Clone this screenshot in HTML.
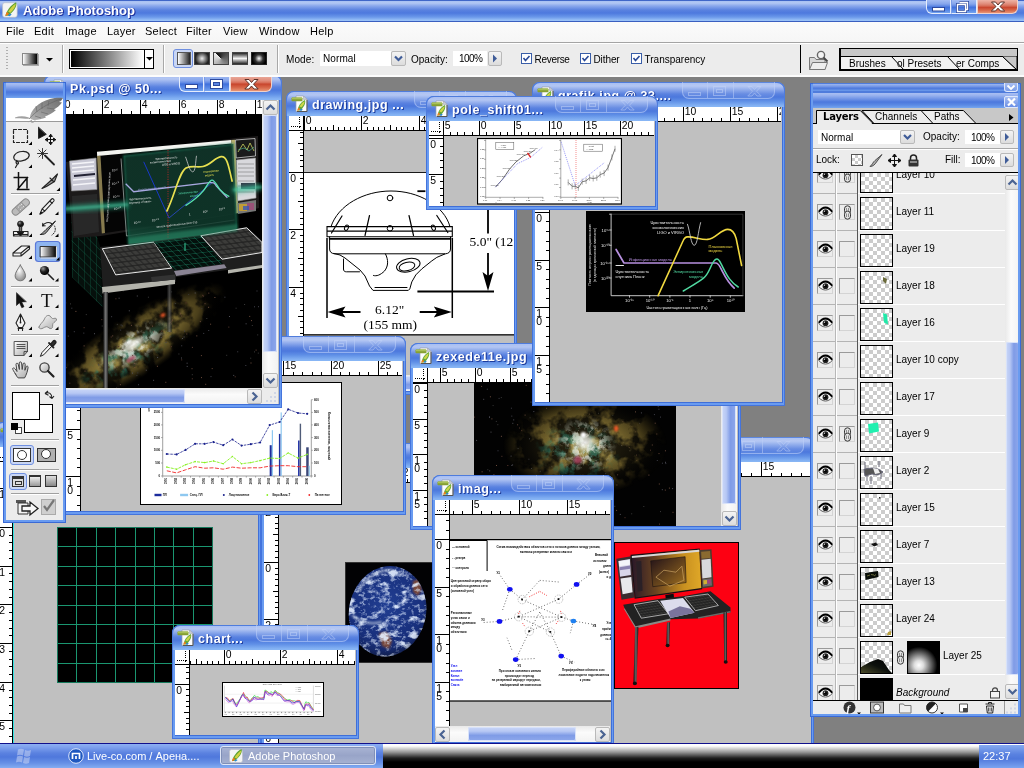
<!DOCTYPE html><html><head><meta charset="utf-8"><title>Adobe Photoshop</title><style>
html,body{margin:0;padding:0}
body{width:1024px;height:768px;overflow:hidden;background:#808080;position:relative;font-family:"Liberation Sans",sans-serif;font-size:11px;color:#000;line-height:1}
div,span,svg{position:absolute;box-sizing:border-box}
svg{overflow:hidden}
.t{white-space:nowrap}
.win{background:#699bf0;border-radius:8px 8px 0 0;box-shadow:inset 0 0 0 1px #4474dc}
.tb{left:0;right:0;top:0;height:25px;border-radius:8px 8px 0 0;border:1px solid #4f7cdc;border-bottom:0;
 background:linear-gradient(#a9bff2 0,#b3c6f3 3px,#86a4ea 7px,#5a82e0 11px,#4c78dd 14px,#5f8fe6 18px,#86b4f4 23px,#8ab8f5 25px)}
.ttl{color:#fff;font-family:"Liberation Sans",sans-serif;font-weight:bold;font-size:12.5px;text-shadow:1px 1px 0 #1c3c9c,1px 0 0 #3a5cc0;white-space:nowrap;letter-spacing:.55px}
.cv{background:#c0c0c0}
.sbv{background:linear-gradient(90deg,#e9e9e9,#fbfbfb 40%,#f2f2f2)}
.sbh{background:linear-gradient(#e9e9e9,#fbfbfb 40%,#f2f2f2)}
.thv{border-radius:2px;background:linear-gradient(90deg,#c9d6f7 0,#b7c8f4 30%,#7f9be6 60%,#8ea8ec 100%);box-shadow:inset 0 0 0 1px #d8e2fa}
.thh{border-radius:2px;background:linear-gradient(#c9d6f7 0,#b7c8f4 30%,#7f9be6 60%,#8ea8ec 100%);box-shadow:inset 0 0 0 1px #d8e2fa}
.sbb{background:linear-gradient(#f4f4f4,#dcdcdc);border:1px solid #b9b9b9;border-radius:2px}
</style></head><body><div style="left:0;top:0;width:1024px;height:768px;will-change:transform;overflow:hidden"><div class="win" style="left:-5px;top:422px;width:266px;height:340px;overflow:hidden"><div class="tb"></div><div style="left:163px;top:0px;width:93px;height:17px;border-radius:0 0 7px 7px;border:1px solid rgba(190,208,248,.55);border-top:0;background:rgba(200,215,250,.13);overflow:hidden"><div style="left:24px;top:0px;width:1px;height:17px;background:rgba(190,208,248,.5)"></div><div style="left:50px;top:0px;width:1px;height:17px;background:rgba(190,208,248,.5)"></div></div><svg style="left:163px;top:0px" width="93" height="17" opacity=".5"><rect x="6.500" y="10.500" width="12" height="3" fill="none" stroke="#c4d4f8" stroke-width="1"/><rect x="31.500" y="4.500" width="12" height="9" fill="none" stroke="#c4d4f8" stroke-width="1"/><rect x="34.500" y="7.500" width="6" height="3" fill="none" stroke="#c4d4f8" stroke-width="1"/><path d="M66 4.500h4l2.500 3 2.500-3h4l-4.500 4.700 4.700 4.800h-4.200l-2.500-3-2.500 3h-4.200l4.700-4.800z" fill="none" stroke="#c4d4f8" stroke-width="1" stroke-linejoin="round"/></svg><svg style="left:5px;top:4px" width="17" height="17" viewBox="0 0 17 17"><path d="M5 1h7.500l3.500 3.500V16.500H5z" fill="#fdfdfd" stroke="#9a9ea8" stroke-width=".7"/><path d="M12.500 1v3.500H16z" fill="#c8ccd6" stroke="#9a9ea8" stroke-width=".5"/><path d="M16 5v11.500H6" fill="none" stroke="#555" stroke-width="1"/><path d="M6.500 15.500c.5-4 3-8.500 7.500-10.500 1.200 3-1.500 8-5 10.500z" fill="#62a83a"/><path d="M8.500 11.500c1-2 3-4.200 5-5.200.3 2-1.500 4.500-3 6z" fill="#d0d648"/><path d="M6.200 16l1-3.500 2.300 1.700z" fill="#f07c1c"/><path d="M8.500 15.300l1.500-1.500 1.800.7-1.600 1.400z" fill="#2a86d0"/><rect x="0.500" y="2.500" width="11" height="3.800" rx=".8" fill="#86a032"/><rect x="0.800" y="2.600" width="10.400" height="1.600" rx=".6" fill="#a8c058"/></svg><span class="ttl" style="left:26px;top:8px;">grid.psd @ 5...</span><div style="left:3px;top:25px;width:261px;height:312px;background:#3f6fd8"></div><div style="left:3px;top:25px;width:260px;height:311px;overflow:hidden;background:#c0c0c0"><svg style="left:0px;top:0px" width="15" height="15" shape-rendering="crispEdges"><rect width="15" height="15" fill="#fff"/><rect x="14" width="1" height="15" fill="#000"/><rect y="14" width="15" height="1" fill="#000"/><path d="M1.5 10.5H9M10.5 1V9" stroke="#000" stroke-width="1" stroke-dasharray="1 1" fill="none"/><path d="M9.5 10.5h2M10.5 9.5v2" stroke="#000" stroke-width="1" fill="none"/></svg><svg style="left:15px;top:0px" width="244" height="15" shape-rendering="crispEdges"><rect width="244" height="15" fill="#fff"/><path d="M-7.5 11V14M0.5 11V14M7.5 0V14M15.5 11V14M23.5 11V14M31.5 11V14M38.5 11V14M46.5 0V14M54.5 11V14M61.5 11V14M69.5 11V14M77.5 11V14M85.5 0V14M92.5 11V14M100.5 11V14M108.5 11V14M116.5 11V14M123.5 0V14M131.5 11V14M139.5 11V14M147.5 11V14M154.5 11V14M162.5 0V14M170.5 11V14M178.5 11V14M185.5 11V14M193.5 11V14M201.5 0V14M209.5 11V14M216.5 11V14M224.5 11V14M232.5 11V14M240.5 0V14" stroke="#000" stroke-width="1" fill="none"/><rect x="0" y="14" width="244" height="1" fill="#000"/><g font-family="Liberation Sans,sans-serif" font-size="10.4" fill="#000" shape-rendering="auto"><text x="8.7" y="8.2">1</text><text x="47.7" y="8.2">0</text><text x="86.7" y="8.2">1</text><text x="124.7" y="8.2">2</text><text x="163.7" y="8.2">3</text><text x="202.7" y="8.2">4</text><text x="241.7" y="8.2">5</text></g></svg><svg style="left:0px;top:15px" width="15" height="296" shape-rendering="crispEdges"><rect width="15" height="296" fill="#fff"/><path d="M0 -11.5H14M11 -4.5H14M11 3.5H14M11 11.5H14M11 19.5H14M0 26.5H14M11 34.5H14M11 42.5H14M11 50.5H14M11 57.5H14M0 65.5H14M11 73.5H14M11 80.5H14M11 88.5H14M11 96.5H14M0 104.5H14M11 111.5H14M11 119.5H14M11 127.5H14M11 135.5H14M0 142.5H14M11 150.5H14M11 158.5H14M11 166.5H14M11 173.5H14M0 181.5H14M11 189.5H14M11 197.5H14M11 204.5H14M11 212.5H14M0 220.5H14M11 228.5H14M11 235.5H14M11 243.5H14M11 251.5H14M0 258.5H14M11 266.5H14M11 274.5H14M11 282.5H14M11 289.5H14" stroke="#000" stroke-width="1" fill="none"/><rect x="14" y="0" width="1" height="296" fill="#000"/><g font-family="Liberation Sans,sans-serif" font-size="10.4" fill="#000" shape-rendering="auto"><text x="1.2" y="-2.1999999999999993">2</text><text x="1.2" y="35.8">1</text><text x="1.2" y="74.8">0</text><text x="1.2" y="113.8">1</text><text x="1.2" y="151.8">2</text><text x="1.2" y="190.8">3</text><text x="1.2" y="229.8">4</text><text x="1.2" y="267.8">5</text></g></svg><div style="left:15px;top:15px;width:1px;height:311px;background:#30e4e4"></div><div style="left:59px;top:80px;width:156px;height:156px;"><svg style="left:0;top:0" width="156" height="156" viewBox="57 527 156 156" shape-rendering="crispEdges"><rect x="57" y="527" width="156" height="156" fill="#000"/><path d="M57.5 527V683M57 527.5H213M76.9 527V683M57 546.9H213M96.3 527V683M57 566.3H213M115.7 527V683M57 585.7H213M135.1 527V683M57 605.1H213M154.5 527V683M57 624.5H213M173.9 527V683M57 643.9H213M193.3 527V683M57 663.3H213M212.7 527V683M57 682.7H213" stroke="#1a9670" stroke-width="1" fill="none"/><rect x="57.500" y="527.500" width="155" height="155" fill="none" stroke="#167a5c"/></svg></div></div></div><div class="win" style="left:261px;top:443px;width:360px;height:320px;overflow:hidden"><div class="tb"></div><div style="left:257px;top:0px;width:93px;height:17px;border-radius:0 0 7px 7px;border:1px solid rgba(190,208,248,.55);border-top:0;background:rgba(200,215,250,.13);overflow:hidden"><div style="left:24px;top:0px;width:1px;height:17px;background:rgba(190,208,248,.5)"></div><div style="left:50px;top:0px;width:1px;height:17px;background:rgba(190,208,248,.5)"></div></div><svg style="left:257px;top:0px" width="93" height="17" opacity=".5"><rect x="6.500" y="10.500" width="12" height="3" fill="none" stroke="#c4d4f8" stroke-width="1"/><rect x="31.500" y="4.500" width="12" height="9" fill="none" stroke="#c4d4f8" stroke-width="1"/><rect x="34.500" y="7.500" width="6" height="3" fill="none" stroke="#c4d4f8" stroke-width="1"/><path d="M66 4.500h4l2.500 3 2.500-3h4l-4.500 4.700 4.700 4.800h-4.200l-2.500-3-2.500 3h-4.200l4.700-4.800z" fill="none" stroke="#c4d4f8" stroke-width="1" stroke-linejoin="round"/></svg><svg style="left:5px;top:4px" width="17" height="17" viewBox="0 0 17 17"><path d="M5 1h7.500l3.500 3.500V16.500H5z" fill="#fdfdfd" stroke="#9a9ea8" stroke-width=".7"/><path d="M12.500 1v3.500H16z" fill="#c8ccd6" stroke="#9a9ea8" stroke-width=".5"/><path d="M16 5v11.500H6" fill="none" stroke="#555" stroke-width="1"/><path d="M6.500 15.500c.5-4 3-8.500 7.500-10.500 1.200 3-1.500 8-5 10.500z" fill="#62a83a"/><path d="M8.500 11.500c1-2 3-4.200 5-5.200.3 2-1.500 4.500-3 6z" fill="#d0d648"/><path d="M6.200 16l1-3.500 2.300 1.700z" fill="#f07c1c"/><path d="M8.500 15.300l1.500-1.500 1.800.7-1.600 1.400z" fill="#2a86d0"/><rect x="0.500" y="2.500" width="11" height="3.800" rx=".8" fill="#86a032"/><rect x="0.800" y="2.600" width="10.400" height="1.600" rx=".6" fill="#a8c058"/></svg><span class="ttl" style="left:26px;top:8px;">earth.jpg @ 2...</span><div style="left:3px;top:25px;width:355px;height:292px;background:#3f6fd8"></div><div style="left:3px;top:25px;width:354px;height:291px;overflow:hidden;background:#c0c0c0"><svg style="left:0px;top:0px" width="15" height="15" shape-rendering="crispEdges"><rect width="15" height="15" fill="#fff"/><rect x="14" width="1" height="15" fill="#000"/><rect y="14" width="15" height="1" fill="#000"/><path d="M1.5 10.5H9M10.5 1V9" stroke="#000" stroke-width="1" stroke-dasharray="1 1" fill="none"/><path d="M9.5 10.5h2M10.5 9.5v2" stroke="#000" stroke-width="1" fill="none"/></svg><svg style="left:15px;top:0px" width="338" height="15" shape-rendering="crispEdges"><rect width="338" height="15" fill="#fff"/><path d="M-6.5 11V14M-1.5 11V14M4.5 11V14M10.5 0V14M15.5 11V14M21.5 11V14M26.5 11V14M32.5 11V14M38.5 9V14M43.5 11V14M49.5 11V14M55.5 11V14M60.5 11V14M66.5 0V14M72.5 11V14M77.5 11V14M83.5 11V14M89.5 11V14M94.5 9V14M100.5 11V14M106.5 11V14M111.5 11V14M117.5 11V14M122.5 0V14M128.5 11V14M134.5 11V14M139.5 11V14M145.5 11V14M151.5 9V14M156.5 11V14M162.5 11V14M168.5 11V14M173.5 11V14M179.5 0V14M185.5 11V14M190.5 11V14M196.5 11V14M202.5 11V14M207.5 9V14M213.5 11V14M219.5 11V14M224.5 11V14M230.5 11V14M236.5 0V14M241.5 11V14M247.5 11V14M252.5 11V14M258.5 11V14M264.5 9V14M269.5 11V14M275.5 11V14M281.5 11V14M286.5 11V14M292.5 0V14M298.5 11V14M303.5 11V14M309.5 11V14M315.5 11V14M320.5 9V14M326.5 11V14M332.5 11V14M337.5 11V14" stroke="#000" stroke-width="1" fill="none"/><rect x="0" y="14" width="338" height="1" fill="#000"/><g font-family="Liberation Sans,sans-serif" font-size="10.4" fill="#000" shape-rendering="auto"><text x="11.7" y="8.2">2</text><text x="67.7" y="8.2">0</text><text x="123.7" y="8.2">2</text><text x="180.7" y="8.2">4</text><text x="237.7" y="8.2">6</text><text x="293.7" y="8.2">8</text></g></svg><svg style="left:0px;top:15px" width="15" height="276" shape-rendering="crispEdges"><rect width="15" height="276" fill="#fff"/><path d="M11 -10.5H14M9 -4.5H14M11 0.5H14M11 6.5H14M11 11.5H14M11 17.5H14M0 23.5H14M11 28.5H14M11 34.5H14M11 40.5H14M11 45.5H14M9 51.5H14M11 57.5H14M11 62.5H14M11 68.5H14M11 74.5H14M0 79.5H14M11 85.5H14M11 91.5H14M11 96.5H14M11 102.5H14M9 108.5H14M11 113.5H14M11 119.5H14M11 124.5H14M11 130.5H14M0 136.5H14M11 141.5H14M11 147.5H14M11 153.5H14M11 158.5H14M9 164.5H14M11 170.5H14M11 175.5H14M11 181.5H14M11 187.5H14M0 192.5H14M11 198.5H14M11 204.5H14M11 209.5H14M11 215.5H14M9 221.5H14M11 226.5H14M11 232.5H14M11 237.5H14M11 243.5H14M0 249.5H14M11 254.5H14M11 260.5H14M11 266.5H14M11 271.5H14" stroke="#000" stroke-width="1" fill="none"/><rect x="14" y="0" width="1" height="276" fill="#000"/><g font-family="Liberation Sans,sans-serif" font-size="10.4" fill="#000" shape-rendering="auto"><text x="1.2" y="32.8">2</text><text x="1.2" y="88.8">0</text><text x="1.2" y="145.8">2</text><text x="1.2" y="201.8">4</text><text x="1.2" y="258.8">6</text></g></svg><div style="left:81px;top:94px;width:100px;height:101px;"><svg style="left:0;top:0" width="100" height="101" viewBox="344 561 100 101" ><defs><clipPath id="eac"><ellipse cx="386.600" cy="610.200" rx="38.500" ry="45.500" transform="rotate(12 386.600 610.200)"/></clipPath><radialGradient id="eag" cx=".42" cy=".42" r=".62"><stop offset="0" stop-color="#213e92"/><stop offset=".6" stop-color="#182f7c"/><stop offset=".88" stop-color="#14245a"/><stop offset="1" stop-color="#0a1026"/></radialGradient><radialGradient id="eas" cx=".36" cy=".45" r=".68"><stop offset=".62" stop-color="#000" stop-opacity="0"/><stop offset=".9" stop-color="#000" stop-opacity=".55"/><stop offset="1" stop-color="#000" stop-opacity=".85"/></radialGradient><filter id="eat" x="0" y="0" width="100%" height="100%" color-interpolation-filters="sRGB"><feTurbulence type="fractalNoise" baseFrequency=".09 .13" numOctaves="5" seed="4" result="n"/><feColorMatrix in="n" type="matrix" values="0 0 0 0 .9  0 0 0 0 .94  0 0 0 0 1  4.500 0 0 0 -2.350"/></filter><filter id="eat2" x="0" y="0" width="100%" height="100%" color-interpolation-filters="sRGB"><feTurbulence type="fractalNoise" baseFrequency=".2 .26" numOctaves="3" seed="9" result="n"/><feColorMatrix in="n" type="matrix" values="0 0 0 0 .85  0 0 0 0 .9  0 0 0 0 .98  0 5 0 0 -2.700"/></filter><filter id="eab"><feGaussianBlur stdDeviation="1.200"/></filter></defs><rect x="344.500" y="561.500" width="99" height="100" fill="#020204" stroke="#333" stroke-width="1"/><g clip-path="url(#eac)"><rect x="344" y="561" width="100" height="101" fill="url(#eag)"/><path d="M412 580l6-2 3 10-4 7-5-4zM378 632l8-1 5 9-3 8-7-3z" fill="#7a4a3a" filter="url(#eab)"/><rect x="344" y="561" width="100" height="101" filter="url(#eat)" opacity=".9"/><rect x="344" y="561" width="100" height="101" filter="url(#eat2)" opacity=".55"/><path d="M358 590c5-13 20-22 34-21M351 614c8 7 18 10 30 7" stroke="#e8f0f8" stroke-width="2.500" fill="none" filter="url(#eab)" opacity=".55"/><rect x="344" y="561" width="100" height="101" fill="url(#eas)"/></g></svg></div></div></div><div class="win" style="left:560px;top:437px;width:254px;height:330px;overflow:hidden"><div class="tb"></div><div style="left:151px;top:0px;width:93px;height:17px;border-radius:0 0 7px 7px;border:1px solid rgba(190,208,248,.55);border-top:0;background:rgba(200,215,250,.13);overflow:hidden"><div style="left:24px;top:0px;width:1px;height:17px;background:rgba(190,208,248,.5)"></div><div style="left:50px;top:0px;width:1px;height:17px;background:rgba(190,208,248,.5)"></div></div><svg style="left:151px;top:0px" width="93" height="17" opacity=".5"><rect x="6.500" y="10.500" width="12" height="3" fill="none" stroke="#c4d4f8" stroke-width="1"/><rect x="31.500" y="4.500" width="12" height="9" fill="none" stroke="#c4d4f8" stroke-width="1"/><rect x="34.500" y="7.500" width="6" height="3" fill="none" stroke="#c4d4f8" stroke-width="1"/><path d="M66 4.500h4l2.500 3 2.500-3h4l-4.500 4.700 4.700 4.800h-4.200l-2.500-3-2.500 3h-4.200l4.700-4.800z" fill="none" stroke="#c4d4f8" stroke-width="1" stroke-linejoin="round"/></svg><svg style="left:5px;top:4px" width="17" height="17" viewBox="0 0 17 17"><path d="M5 1h7.500l3.500 3.500V16.500H5z" fill="#fdfdfd" stroke="#9a9ea8" stroke-width=".7"/><path d="M12.500 1v3.500H16z" fill="#c8ccd6" stroke="#9a9ea8" stroke-width=".5"/><path d="M16 5v11.500H6" fill="none" stroke="#555" stroke-width="1"/><path d="M6.500 15.500c.5-4 3-8.500 7.500-10.500 1.200 3-1.500 8-5 10.500z" fill="#62a83a"/><path d="M8.500 11.500c1-2 3-4.200 5-5.200.3 2-1.500 4.500-3 6z" fill="#d0d648"/><path d="M6.200 16l1-3.500 2.300 1.700z" fill="#f07c1c"/><path d="M8.500 15.300l1.500-1.500 1.800.7-1.600 1.400z" fill="#2a86d0"/><rect x="0.500" y="2.500" width="11" height="3.800" rx=".8" fill="#86a032"/><rect x="0.800" y="2.600" width="10.400" height="1.600" rx=".6" fill="#a8c058"/></svg><span class="ttl" style="left:26px;top:8px;">pk3.jpg</span><div style="left:3px;top:25px;width:249px;height:302px;background:#3f6fd8"></div><div style="left:3px;top:25px;width:248px;height:301px;overflow:hidden;background:#c0c0c0"><svg style="left:0px;top:0px" width="15" height="15" shape-rendering="crispEdges"><rect width="15" height="15" fill="#fff"/><rect x="14" width="1" height="15" fill="#000"/><rect y="14" width="15" height="1" fill="#000"/><path d="M1.5 10.5H9M10.5 1V9" stroke="#000" stroke-width="1" stroke-dasharray="1 1" fill="none"/><path d="M9.5 10.5h2M10.5 9.5v2" stroke="#000" stroke-width="1" fill="none"/></svg><svg style="left:15px;top:0px" width="232" height="15" shape-rendering="crispEdges"><rect width="232" height="15" fill="#fff"/><path d="M-14.5 0V14M-4.5 11V14M5.5 11V14M15.5 11V14M25.5 11V14M35.5 0V14M45.5 11V14M55.5 11V14M64.5 11V14M74.5 11V14M84.5 0V14M94.5 11V14M104.5 11V14M114.5 11V14M124.5 11V14M134.5 0V14M144.5 11V14M154.5 11V14M163.5 11V14M173.5 11V14M183.5 0V14M193.5 11V14M203.5 11V14M213.5 11V14M223.5 11V14" stroke="#000" stroke-width="1" fill="none"/><rect x="0" y="14" width="232" height="1" fill="#000"/><g font-family="Liberation Sans,sans-serif" font-size="10.4" fill="#000" shape-rendering="auto"><text x="-13.3" y="8.2">5</text><text x="36.7" y="8.2">0</text><text x="85.7" y="8.2">5</text><text x="135.7" y="8.2">10</text><text x="184.7" y="8.2">15</text></g></svg><svg style="left:0px;top:15px" width="15" height="286" shape-rendering="crispEdges"><rect width="15" height="286" fill="#fff"/><path d="M11 -13.5H14M11 -3.5H14M11 6.5H14M0 16.5H14M11 25.5H14M11 35.5H14M11 45.5H14M11 55.5H14M0 65.5H14M11 75.5H14M11 85.5H14M11 95.5H14M11 105.5H14M0 114.5H14M11 124.5H14M11 134.5H14M11 144.5H14M11 154.5H14M0 164.5H14M11 174.5H14M11 184.5H14M11 194.5H14M11 204.5H14M0 214.5H14M11 223.5H14M11 233.5H14M11 243.5H14M11 253.5H14M0 263.5H14M11 273.5H14M11 283.5H14" stroke="#000" stroke-width="1" fill="none"/><rect x="14" y="0" width="1" height="286" fill="#000"/><g font-family="Liberation Sans,sans-serif" font-size="10.4" fill="#000" shape-rendering="auto"><text x="1.2" y="25.8">5</text><text x="1.2" y="74.8">0</text><text x="1.2" y="123.8">5</text><text x="1.2" y="173.8">1</text><text x="1.2" y="181.8">0</text><text x="1.2" y="223.8">1</text><text x="1.2" y="231.8">5</text><text x="1.2" y="272.8">2</text><text x="1.2" y="280.8">0</text></g></svg><div style="left:51px;top:80px;width:125px;height:147px;"><svg style="left:0;top:0" width="125" height="147" viewBox="614 541.5 125 147" ><defs><linearGradient id="rdm" x1="0" y1="0" x2="1" y2="0"><stop offset="0" stop-color="#2a1828"/><stop offset=".35" stop-color="#6a4420"/><stop offset=".75" stop-color="#c89020"/><stop offset="1" stop-color="#e0a828"/></linearGradient><linearGradient id="rdi" x1="0" y1="0" x2="1" y2="1"><stop offset="0" stop-color="#201018"/><stop offset="1" stop-color="#a07020"/></linearGradient><linearGradient id="rdl" x1="0" x2="1"><stop offset="0" stop-color="#111"/><stop offset=".5" stop-color="#666"/><stop offset="1" stop-color="#111"/></linearGradient><pattern id="rdk" width="3" height="2.600" patternUnits="userSpaceOnUse" patternTransform="rotate(-9) skewX(35)"><rect width="3" height="2.600" fill="#1c1c1c"/><rect x=".4" y=".4" width="2.200" height="1.800" fill="#3a3a38"/></pattern></defs><rect x="614.500" y="542" width="124" height="146" fill="#fd0012" stroke="#000" stroke-width="1"/><polygon points="616.3,558.3 631.3,555.8 634.7,597.1 621.5,599.2" fill="#3a2c30"/><polygon points="699.7,549.6 711.5,548.8 713.6,586.2 701.8,588.1" fill="#4a3c30"/><polygon points="618.4,560.4 629.9,558.5 630.9,574.6 620.1,576.2" fill="#d8d4e8"/><polygon points="620.5,577.9 631.3,576.5 632.6,591.7 622.6,593.8" fill="#e8e8ec"/><polygon points="618.8,560.8 629.7,559.2 629.9,564.2 619.2,565.8" fill="#f4f4fa"/><polygon points="619.5,566.7 630.1,565.0 630.3,568.3 619.7,569.8" fill="#8a80b0"/><polygon points="701.1,551.2 710.1,550.4 710.5,557.5 701.5,558.3" fill="#8a6a30"/><polygon points="701.5,559.2 710.7,558.3 711.5,576.7 702.4,577.9" fill="#d8d8dc"/><polygon points="702.6,578.8 711.5,577.7 712.0,585.0 703.0,586.2" fill="#6a6a6a"/><polygon points="703.4,579.8 707.0,579.4 707.2,583.3 703.6,584.0" fill="#d0b030"/><polygon points="707.2,579.4 710.5,579.0 710.7,582.9 707.4,583.3" fill="#a04080"/><polygon points="630.5,554.2 699.7,547.9 702.2,588.8 634.7,598.3" fill="#181014"/><polygon points="631.8,555.4 699.2,549.2 701.3,587.5 635.5,596.9" fill="url(#rdm)"/><polygon points="631.8,555.4 699.2,549.2 699.4,551.2 631.9,557.5" fill="#d8d8d8"/><polygon points="650.7,560.4 685.1,556.2 686.1,582.1 652.8,586.2" fill="url(#rdi)" stroke="#1a1010" stroke-width=".6"/><polygon points="636.1,561.0 641.3,560.4 642.6,590.2 637.6,591.2" fill="#2a2026"/><path d="M655.9 576.7l8-7 12 2 6-6 2 14-14 6z" fill="none" stroke="#c8a060" stroke-width=".7"/><polygon points="665.3,594.4 673.6,593.3 674.2,598.8 665.9,599.6" fill="#0c0c0c"/><polygon points="623.2,604.2 659.0,598.5 683.0,595.8 710.5,590.8 730.5,606.9 730.5,611.7 698.0,617.9 671.5,618.8 635.5,627.1 624.7,608.3" fill="#222"/><polygon points="624.7,607.9 635.5,625.8 670.5,617.9 670.5,620.0 635.5,627.9 623.8,608.3" fill="#8a8a86"/><polygon points="698.0,616.7 730.5,610.4 730.5,612.1 698.0,618.3" fill="#6a6a68"/><polygon points="634.0,604.2 658.0,600.2 668.4,613.3 641.3,617.7" fill="url(#rdk)" stroke="#ddd" stroke-width=".7"/><polygon points="684.7,596.7 708.0,593.5 718.4,605.0 695.5,610.2" fill="url(#rdk)" stroke="#ddd" stroke-width=".7"/><polygon points="660.1,600.2 683.0,597.5 694.5,612.3 670.5,617.5" fill="#dcdcec"/><polygon points="668.4,611.0 679.9,605.8 690.3,608.3 694.5,612.3 670.5,617.5" fill="#7a749c"/><polygon points="635.1,626.7 638.4,626.2 636.5,684.0 633.4,684.0" fill="url(#rdl)"/><polygon points="667.0,622.1 670.1,621.7 669.2,645.4 666.3,645.4" fill="url(#rdl)"/><polygon points="723.6,611.7 727.0,611.2 727.0,662.1 724.2,662.1" fill="url(#rdl)"/><ellipse cx="634.9" cy="682.9" rx="2" ry="1.800" fill="#111"/><ellipse cx="667.6" cy="645.0" rx="2" ry="1.800" fill="#111"/><ellipse cx="725.7" cy="661.5" rx="2" ry="1.800" fill="#111"/></svg></div></div></div><div class="win" style="left:286px;top:91px;width:231px;height:304px;overflow:hidden"><div class="tb"></div><div style="left:128px;top:0px;width:93px;height:17px;border-radius:0 0 7px 7px;border:1px solid rgba(190,208,248,.55);border-top:0;background:rgba(200,215,250,.13);overflow:hidden"><div style="left:24px;top:0px;width:1px;height:17px;background:rgba(190,208,248,.5)"></div><div style="left:50px;top:0px;width:1px;height:17px;background:rgba(190,208,248,.5)"></div></div><svg style="left:128px;top:0px" width="93" height="17" opacity=".5"><rect x="6.500" y="10.500" width="12" height="3" fill="none" stroke="#c4d4f8" stroke-width="1"/><rect x="31.500" y="4.500" width="12" height="9" fill="none" stroke="#c4d4f8" stroke-width="1"/><rect x="34.500" y="7.500" width="6" height="3" fill="none" stroke="#c4d4f8" stroke-width="1"/><path d="M66 4.500h4l2.500 3 2.500-3h4l-4.500 4.700 4.700 4.800h-4.200l-2.500-3-2.500 3h-4.200l4.700-4.800z" fill="none" stroke="#c4d4f8" stroke-width="1" stroke-linejoin="round"/></svg><svg style="left:5px;top:4px" width="17" height="17" viewBox="0 0 17 17"><path d="M5 1h7.500l3.500 3.500V16.500H5z" fill="#fdfdfd" stroke="#9a9ea8" stroke-width=".7"/><path d="M12.500 1v3.500H16z" fill="#c8ccd6" stroke="#9a9ea8" stroke-width=".5"/><path d="M16 5v11.500H6" fill="none" stroke="#555" stroke-width="1"/><path d="M6.500 15.500c.5-4 3-8.500 7.500-10.500 1.200 3-1.500 8-5 10.500z" fill="#62a83a"/><path d="M8.500 11.500c1-2 3-4.200 5-5.200.3 2-1.500 4.500-3 6z" fill="#d0d648"/><path d="M6.200 16l1-3.500 2.300 1.700z" fill="#f07c1c"/><path d="M8.500 15.300l1.500-1.500 1.800.7-1.600 1.400z" fill="#2a86d0"/><rect x="0.500" y="2.500" width="11" height="3.800" rx=".8" fill="#86a032"/><rect x="0.800" y="2.600" width="10.400" height="1.600" rx=".6" fill="#a8c058"/></svg><span class="ttl" style="left:26px;top:8px;">drawing.jpg ...</span><div style="left:3px;top:25px;width:226px;height:276px;background:#3f6fd8"></div><div style="left:3px;top:25px;width:225px;height:275px;overflow:hidden;background:#c0c0c0"><svg style="left:0px;top:0px" width="15" height="15" shape-rendering="crispEdges"><rect width="15" height="15" fill="#fff"/><rect x="14" width="1" height="15" fill="#000"/><rect y="14" width="15" height="1" fill="#000"/><path d="M1.5 10.5H9M10.5 1V9" stroke="#000" stroke-width="1" stroke-dasharray="1 1" fill="none"/><path d="M9.5 10.5h2M10.5 9.5v2" stroke="#000" stroke-width="1" fill="none"/></svg><svg style="left:15px;top:0px" width="209" height="15" shape-rendering="crispEdges"><rect width="209" height="15" fill="#fff"/><path d="M-5.5 11V14M0.5 0V14M6.5 11V14M11.5 11V14M17.5 11V14M23.5 11V14M29.5 9V14M34.5 11V14M40.5 11V14M46.5 11V14M52.5 11V14M57.5 0V14M63.5 11V14M69.5 11V14M74.5 11V14M80.5 11V14M86.5 9V14M92.5 11V14M97.5 11V14M103.5 11V14M109.5 11V14M115.5 0V14M120.5 11V14M126.5 11V14M132.5 11V14M138.5 11V14M143.5 9V14M149.5 11V14M155.5 11V14M160.5 11V14M166.5 11V14M172.5 0V14M178.5 11V14M183.5 11V14M189.5 11V14M195.5 11V14M201.5 9V14M206.5 11V14" stroke="#000" stroke-width="1" fill="none"/><rect x="0" y="14" width="209" height="1" fill="#000"/><g font-family="Liberation Sans,sans-serif" font-size="10.4" fill="#000" shape-rendering="auto"><text x="1.7" y="8.2">0</text><text x="58.7" y="8.2">2</text><text x="116.7" y="8.2">4</text><text x="173.7" y="8.2">6</text></g></svg><svg style="left:0px;top:15px" width="15" height="260" shape-rendering="crispEdges"><rect width="15" height="260" fill="#fff"/><path d="M11 -10.5H14M11 -4.5H14M11 1.5H14M11 6.5H14M9 12.5H14M11 18.5H14M11 24.5H14M11 29.5H14M11 35.5H14M0 41.5H14M11 47.5H14M11 52.5H14M11 58.5H14M11 64.5H14M9 70.5H14M11 75.5H14M11 81.5H14M11 87.5H14M11 93.5H14M0 98.5H14M11 104.5H14M11 110.5H14M11 116.5H14M11 121.5H14M9 127.5H14M11 133.5H14M11 139.5H14M11 144.5H14M11 150.5H14M0 156.5H14M11 162.5H14M11 167.5H14M11 173.5H14M11 179.5H14M9 185.5H14M11 190.5H14M11 196.5H14M11 202.5H14M11 208.5H14M0 213.5H14M11 219.5H14M11 225.5H14M11 231.5H14M11 236.5H14M9 242.5H14M11 248.5H14M11 254.5H14M11 259.5H14" stroke="#000" stroke-width="1" fill="none"/><rect x="14" y="0" width="1" height="260" fill="#000"/><g font-family="Liberation Sans,sans-serif" font-size="10.4" fill="#000" shape-rendering="auto"><text x="1.2" y="50.8">0</text><text x="1.2" y="107.8">2</text><text x="1.2" y="165.8">4</text><text x="1.2" y="222.8">6</text></g></svg><div style="left:15px;top:56px;width:230px;height:164px;"><svg style="left:0;top:0" width="230" height="164" viewBox="304 172 230 164" ><rect x="304" y="172" width="230" height="164" fill="#fff"/><rect x="304" y="171.500" width="230" height="1.400" fill="#000"/><rect x="304" y="334.200" width="230" height="1.400" fill="#000"/><g fill="none" stroke="#000" stroke-width="1" stroke-linecap="round"><path d="M331 226.600C338 205 364 191 391 191c27 0 53 14 59 35.600"/><path d="M327 226.600H452.300V236.800H327zM327 231.100H452.300" stroke-width="1.100"/><path d="M329.600 238.800H450.500" stroke-width="1.800"/><path d="M329.600 237v12c0 3 2 4.500 5 4.800H445.500c3-.3 5-1.800 5-4.800v-12"/><path d="M334 253.500l6 1.500 5 3 15 12 5 6 4.500 10 3.500 4.400H408.300l1.500-1.500 2-7 4-7 6-6 10-8 5-3.500 8-3.400"/><path d="M375 287.500H407"/><path d="M343.500 259v10c0 2 1 2.800 3 2.800h13"/><path d="M385.500 254c3 6 3 12-1 17-4 4-8 5.500-11 4.500"/><ellipse cx="408.300" cy="265.300" rx="12" ry="6.500" transform="rotate(-14 408.300 265.300)"/><ellipse cx="407" cy="266.500" rx="8" ry="4.200" transform="rotate(-14 407 266.500)"/><path d="M342 216l-10.500 17M369.500 215.500l-4.500 20M409 215.500l4.500 20M436.800 215.500l11 17" stroke-width="1.200"/><circle cx="390" cy="198" r="2.800"/><circle cx="390" cy="228.300" r="2.800"/><ellipse cx="346.500" cy="227.700" rx="1.800" ry="2.800" transform="rotate(25 346.500 227.700)"/><ellipse cx="433.400" cy="227.700" rx="1.800" ry="2.800" transform="rotate(-25 433.400 227.700)"/><path d="M327 238v80M452.300 238v80" stroke-width="1.500" stroke-linecap="butt"/><path d="M417.400 291.500H494" stroke-width="2" stroke-linecap="butt"/><path d="M417.400 191.200h8" stroke-width="1.800" stroke-linecap="butt"/><path d="M336 312h24.500M419.700 312h24" stroke-width="1.800" stroke-linecap="butt"/><path d="M488 210v23.500M488 253v30" stroke-width="1.800" stroke-linecap="butt"/></g><path d="M327.500 312l18-5.500-3.500 5.500 3.500 5.500zM451.800 312l-18-5.500 3.500 5.500-3.500 5.500zM488 291l-5.500-19 5.500 4 5.500-4z" fill="#000"/><g font-family="Liberation Serif,serif" font-size="13.500" fill="#000"><text x="375" y="314">6.12"</text><text x="363.500" y="328.500">(155 mm)</text><text x="469.500" y="246">5.0" (127 mm)</text></g></svg></div><div class="sbh" style="left:0px;top:259px;width:224px;height:16px;"></div><div class="sbb" style="left:0px;top:259.5px;width:15px;height:15px"><svg style="left:-1px;top:-1px" width="15" height="15"><path d="M9.500 3.500L5.500 7.500l4 4" stroke="#4a6392" stroke-width="2.200" fill="none"/></svg></div><div class="sbb" style="left:209px;top:259.5px;width:15px;height:15px"><svg style="left:-1px;top:-1px" width="15" height="15"><path d="M5.500 3.500L9.500 7.500l-4 4" stroke="#4a6392" stroke-width="2.200" fill="none"/></svg></div><div class="thh" style="left:40px;top:260px;width:168px;height:14px;"></div></div></div><div class="win" style="left:63px;top:336px;width:343px;height:179px;overflow:hidden"><div class="tb"></div><div style="left:240px;top:0px;width:93px;height:17px;border-radius:0 0 7px 7px;border:1px solid rgba(190,208,248,.55);border-top:0;background:rgba(200,215,250,.13);overflow:hidden"><div style="left:24px;top:0px;width:1px;height:17px;background:rgba(190,208,248,.5)"></div><div style="left:50px;top:0px;width:1px;height:17px;background:rgba(190,208,248,.5)"></div></div><svg style="left:240px;top:0px" width="93" height="17" opacity=".5"><rect x="6.500" y="10.500" width="12" height="3" fill="none" stroke="#c4d4f8" stroke-width="1"/><rect x="31.500" y="4.500" width="12" height="9" fill="none" stroke="#c4d4f8" stroke-width="1"/><rect x="34.500" y="7.500" width="6" height="3" fill="none" stroke="#c4d4f8" stroke-width="1"/><path d="M66 4.500h4l2.500 3 2.500-3h4l-4.500 4.700 4.700 4.800h-4.200l-2.500-3-2.500 3h-4.200l4.700-4.800z" fill="none" stroke="#c4d4f8" stroke-width="1" stroke-linejoin="round"/></svg><svg style="left:5px;top:4px" width="17" height="17" viewBox="0 0 17 17"><path d="M5 1h7.500l3.500 3.500V16.500H5z" fill="#fdfdfd" stroke="#9a9ea8" stroke-width=".7"/><path d="M12.500 1v3.500H16z" fill="#c8ccd6" stroke="#9a9ea8" stroke-width=".5"/><path d="M16 5v11.500H6" fill="none" stroke="#555" stroke-width="1"/><path d="M6.500 15.500c.5-4 3-8.500 7.500-10.500 1.200 3-1.500 8-5 10.500z" fill="#62a83a"/><path d="M8.500 11.500c1-2 3-4.200 5-5.200.3 2-1.500 4.500-3 6z" fill="#d0d648"/><path d="M6.200 16l1-3.500 2.300 1.700z" fill="#f07c1c"/><path d="M8.500 15.300l1.500-1.500 1.800.7-1.600 1.400z" fill="#2a86d0"/><rect x="0.500" y="2.500" width="11" height="3.800" rx=".8" fill="#86a032"/><rect x="0.800" y="2.600" width="10.400" height="1.600" rx=".6" fill="#a8c058"/></svg><span class="ttl" style="left:26px;top:8px;">stat.gif @ 1...</span><div style="left:3px;top:25px;width:338px;height:151px;background:#3f6fd8"></div><div style="left:3px;top:25px;width:337px;height:150px;overflow:hidden;background:#c0c0c0"><svg style="left:0px;top:0px" width="15" height="15" shape-rendering="crispEdges"><rect width="15" height="15" fill="#fff"/><rect x="14" width="1" height="15" fill="#000"/><rect y="14" width="15" height="1" fill="#000"/><path d="M1.5 10.5H9M10.5 1V9" stroke="#000" stroke-width="1" stroke-dasharray="1 1" fill="none"/><path d="M9.5 10.5h2M10.5 9.5v2" stroke="#000" stroke-width="1" fill="none"/></svg><svg style="left:15px;top:0px" width="321" height="15" shape-rendering="crispEdges"><rect width="321" height="15" fill="#fff"/><path d="M-14.5 11V14M-5.5 11V14M4.5 11V14M13.5 0V14M23.5 11V14M32.5 11V14M42.5 11V14M51.5 11V14M60.5 0V14M70.5 11V14M79.5 11V14M89.5 11V14M98.5 11V14M108.5 0V14M117.5 11V14M127.5 11V14M136.5 11V14M146.5 11V14M155.5 0V14M164.5 11V14M174.5 11V14M183.5 11V14M193.5 11V14M202.5 0V14M212.5 11V14M221.5 11V14M231.5 11V14M240.5 11V14M250.5 0V14M259.5 11V14M268.5 11V14M278.5 11V14M287.5 11V14M297.5 0V14M306.5 11V14M316.5 11V14" stroke="#000" stroke-width="1" fill="none"/><rect x="0" y="14" width="321" height="1" fill="#000"/><g font-family="Liberation Sans,sans-serif" font-size="10.4" fill="#000" shape-rendering="auto"><text x="14.7" y="8.2">5</text><text x="61.7" y="8.2">0</text><text x="109.7" y="8.2">5</text><text x="156.7" y="8.2">10</text><text x="203.7" y="8.2">15</text><text x="251.7" y="8.2">20</text><text x="298.7" y="8.2">25</text></g></svg><svg style="left:0px;top:15px" width="15" height="135" shape-rendering="crispEdges"><rect width="15" height="135" fill="#fff"/><path d="M11 -12.5H14M11 -2.5H14M0 6.5H14M11 15.5H14M11 25.5H14M11 34.5H14M11 44.5H14M0 53.5H14M11 63.5H14M11 72.5H14M11 82.5H14M11 91.5H14M0 100.5H14M11 110.5H14M11 119.5H14M11 129.5H14" stroke="#000" stroke-width="1" fill="none"/><rect x="14" y="0" width="1" height="135" fill="#000"/><g font-family="Liberation Sans,sans-serif" font-size="10.4" fill="#000" shape-rendering="auto"><text x="1.2" y="15.8">0</text><text x="1.2" y="62.8">5</text><text x="1.2" y="109.8">1</text><text x="1.2" y="117.8">0</text></g></svg><div style="left:74px;top:21px;width:202px;height:123px;"><svg style="left:0;top:0" width="202" height="123" viewBox="140 381.5 202 123" ><rect x="140.500" y="382" width="201" height="122" fill="#fff" stroke="#000" stroke-width="1"/><g fill="none"><path d="M162.7 399.2V475.5H311.3V399.2" stroke="#777" stroke-width=".7"/><path d="M161.0 475.5h1.600M311.3 475.5h1.600M161.0 462.5h1.600M311.3 462.5h1.600M161.0 449.8h1.600M311.3 449.8h1.600M161.0 437.1h1.600M311.3 437.1h1.600M161.0 424.4h1.600M311.3 424.4h1.600M161.0 411.9h1.600M311.3 411.9h1.600M161.0 399.2h1.600M311.3 399.2h1.600M162.7 475.5v1.600M172.0 475.5v1.600M181.2 475.5v1.600M190.5 475.5v1.600M199.8 475.5v1.600M209.1 475.5v1.600M218.4 475.5v1.600M227.7 475.5v1.600M237.0 475.5v1.600M246.3 475.5v1.600M255.6 475.5v1.600M264.9 475.5v1.600M274.1 475.5v1.600M283.4 475.5v1.600M292.7 475.5v1.600M302.0 475.5v1.600M311.3 475.5v1.600" stroke="#777" stroke-width=".6"/><rect x="269.7" y="444.7" width="2.1" height="30.8" fill="#1c2c9c"/><rect x="271.8" y="429.7" width="1.2" height="45.7" fill="#8ec8f0"/><rect x="278.9" y="433.4" width="1.6" height="42.0" fill="#1c2c9c"/><rect x="280.6" y="411.9" width="1.2" height="63.6" fill="#8ec8f0"/><rect x="298.0" y="440.0" width="1.6" height="35.5" fill="#2838a8"/><rect x="299.7" y="423.2" width="1.4" height="52.3" fill="#505c78"/><rect x="306.2" y="446.8" width="2.5" height="28.7" fill="#3c4878"/><rect x="308.7" y="465.2" width="1.2" height="10.3" fill="#9cd0f0"/><path d="M166.8 453.5 L176.6 453.9 L185.6 449.4 L195.1 443.3 L204.7 443.3 L213.5 441.6 L223.2 444.7 L232.4 439.0 L241.6 445.1 L250.8 443.7 L260.1 442.0 L269.7 424.6 L279.6 421.5 L288.2 408.8 L298.0 412.5 L307.2 413.3" stroke="#18208c" stroke-width=".8" stroke-dasharray="2.500 1"/><path d="M166.8 466.6 L176.6 468.7 L185.6 464.2 L195.1 461.1 L204.7 462.1 L213.5 460.5 L223.2 463.2 L232.4 456.0 L241.6 463.2 L250.8 462.1 L260.1 460.1 L269.7 457.6 L279.6 458.0 L288.2 452.5 L298.0 457.6 L307.2 453.9" stroke="#88f020" stroke-width=".9" stroke-dasharray="3 1"/><path d="M166.8 470.3 L176.6 472.4 L185.6 469.3 L195.1 466.2 L204.7 467.7 L213.5 467.3 L223.2 468.7 L232.4 466.6 L241.6 467.7 L250.8 467.3 L260.1 467.3 L269.7 465.6 L279.6 465.2 L288.2 465.2 L298.0 466.2 L307.2 466.2" stroke="#f02828" stroke-width=".9" stroke-dasharray="4 1.500"/><circle cx="166.8" cy="453.5" r="1.100" fill="#18208c"/><circle cx="176.6" cy="453.9" r="1.100" fill="#18208c"/><circle cx="185.6" cy="449.4" r="1.100" fill="#18208c"/><circle cx="195.1" cy="443.3" r="1.100" fill="#18208c"/><circle cx="204.7" cy="443.3" r="1.100" fill="#18208c"/><circle cx="213.5" cy="441.6" r="1.100" fill="#18208c"/><circle cx="223.2" cy="444.7" r="1.100" fill="#18208c"/><circle cx="232.4" cy="439.0" r="1.100" fill="#18208c"/><circle cx="241.6" cy="445.1" r="1.100" fill="#18208c"/><circle cx="250.8" cy="443.7" r="1.100" fill="#18208c"/><circle cx="260.1" cy="442.0" r="1.100" fill="#18208c"/><circle cx="269.7" cy="424.6" r="1.100" fill="#18208c"/><circle cx="279.6" cy="421.5" r="1.100" fill="#18208c"/><circle cx="288.2" cy="408.8" r="1.100" fill="#18208c"/><circle cx="298.0" cy="412.5" r="1.100" fill="#18208c"/><circle cx="307.2" cy="413.3" r="1.100" fill="#18208c"/><circle cx="166.8" cy="466.6" r=".8" fill="#88f020"/><circle cx="176.6" cy="468.7" r=".8" fill="#88f020"/><circle cx="185.6" cy="464.2" r=".8" fill="#88f020"/><circle cx="195.1" cy="461.1" r=".8" fill="#88f020"/><circle cx="204.7" cy="462.1" r=".8" fill="#88f020"/><circle cx="213.5" cy="460.5" r=".8" fill="#88f020"/><circle cx="223.2" cy="463.2" r=".8" fill="#88f020"/><circle cx="232.4" cy="456.0" r=".8" fill="#88f020"/><circle cx="241.6" cy="463.2" r=".8" fill="#88f020"/><circle cx="250.8" cy="462.1" r=".8" fill="#88f020"/><circle cx="260.1" cy="460.1" r=".8" fill="#88f020"/><circle cx="269.7" cy="457.6" r=".8" fill="#88f020"/><circle cx="279.6" cy="458.0" r=".8" fill="#88f020"/><circle cx="288.2" cy="452.5" r=".8" fill="#88f020"/><circle cx="298.0" cy="457.6" r=".8" fill="#88f020"/><circle cx="307.2" cy="453.9" r=".8" fill="#88f020"/></g><g font-family="Liberation Sans,sans-serif" font-size="2.900" font-weight="bold" fill="#111"><text x="160.2" y="476.5" text-anchor="end">0</text><text x="160.2" y="463.5" text-anchor="end">500</text><text x="160.2" y="450.8" text-anchor="end">1000</text><text x="160.2" y="438.1" text-anchor="end">1500</text><text x="160.2" y="425.4" text-anchor="end">2000</text><text x="160.2" y="412.9" text-anchor="end">2500</text><text x="160.2" y="400.2" text-anchor="end">3000</text><text x="314.0" y="476.5">0</text><text x="314.0" y="463.5">100</text><text x="314.0" y="450.8">200</text><text x="314.0" y="438.1">300</text><text x="314.0" y="425.4">400</text><text x="314.0" y="412.9">500</text><text x="314.0" y="400.2">600</text><text transform="translate(167.4 477.3) rotate(-90)" text-anchor="end">1991</text><text transform="translate(176.7 477.3) rotate(-90)" text-anchor="end">1992</text><text transform="translate(186.1 477.3) rotate(-90)" text-anchor="end">1993</text><text transform="translate(195.4 477.3) rotate(-90)" text-anchor="end">1994</text><text transform="translate(204.8 477.3) rotate(-90)" text-anchor="end">1995</text><text transform="translate(214.1 477.3) rotate(-90)" text-anchor="end">1996</text><text transform="translate(223.5 477.3) rotate(-90)" text-anchor="end">1997</text><text transform="translate(232.8 477.3) rotate(-90)" text-anchor="end">1998</text><text transform="translate(242.2 477.3) rotate(-90)" text-anchor="end">1999</text><text transform="translate(251.5 477.3) rotate(-90)" text-anchor="end">2000</text><text transform="translate(260.9 477.3) rotate(-90)" text-anchor="end">2001</text><text transform="translate(270.2 477.3) rotate(-90)" text-anchor="end">2002</text><text transform="translate(279.6 477.3) rotate(-90)" text-anchor="end">2003</text><text transform="translate(289.0 477.3) rotate(-90)" text-anchor="end">2004</text><text transform="translate(298.3 477.3) rotate(-90)" text-anchor="end">2005</text><text transform="translate(307.7 477.3) rotate(-90)" text-anchor="end">2006</text><text transform="translate(327.8 435.5) rotate(90)" text-anchor="middle" font-size="3">Количество патентов, лицензий</text><text transform="translate(149.9 410.9) rotate(-90)" font-size="3">млн.</text><rect x="154.5" y="493.3" width="7" height="2.400" fill="#1c2c9c"/><text x="162.7" y="495.8">ПЛ</text><rect x="180.1" y="493.3" width="8" height="2.400" fill="#8ec8f0"/><text x="189.7" y="495.8">Спец. ПЛ</text><circle cx="223.8" cy="494.5" r="1" fill="#18208c"/><text x="228.7" y="495.8">Лицензионное</text><circle cx="267.3" cy="494.5" r=".9" fill="#88f020"/><text x="272.4" y="495.8">Евро/Азия-Т</text><circle cx="309.3" cy="494.5" r=".9" fill="#f02828"/><text x="314.8" y="495.8">Патентное</text></g></svg></div></div></div><div class="win" style="left:410px;top:343px;width:331px;height:187px;overflow:hidden"><div class="tb"></div><div style="left:228px;top:0px;width:93px;height:17px;border-radius:0 0 7px 7px;border:1px solid rgba(190,208,248,.55);border-top:0;background:rgba(200,215,250,.13);overflow:hidden"><div style="left:24px;top:0px;width:1px;height:17px;background:rgba(190,208,248,.5)"></div><div style="left:50px;top:0px;width:1px;height:17px;background:rgba(190,208,248,.5)"></div></div><svg style="left:228px;top:0px" width="93" height="17" opacity=".5"><rect x="6.500" y="10.500" width="12" height="3" fill="none" stroke="#c4d4f8" stroke-width="1"/><rect x="31.500" y="4.500" width="12" height="9" fill="none" stroke="#c4d4f8" stroke-width="1"/><rect x="34.500" y="7.500" width="6" height="3" fill="none" stroke="#c4d4f8" stroke-width="1"/><path d="M66 4.500h4l2.500 3 2.500-3h4l-4.500 4.700 4.700 4.800h-4.200l-2.500-3-2.500 3h-4.200l4.700-4.800z" fill="none" stroke="#c4d4f8" stroke-width="1" stroke-linejoin="round"/></svg><svg style="left:5px;top:4px" width="17" height="17" viewBox="0 0 17 17"><path d="M5 1h7.500l3.500 3.500V16.500H5z" fill="#fdfdfd" stroke="#9a9ea8" stroke-width=".7"/><path d="M12.500 1v3.500H16z" fill="#c8ccd6" stroke="#9a9ea8" stroke-width=".5"/><path d="M16 5v11.500H6" fill="none" stroke="#555" stroke-width="1"/><path d="M6.500 15.500c.5-4 3-8.500 7.500-10.500 1.200 3-1.500 8-5 10.500z" fill="#62a83a"/><path d="M8.500 11.500c1-2 3-4.200 5-5.200.3 2-1.500 4.500-3 6z" fill="#d0d648"/><path d="M6.200 16l1-3.500 2.300 1.700z" fill="#f07c1c"/><path d="M8.500 15.300l1.500-1.500 1.800.7-1.600 1.400z" fill="#2a86d0"/><rect x="0.500" y="2.500" width="11" height="3.800" rx=".8" fill="#86a032"/><rect x="0.800" y="2.600" width="10.400" height="1.600" rx=".6" fill="#a8c058"/></svg><span class="ttl" style="left:26px;top:8px;">zexede11e.jpg ...</span><div style="left:3px;top:25px;width:326px;height:159px;background:#3f6fd8"></div><div style="left:3px;top:25px;width:325px;height:158px;overflow:hidden;background:#c0c0c0"><svg style="left:0px;top:0px" width="15" height="15" shape-rendering="crispEdges"><rect width="15" height="15" fill="#fff"/><rect x="14" width="1" height="15" fill="#000"/><rect y="14" width="15" height="1" fill="#000"/><path d="M1.5 10.5H9M10.5 1V9" stroke="#000" stroke-width="1" stroke-dasharray="1 1" fill="none"/><path d="M9.5 10.5h2M10.5 9.5v2" stroke="#000" stroke-width="1" fill="none"/></svg><svg style="left:15px;top:0px" width="309" height="15" shape-rendering="crispEdges"><rect width="309" height="15" fill="#fff"/><path d="M-8.5 11V14M-1.5 11V14M5.5 11V14M12.5 0V14M19.5 11V14M26.5 11V14M33.5 11V14M40.5 11V14M47.5 0V14M54.5 11V14M61.5 11V14M68.5 11V14M75.5 11V14M82.5 0V14M89.5 11V14M96.5 11V14M103.5 11V14M110.5 11V14M117.5 0V14M124.5 11V14M131.5 11V14M138.5 11V14M145.5 11V14M152.5 0V14M159.5 11V14M166.5 11V14M173.5 11V14M180.5 11V14M187.5 0V14M194.5 11V14M201.5 11V14M208.5 11V14M215.5 11V14M222.5 0V14M229.5 11V14M236.5 11V14M243.5 11V14M250.5 11V14M257.5 0V14M264.5 11V14M271.5 11V14M278.5 11V14M285.5 11V14M292.5 0V14M299.5 11V14M306.5 11V14" stroke="#000" stroke-width="1" fill="none"/><rect x="0" y="14" width="309" height="1" fill="#000"/><g font-family="Liberation Sans,sans-serif" font-size="10.4" fill="#000" shape-rendering="auto"><text x="13.7" y="8.2">5</text><text x="48.7" y="8.2">0</text><text x="83.7" y="8.2">5</text><text x="118.7" y="8.2">10</text><text x="153.7" y="8.2">15</text><text x="188.7" y="8.2">20</text><text x="223.7" y="8.2">25</text><text x="258.7" y="8.2">30</text><text x="293.7" y="8.2">35</text></g></svg><svg style="left:0px;top:15px" width="15" height="143" shape-rendering="crispEdges"><rect width="15" height="143" fill="#fff"/><path d="M11 -13.5H14M11 -6.5H14M0 0.5H14M11 7.5H14M11 14.5H14M11 22.5H14M11 29.5H14M0 36.5H14M11 43.5H14M11 50.5H14M11 57.5H14M11 64.5H14M0 71.5H14M11 79.5H14M11 86.5H14M11 93.5H14M11 100.5H14M0 107.5H14M11 114.5H14M11 121.5H14M11 128.5H14M11 135.5H14M0 143.5H14" stroke="#000" stroke-width="1" fill="none"/><rect x="14" y="0" width="1" height="143" fill="#000"/><g font-family="Liberation Sans,sans-serif" font-size="10.4" fill="#000" shape-rendering="auto"><text x="1.2" y="9.8">0</text><text x="1.2" y="45.8">5</text><text x="1.2" y="80.8">1</text><text x="1.2" y="88.8">0</text><text x="1.2" y="116.8">1</text><text x="1.2" y="124.8">5</text><text x="1.2" y="152.8">2</text><text x="1.2" y="160.8">0</text></g></svg><div style="left:61px;top:15px;width:202px;height:160px;"><svg style="left:0;top:0" width="202" height="160" viewBox="474 383 202 160" ><defs><filter id="nbb1" x="-20%" y="-20%" width="140%" height="140%"><feGaussianBlur stdDeviation="6"/></filter><filter id="nbb2" x="-20%" y="-20%" width="140%" height="140%"><feGaussianBlur stdDeviation="2.500"/></filter><filter id="nbb3" x="-30%" y="-30%" width="160%" height="160%"><feGaussianBlur stdDeviation="1"/></filter><filter id="nbt" x="0" y="0" width="100%" height="100%" color-interpolation-filters="sRGB"><feTurbulence type="fractalNoise" baseFrequency="0.05" numOctaves="4" seed="7" result="n"/><feColorMatrix in="n" type="matrix" values="0 0 0 0 0  0 0 0 0 0  0 0 0 0 0  5 0 0 0 -2.2" result="m"/><feComposite in="SourceGraphic" in2="m" operator="in"/></filter><filter id="nbt2" x="0" y="0" width="100%" height="100%" color-interpolation-filters="sRGB"><feTurbulence type="fractalNoise" baseFrequency="0.09" numOctaves="4" seed="3" result="n"/><feColorMatrix in="n" type="matrix" values="0 0 0 0 0  0 0 0 0 0  0 0 0 0 0  0 5 0 0 -2.35" result="m"/><feComposite in="SourceGraphic" in2="m" operator="in"/></filter><filter id="nbt3" x="0" y="0" width="100%" height="100%" color-interpolation-filters="sRGB"><feTurbulence type="fractalNoise" baseFrequency="0.11699999999999999" numOctaves="4" seed="21" result="n"/><feColorMatrix in="n" type="matrix" values="0 0 0 0 0  0 0 0 0 0  0 0 0 0 0  0 0 6 0 -2.9" result="m"/><feComposite in="SourceGraphic" in2="m" operator="in"/></filter><radialGradient id="nbg1"><stop offset="0" stop-color="#b0a468"/><stop offset=".35" stop-color="#8a7838"/><stop offset=".7" stop-color="#5a4c20" stop-opacity=".8"/><stop offset="1" stop-color="#3a3010" stop-opacity="0"/></radialGradient><radialGradient id="nbg0"><stop offset="0" stop-color="#4a4020" stop-opacity=".7"/><stop offset=".6" stop-color="#2a2410" stop-opacity=".4"/><stop offset="1" stop-color="#000" stop-opacity="0"/></radialGradient><radialGradient id="nbg2"><stop offset="0" stop-color="#58a890"/><stop offset=".6" stop-color="#2c7a66" stop-opacity=".8"/><stop offset="1" stop-color="#1a5a4a" stop-opacity="0"/></radialGradient><radialGradient id="nbg3"><stop offset="0" stop-color="#fff"/><stop offset=".5" stop-color="#e8ece0" stop-opacity=".8"/><stop offset="1" stop-color="#c0c8b0" stop-opacity="0"/></radialGradient></defs><rect x="474" y="383" width="202" height="160" fill="#020202"/><rect x="565.4" y="472.6" width="1" height="1" fill="#3a3a3a"/><rect x="565.3" y="519.8" width="1" height="1" fill="#40404a"/><rect x="511.3" y="464.9" width="1" height="1" fill="#505058"/><rect x="598.0" y="412.8" width="1" height="1" fill="#3a3a3a"/><rect x="535.3" y="397.5" width="1" height="1" fill="#505058"/><rect x="602.2" y="478.3" width="1" height="1" fill="#3a3a3a"/><rect x="668.9" y="487.6" width="1" height="1" fill="#705040"/><rect x="605.3" y="482.7" width="1" height="1" fill="#705040"/><rect x="486.8" y="388.7" width="1" height="1" fill="#40404a"/><rect x="595.1" y="507.5" width="1" height="1" fill="#6a4a3a"/><rect x="563.0" y="517.8" width="1" height="1" fill="#705040"/><rect x="521.2" y="430.1" width="1" height="1" fill="#5a3a30"/><rect x="607.8" y="456.2" width="1" height="1" fill="#6a4a3a"/><rect x="556.2" y="471.2" width="1" height="1" fill="#5a3a30"/><rect x="617.0" y="433.4" width="1" height="1" fill="#40404a"/><rect x="577.6" y="387.8" width="1" height="1" fill="#705040"/><rect x="628.8" y="447.1" width="1" height="1" fill="#6a4a3a"/><rect x="552.1" y="536.3" width="1" height="1" fill="#505058"/><rect x="474.1" y="416.6" width="1" height="1" fill="#5a3a30"/><rect x="568.9" y="539.9" width="1" height="1" fill="#3a3a3a"/><rect x="558.8" y="473.6" width="1" height="1" fill="#40404a"/><rect x="631.3" y="426.2" width="1" height="1" fill="#5a3a30"/><rect x="536.9" y="385.4" width="1" height="1" fill="#3a3a3a"/><rect x="627.1" y="401.9" width="1" height="1" fill="#40404a"/><rect x="616.8" y="384.8" width="1" height="1" fill="#3a3a3a"/><rect x="635.0" y="411.4" width="1" height="1" fill="#705040"/><rect x="512.1" y="464.4" width="1" height="1" fill="#505058"/><rect x="629.4" y="450.1" width="1" height="1" fill="#3a3a3a"/><rect x="497.5" y="450.3" width="1" height="1" fill="#40404a"/><rect x="474.1" y="521.3" width="1" height="1" fill="#705040"/><rect x="535.4" y="524.6" width="1" height="1" fill="#40404a"/><rect x="511.8" y="542.3" width="1" height="1" fill="#705040"/><rect x="603.7" y="399.1" width="1" height="1" fill="#40404a"/><rect x="517.1" y="424.3" width="1" height="1" fill="#705040"/><rect x="540.4" y="430.4" width="1" height="1" fill="#5a3a30"/><rect x="489.0" y="416.4" width="1" height="1" fill="#505058"/><rect x="523.1" y="479.2" width="1" height="1" fill="#6a4a3a"/><rect x="599.7" y="403.4" width="1" height="1" fill="#705040"/><rect x="571.7" y="474.9" width="1" height="1" fill="#3a3a3a"/><rect x="510.9" y="407.7" width="1" height="1" fill="#40404a"/><rect x="639.2" y="422.9" width="1" height="1" fill="#40404a"/><rect x="506.0" y="483.6" width="1" height="1" fill="#705040"/><rect x="513.7" y="535.0" width="1" height="1" fill="#3a3a3a"/><rect x="595.9" y="450.4" width="1" height="1" fill="#5a3a30"/><rect x="496.0" y="465.0" width="1" height="1" fill="#6a4a3a"/><rect x="522.2" y="495.7" width="1" height="1" fill="#6a4a3a"/><rect x="559.0" y="527.8" width="1" height="1" fill="#3a3a3a"/><rect x="533.3" y="411.1" width="1" height="1" fill="#505058"/><rect x="671.4" y="403.2" width="1" height="1" fill="#3a3a3a"/><rect x="587.0" y="519.4" width="1" height="1" fill="#705040"/><rect x="489.0" y="417.0" width="1" height="1" fill="#40404a"/><rect x="625.3" y="394.1" width="1" height="1" fill="#3a3a3a"/><rect x="564.0" y="392.7" width="1" height="1" fill="#40404a"/><rect x="531.0" y="468.0" width="1" height="1" fill="#40404a"/><rect x="492.6" y="405.1" width="1" height="1" fill="#3a3a3a"/><rect x="672.1" y="488.1" width="1" height="1" fill="#505058"/><rect x="579.4" y="534.5" width="1" height="1" fill="#705040"/><rect x="481.1" y="385.9" width="1" height="1" fill="#6a4a3a"/><rect x="615.6" y="537.0" width="1" height="1" fill="#5a3a30"/><rect x="594.9" y="395.0" width="1" height="1" fill="#5a3a30"/><rect x="621.6" y="434.0" width="1" height="1" fill="#5a3a30"/><rect x="489.2" y="470.4" width="1" height="1" fill="#505058"/><rect x="483.0" y="532.8" width="1" height="1" fill="#505058"/><rect x="616.1" y="509.9" width="1" height="1" fill="#6a4a3a"/><rect x="545.1" y="492.6" width="1" height="1" fill="#5a3a30"/><rect x="650.0" y="449.7" width="1" height="1" fill="#5a3a30"/><rect x="648.4" y="474.6" width="1" height="1" fill="#705040"/><rect x="607.8" y="443.7" width="1" height="1" fill="#5a3a30"/><rect x="597.0" y="395.8" width="1" height="1" fill="#505058"/><rect x="497.3" y="424.2" width="1" height="1" fill="#3a3a3a"/><rect x="621.1" y="445.1" width="1" height="1" fill="#505058"/><rect x="614.2" y="456.2" width="1" height="1" fill="#3a3a3a"/><rect x="643.4" y="396.4" width="1" height="1" fill="#705040"/><rect x="480.0" y="479.2" width="1" height="1" fill="#3a3a3a"/><rect x="478.5" y="536.2" width="1" height="1" fill="#5a3a30"/><rect x="574.4" y="481.3" width="1" height="1" fill="#3a3a3a"/><rect x="525.7" y="384.8" width="1" height="1" fill="#6a4a3a"/><rect x="502.9" y="480.9" width="1" height="1" fill="#705040"/><rect x="508.3" y="527.9" width="1" height="1" fill="#505058"/><rect x="661.9" y="462.7" width="1" height="1" fill="#40404a"/><rect x="540.0" y="489.5" width="1" height="1" fill="#40404a"/><rect x="602.1" y="511.6" width="1" height="1" fill="#40404a"/><rect x="651.8" y="444.5" width="1" height="1" fill="#705040"/><rect x="660.0" y="416.6" width="1" height="1" fill="#40404a"/><rect x="574.3" y="516.9" width="1" height="1" fill="#5a3a30"/><rect x="617.7" y="535.0" width="1" height="1" fill="#6a4a3a"/><rect x="640.0" y="401.1" width="1" height="1" fill="#3a3a3a"/><rect x="529.6" y="417.3" width="1" height="1" fill="#3a3a3a"/><rect x="551.3" y="466.2" width="1" height="1" fill="#505058"/><rect x="537.7" y="517.3" width="1" height="1" fill="#705040"/><rect x="565.4" y="394.9" width="1" height="1" fill="#5a3a30"/><rect x="530.2" y="480.2" width="1" height="1" fill="#505058"/><rect x="617.1" y="474.3" width="1" height="1" fill="#6a4a3a"/><rect x="605.2" y="473.2" width="1" height="1" fill="#505058"/><rect x="501.4" y="455.8" width="1" height="1" fill="#5a3a30"/><rect x="629.4" y="425.6" width="1" height="1" fill="#40404a"/><rect x="635.0" y="540.4" width="1" height="1" fill="#5a3a30"/><rect x="564.2" y="483.8" width="1" height="1" fill="#505058"/><rect x="603.3" y="442.0" width="1" height="1" fill="#5a3a30"/><rect x="612.3" y="414.9" width="1" height="1" fill="#3a3a3a"/><rect x="525.7" y="497.3" width="1" height="1" fill="#3a3a3a"/><rect x="582.0" y="388.8" width="1" height="1" fill="#40404a"/><rect x="529.0" y="438.3" width="1" height="1" fill="#505058"/><rect x="665.3" y="463.1" width="1" height="1" fill="#40404a"/><rect x="553.5" y="509.7" width="1" height="1" fill="#40404a"/><rect x="491.6" y="532.2" width="1" height="1" fill="#505058"/><rect x="552.4" y="455.1" width="1" height="1" fill="#40404a"/><rect x="600.4" y="528.6" width="1" height="1" fill="#3a3a3a"/><rect x="585.1" y="487.4" width="1" height="1" fill="#705040"/><rect x="634.9" y="534.1" width="1" height="1" fill="#3a3a3a"/><rect x="539.9" y="540.2" width="1" height="1" fill="#5a3a30"/><rect x="619.8" y="513.9" width="1" height="1" fill="#505058"/><rect x="660.7" y="402.8" width="1" height="1" fill="#40404a"/><rect x="655.8" y="539.9" width="1" height="1" fill="#6a4a3a"/><rect x="582.5" y="509.5" width="1" height="1" fill="#6a4a3a"/><rect x="526.9" y="497.9" width="1" height="1" fill="#5a3a30"/><rect x="544.4" y="396.2" width="1" height="1" fill="#3a3a3a"/><rect x="543.1" y="450.4" width="1" height="1" fill="#6a4a3a"/><rect x="572.5" y="387.5" width="1" height="1" fill="#5a3a30"/><rect x="560.6" y="388.6" width="1" height="1" fill="#705040"/><rect x="541.7" y="509.1" width="1" height="1" fill="#40404a"/><rect x="569.1" y="543.0" width="1" height="1" fill="#505058"/><rect x="578.7" y="491.5" width="1" height="1" fill="#3a3a3a"/><rect x="665.0" y="461.8" width="1" height="1" fill="#505058"/><rect x="491.4" y="418.4" width="1" height="1" fill="#705040"/><rect x="586.9" y="516.0" width="1" height="1" fill="#705040"/><rect x="603.1" y="466.6" width="1" height="1" fill="#705040"/><rect x="525.8" y="490.4" width="1" height="1" fill="#705040"/><rect x="516.1" y="519.1" width="1" height="1" fill="#705040"/><rect x="579.9" y="474.7" width="1" height="1" fill="#40404a"/><rect x="557.0" y="401.3" width="1" height="1" fill="#5a3a30"/><rect x="596.3" y="387.4" width="1" height="1" fill="#5a3a30"/><rect x="578.2" y="447.1" width="1" height="1" fill="#705040"/><rect x="498.6" y="397.9" width="1" height="1" fill="#40404a"/><rect x="487.3" y="469.2" width="1" height="1" fill="#3a3a3a"/><rect x="660.0" y="511.1" width="1" height="1" fill="#3a3a3a"/><rect x="528.4" y="458.7" width="1" height="1" fill="#40404a"/><rect x="542.6" y="527.1" width="1" height="1" fill="#3a3a3a"/><rect x="580.0" y="400.4" width="1" height="1" fill="#3a3a3a"/><rect x="598.8" y="531.0" width="1" height="1" fill="#40404a"/><rect x="615.8" y="539.4" width="1" height="1" fill="#5a3a30"/><rect x="513.2" y="419.4" width="1" height="1" fill="#505058"/><rect x="531.4" y="498.8" width="1" height="1" fill="#40404a"/><rect x="599.2" y="399.8" width="1" height="1" fill="#505058"/><rect x="591.6" y="519.3" width="1" height="1" fill="#705040"/><rect x="524.6" y="414.6" width="1" height="1" fill="#705040"/><rect x="651.5" y="386.7" width="1" height="1" fill="#505058"/><rect x="557.5" y="467.7" width="1" height="1" fill="#40404a"/><rect x="582.7" y="521.2" width="1" height="1" fill="#705040"/><rect x="603.0" y="467.7" width="1" height="1" fill="#705040"/><rect x="597.6" y="520.1" width="1" height="1" fill="#40404a"/><rect x="658.8" y="483.5" width="1" height="1" fill="#6a4a3a"/><rect x="656.3" y="433.5" width="1" height="1" fill="#6a4a3a"/><rect x="653.9" y="414.1" width="1" height="1" fill="#40404a"/><rect x="653.3" y="404.4" width="1" height="1" fill="#40404a"/><rect x="500.8" y="397.1" width="1" height="1" fill="#3a3a3a"/><rect x="493.6" y="516.1" width="1" height="1" fill="#3a3a3a"/><rect x="583.7" y="495.8" width="1" height="1" fill="#40404a"/><rect x="555.4" y="492.6" width="1" height="1" fill="#5a3a30"/><rect x="493.4" y="474.2" width="1" height="1" fill="#6a4a3a"/><rect x="658.1" y="537.9" width="1" height="1" fill="#5a3a30"/><rect x="616.4" y="484.5" width="1" height="1" fill="#6a4a3a"/><rect x="575.6" y="492.7" width="1" height="1" fill="#40404a"/><rect x="636.2" y="460.1" width="1" height="1" fill="#5a3a30"/><rect x="481.6" y="471.3" width="1" height="1" fill="#705040"/><rect x="656.8" y="460.0" width="1" height="1" fill="#40404a"/><rect x="511.3" y="415.6" width="1" height="1" fill="#40404a"/><rect x="674.0" y="531.3" width="1" height="1" fill="#5a3a30"/><rect x="591.1" y="404.5" width="1" height="1" fill="#505058"/><rect x="567.3" y="505.4" width="1" height="1" fill="#6a4a3a"/><rect x="553.0" y="451.2" width="1" height="1" fill="#6a4a3a"/><rect x="560.9" y="479.1" width="1" height="1" fill="#5a3a30"/><rect x="602.1" y="389.5" width="1" height="1" fill="#40404a"/><rect x="510.6" y="455.6" width="1" height="1" fill="#505058"/><rect x="548.8" y="530.5" width="1" height="1" fill="#705040"/><rect x="507.3" y="465.0" width="1" height="1" fill="#5a3a30"/><rect x="539.4" y="396.6" width="1" height="1" fill="#505058"/><rect x="650.9" y="528.4" width="1" height="1" fill="#3a3a3a"/><rect x="589.1" y="413.6" width="1" height="1" fill="#705040"/><rect x="672.5" y="511.8" width="1" height="1" fill="#6a4a3a"/><rect x="530.5" y="401.6" width="1" height="1" fill="#505058"/><rect x="631.2" y="513.3" width="1" height="1" fill="#3a3a3a"/><rect x="500.9" y="435.8" width="1" height="1" fill="#705040"/><rect x="614.3" y="505.8" width="1" height="1" fill="#40404a"/><rect x="556.0" y="498.6" width="1" height="1" fill="#5a3a30"/><rect x="635.1" y="431.3" width="1" height="1" fill="#5a3a30"/><rect x="476.1" y="439.9" width="1" height="1" fill="#505058"/><rect x="656.3" y="390.9" width="1" height="1" fill="#6a4a3a"/><rect x="664.8" y="489.6" width="1" height="1" fill="#6a4a3a"/><rect x="517.6" y="448.0" width="1" height="1" fill="#40404a"/><rect x="581.7" y="445.3" width="1" height="1" fill="#3a3a3a"/><rect x="603.7" y="495.2" width="1" height="1" fill="#3a3a3a"/><rect x="672.0" y="386.7" width="1" height="1" fill="#705040"/><rect x="495.8" y="420.9" width="1" height="1" fill="#3a3a3a"/><rect x="555.1" y="391.1" width="1" height="1" fill="#40404a"/><rect x="604.9" y="384.7" width="1" height="1" fill="#6a4a3a"/><rect x="524.7" y="527.9" width="1" height="1" fill="#705040"/><rect x="583.2" y="449.5" width="1" height="1" fill="#705040"/><rect x="588.7" y="542.2" width="1" height="1" fill="#505058"/><rect x="563.8" y="486.1" width="1" height="1" fill="#705040"/><rect x="594.7" y="504.5" width="1" height="1" fill="#5a3a30"/><rect x="552.1" y="533.2" width="1" height="1" fill="#3a3a3a"/><rect x="569.3" y="410.1" width="1" height="1" fill="#3a3a3a"/><rect x="583.5" y="478.4" width="1" height="1" fill="#3a3a3a"/><rect x="664.9" y="450.3" width="1" height="1" fill="#705040"/><rect x="554.5" y="433.0" width="1" height="1" fill="#705040"/><rect x="531.7" y="487.8" width="1" height="1" fill="#705040"/><rect x="661.8" y="489.2" width="1" height="1" fill="#505058"/><rect x="533.8" y="385.2" width="1" height="1" fill="#40404a"/><rect x="592.3" y="484.3" width="1" height="1" fill="#3a3a3a"/><rect x="626.4" y="445.4" width="1" height="1" fill="#6a4a3a"/><rect x="625.2" y="391.0" width="1" height="1" fill="#505058"/><rect x="664.8" y="394.8" width="1" height="1" fill="#40404a"/><rect x="560.8" y="459.4" width="1" height="1" fill="#40404a"/><rect x="483.2" y="398.8" width="1" height="1" fill="#505058"/><rect x="657.7" y="406.1" width="1" height="1" fill="#40404a"/><rect x="595.9" y="401.4" width="1" height="1" fill="#705040"/><rect x="558.3" y="401.9" width="1" height="1" fill="#5a3a30"/><rect x="546.1" y="407.8" width="1" height="1" fill="#6a4a3a"/><rect x="563.5" y="489.9" width="1" height="1" fill="#3a3a3a"/><rect x="595.4" y="485.3" width="1" height="1" fill="#505058"/><rect x="558.7" y="507.5" width="1" height="1" fill="#705040"/><rect x="638.7" y="404.9" width="1" height="1" fill="#6a4a3a"/><rect x="622.3" y="421.1" width="1" height="1" fill="#5a3a30"/><rect x="575.6" y="432.4" width="1" height="1" fill="#705040"/><rect x="600.2" y="440.5" width="1" height="1" fill="#6a4a3a"/><rect x="597.2" y="499.0" width="1" height="1" fill="#505058"/><rect x="593.5" y="484.3" width="1" height="1" fill="#40404a"/><rect x="512.3" y="422.8" width="1" height="1" fill="#505058"/><rect x="659.0" y="523.6" width="1" height="1" fill="#5a3a30"/><rect x="600.9" y="384.5" width="1" height="1" fill="#6a4a3a"/><rect x="559.9" y="482.7" width="1" height="1" fill="#5a3a30"/><rect x="519.0" y="427.5" width="1" height="1" fill="#5a3a30"/><rect x="658.4" y="408.7" width="1" height="1" fill="#40404a"/><rect x="601.5" y="442.7" width="1" height="1" fill="#3a3a3a"/><rect x="545.5" y="437.1" width="1" height="1" fill="#3a3a3a"/><rect x="624.5" y="517.2" width="1" height="1" fill="#5a3a30"/><rect x="636.1" y="454.6" width="1" height="1" fill="#705040"/><rect x="643.3" y="506.0" width="1" height="1" fill="#3a3a3a"/><rect x="559.7" y="424.3" width="1" height="1" fill="#40404a"/><rect x="548.5" y="487.6" width="1" height="1" fill="#705040"/><rect x="539.7" y="470.8" width="1" height="1" fill="#505058"/><rect x="640.9" y="412.4" width="1" height="1" fill="#505058"/><rect x="548.6" y="398.5" width="1" height="1" fill="#6a4a3a"/><rect x="489.9" y="396.3" width="1" height="1" fill="#705040"/><rect x="588.7" y="513.4" width="1" height="1" fill="#3a3a3a"/><rect x="534.4" y="507.1" width="1" height="1" fill="#5a3a30"/><rect x="536.6" y="528.7" width="1" height="1" fill="#705040"/><rect x="490.5" y="431.6" width="1" height="1" fill="#505058"/><rect x="628.4" y="435.5" width="1" height="1" fill="#40404a"/><rect x="518.2" y="488.2" width="1" height="1" fill="#6a4a3a"/><rect x="548.0" y="401.8" width="1" height="1" fill="#505058"/><rect x="563.1" y="478.2" width="1" height="1" fill="#505058"/><rect x="658.5" y="453.1" width="1" height="1" fill="#6a4a3a"/><rect x="566.6" y="418.4" width="1" height="1" fill="#505058"/><rect x="654.7" y="422.7" width="1" height="1" fill="#6a4a3a"/><rect x="641.4" y="386.9" width="1" height="1" fill="#505058"/><rect x="553.9" y="445.0" width="1" height="1" fill="#40404a"/><rect x="623.2" y="441.9" width="1" height="1" fill="#3a3a3a"/><rect x="583.2" y="516.8" width="1" height="1" fill="#705040"/><g transform="rotate(0 585 445)"><ellipse cx="585" cy="445" rx="82" ry="50" fill="url(#nbg0)"/><g filter="url(#nbt)"><ellipse cx="585" cy="445" rx="82" ry="50" fill="url(#nbg1)"/></g><g filter="url(#nbt2)" opacity=".7"><ellipse cx="576.8" cy="452.5" rx="45.1" ry="31.0" fill="url(#nbg2)"/></g><g filter="url(#nbt3)" opacity=".8"><ellipse cx="585" cy="445" rx="32.800000000000004" ry="30.0" fill="url(#nbg3)"/></g><ellipse cx="585" cy="442.5" rx="13.120000000000001" ry="10.0" fill="url(#nbg3)" opacity=".9"/><ellipse cx="583.36" cy="435.0" rx="2.87" ry="3.0" fill="#fff" filter="url(#nbb3)"/><ellipse cx="577.62" cy="460.0" rx="4.1000000000000005" ry="3.75" fill="#b84868" filter="url(#nbb3)" opacity=".8"/><ellipse cx="616.16" cy="428.5" rx="2.0500000000000003" ry="3.0" fill="#f05828" filter="url(#nbb3)"/></g></svg></div><div class="sbv" style="left:308px;top:0px;width:16px;height:158px;"></div><div class="sbb" style="left:308.5px;top:0px;width:15px;height:15px"><svg style="left:-1px;top:-1px" width="15" height="15"><path d="M3.500 9.500L7.500 5.500l4 4" stroke="#4a6392" stroke-width="2.200" fill="none"/></svg></div><div class="sbb" style="left:308.5px;top:143px;width:15px;height:15px"><svg style="left:-1px;top:-1px" width="15" height="15"><path d="M3.500 5.500L7.500 9.500l4-4" stroke="#4a6392" stroke-width="2.200" fill="none"/></svg></div><div class="thv" style="left:309px;top:30px;width:14px;height:106px;"></div></div></div><div class="win" style="left:532px;top:82px;width:253px;height:324px;overflow:hidden"><div class="tb"></div><div style="left:150px;top:0px;width:93px;height:17px;border-radius:0 0 7px 7px;border:1px solid rgba(190,208,248,.55);border-top:0;background:rgba(200,215,250,.13);overflow:hidden"><div style="left:24px;top:0px;width:1px;height:17px;background:rgba(190,208,248,.5)"></div><div style="left:50px;top:0px;width:1px;height:17px;background:rgba(190,208,248,.5)"></div></div><svg style="left:150px;top:0px" width="93" height="17" opacity=".5"><rect x="6.500" y="10.500" width="12" height="3" fill="none" stroke="#c4d4f8" stroke-width="1"/><rect x="31.500" y="4.500" width="12" height="9" fill="none" stroke="#c4d4f8" stroke-width="1"/><rect x="34.500" y="7.500" width="6" height="3" fill="none" stroke="#c4d4f8" stroke-width="1"/><path d="M66 4.500h4l2.500 3 2.500-3h4l-4.500 4.700 4.700 4.800h-4.200l-2.500-3-2.500 3h-4.200l4.700-4.800z" fill="none" stroke="#c4d4f8" stroke-width="1" stroke-linejoin="round"/></svg><svg style="left:5px;top:4px" width="17" height="17" viewBox="0 0 17 17"><path d="M5 1h7.500l3.500 3.500V16.500H5z" fill="#fdfdfd" stroke="#9a9ea8" stroke-width=".7"/><path d="M12.500 1v3.500H16z" fill="#c8ccd6" stroke="#9a9ea8" stroke-width=".5"/><path d="M16 5v11.500H6" fill="none" stroke="#555" stroke-width="1"/><path d="M6.500 15.500c.5-4 3-8.500 7.500-10.500 1.200 3-1.500 8-5 10.500z" fill="#62a83a"/><path d="M8.500 11.500c1-2 3-4.200 5-5.200.3 2-1.500 4.500-3 6z" fill="#d0d648"/><path d="M6.200 16l1-3.500 2.300 1.700z" fill="#f07c1c"/><path d="M8.500 15.300l1.500-1.500 1.800.7-1.600 1.400z" fill="#2a86d0"/><rect x="0.500" y="2.500" width="11" height="3.800" rx=".8" fill="#86a032"/><rect x="0.800" y="2.600" width="10.400" height="1.600" rx=".6" fill="#a8c058"/></svg><span class="ttl" style="left:26px;top:8px;">grafik.jpg @ 33....</span><div style="left:3px;top:25px;width:248px;height:296px;background:#3f6fd8"></div><div style="left:3px;top:25px;width:247px;height:295px;overflow:hidden;background:#c0c0c0"><svg style="left:0px;top:0px" width="15" height="15" shape-rendering="crispEdges"><rect width="15" height="15" fill="#fff"/><rect x="14" width="1" height="15" fill="#000"/><rect y="14" width="15" height="1" fill="#000"/><path d="M1.5 10.5H9M10.5 1V9" stroke="#000" stroke-width="1" stroke-dasharray="1 1" fill="none"/><path d="M9.5 10.5h2M10.5 9.5v2" stroke="#000" stroke-width="1" fill="none"/></svg><svg style="left:15px;top:0px" width="231" height="15" shape-rendering="crispEdges"><rect width="231" height="15" fill="#fff"/><path d="M-16.5 11V14M-7.5 0V14M2.5 11V14M11.5 11V14M21.5 11V14M30.5 11V14M39.5 0V14M49.5 11V14M58.5 11V14M68.5 11V14M77.5 11V14M86.5 0V14M96.5 11V14M105.5 11V14M114.5 11V14M124.5 11V14M133.5 0V14M143.5 11V14M152.5 11V14M161.5 11V14M171.5 11V14M180.5 0V14M189.5 11V14M199.5 11V14M208.5 11V14M218.5 11V14M227.5 0V14" stroke="#000" stroke-width="1" fill="none"/><rect x="0" y="14" width="231" height="1" fill="#000"/><g font-family="Liberation Sans,sans-serif" font-size="10.4" fill="#000" shape-rendering="auto"><text x="-6.3" y="8.2">5</text><text x="40.7" y="8.2">0</text><text x="87.7" y="8.2">5</text><text x="134.7" y="8.2">10</text><text x="181.7" y="8.2">15</text><text x="228.7" y="8.2">20</text></g></svg><svg style="left:0px;top:15px" width="15" height="280" shape-rendering="crispEdges"><rect width="15" height="280" fill="#fff"/><path d="M11 -14.5H14M0 -5.5H14M11 4.5H14M11 14.5H14M11 23.5H14M11 33.5H14M0 42.5H14M11 52.5H14M11 61.5H14M11 71.5H14M11 80.5H14M0 90.5H14M11 99.5H14M11 109.5H14M11 119.5H14M11 128.5H14M0 138.5H14M11 147.5H14M11 157.5H14M11 166.5H14M11 176.5H14M0 185.5H14M11 195.5H14M11 204.5H14M11 214.5H14M11 224.5H14M0 233.5H14M11 243.5H14M11 252.5H14M11 262.5H14M11 271.5H14" stroke="#000" stroke-width="1" fill="none"/><rect x="14" y="0" width="1" height="280" fill="#000"/><g font-family="Liberation Sans,sans-serif" font-size="10.4" fill="#000" shape-rendering="auto"><text x="1.2" y="3.8000000000000007">1</text><text x="1.2" y="11.8">0</text><text x="1.2" y="51.8">5</text><text x="1.2" y="99.8">0</text><text x="1.2" y="147.8">5</text><text x="1.2" y="194.8">1</text><text x="1.2" y="202.8">0</text><text x="1.2" y="242.8">1</text><text x="1.2" y="250.8">5</text></g></svg><div style="left:51px;top:104px;width:159px;height:101px;"><svg style="left:0;top:0" width="159" height="101" viewBox="586 211 159 101" ><rect x="586" y="211" width="159" height="101" fill="#000"/><g fill="none" stroke-linecap="round" stroke-linejoin="round"><path d="M611.100 214.200V295.700H742.900" stroke="#ddd" stroke-width=".9"/><path d="M611.100 214.200H742.900V295.700" stroke="#555" stroke-width=".6"/><path d="M609.500 214.2h1.600M609.500 230h1.600M609.500 245.3h1.600M609.500 263h1.600M609.500 278h1.600M629.5 295.700v1.600M649.7 295.700v1.600M669.9 295.700v1.600M690.0 295.700v1.600M710.2 295.700v1.600M730.3 295.700v1.600" stroke="#ddd" stroke-width=".8"/><path d="M616.100 249.500L624 263H716.100c3 .3 4.500 5 6.700 9.200 3 6 6.500 11.500 11.400 16" stroke="#b890e0" stroke-width="1.700"/><path d="M658.100 295.700L683 241c1-2.500 2.500-4 4.500-4.100 7-.3 13 3 20.200 2.500 8-.6 13-10 20.100-10 5 0 7 4 8.400 9.200l5.400 26.900" stroke="#f0d840" stroke-width="1.600"/><path d="M683.300 291c7-4.500 14-8 20.200-12.900 5-4 6-9.500 9.200-15.100 1.500-2.600 2.800-3.900 4.200-3.900 1.500 0 2.800 2 4.200 4.700 2.800 5.500 5 10.500 8.400 15.100 2.500 3.400 5.500 6 8.700 8.100" stroke="#50d8a0" stroke-width="1.500"/><path d="M687.500 224.300c2.500 7 3.500 21 6.700 21s4-14 6.400-22.700" stroke="#ddd" stroke-width=".8"/><path d="M616 265.500h7.500" stroke="#fff" stroke-width=".9"/></g><g font-family="Liberation Sans,sans-serif" font-size="4" fill="#f0f0f0"><text x="684" y="224.300" text-anchor="end">Чувствительность</text><text x="684" y="229" text-anchor="end">космологических</text><text x="684" y="233.500" text-anchor="end">LIGO и VIRGO</text><text x="615.500" y="273">Чувствительность</text><text x="615.500" y="277.800">спутника Планк</text><text x="708.500" y="247.500" fill="#f0d840">Планковская</text><text x="708.500" y="252" fill="#f0d840">модель</text><text x="628.700" y="261" fill="#b890e0">Инфляционная модель</text><text x="673.200" y="272.500" fill="#50d8a0">Экпиротическая</text><text x="689" y="277.500" fill="#50d8a0">модель</text><text x="609" y="231.5" text-anchor="end" font-size="4.200">10⁻⁵</text><text x="609" y="246.8" text-anchor="end" font-size="4.200">10⁻¹⁰</text><text x="609" y="264.5" text-anchor="end" font-size="4.200">10⁻¹⁵</text><text x="609" y="279.5" text-anchor="end" font-size="4.200">10⁻²⁰</text><text x="629.5" y="302.300" text-anchor="middle" font-size="4.200">10⁻¹⁵</text><text x="649.7" y="302.300" text-anchor="middle" font-size="4.200">10⁻¹⁰</text><text x="669.9" y="302.300" text-anchor="middle" font-size="4.200">10⁻⁵</text><text x="690.0" y="302.300" text-anchor="middle" font-size="4.200">1</text><text x="710.2" y="302.300" text-anchor="middle" font-size="4.200">10⁵</text><text x="730.3" y="302.300" text-anchor="middle" font-size="4.200">10¹⁰</text><text x="677" y="309" text-anchor="middle" font-size="3.800">Частота гравитационных волн (Гц)</text><text transform="translate(591 255) rotate(-90)" text-anchor="middle" font-size="3.200">Плотность энергии гравитационных волн</text><text transform="translate(595.500 255) rotate(-90)" text-anchor="middle" font-size="3.200">(в единицах критической плотности)</text></g></svg></div></div></div><div class="win" style="left:426px;top:96px;width:232px;height:114px;overflow:hidden"><div class="tb"></div><div style="left:129px;top:0px;width:93px;height:17px;border-radius:0 0 7px 7px;border:1px solid rgba(190,208,248,.55);border-top:0;background:rgba(200,215,250,.13);overflow:hidden"><div style="left:24px;top:0px;width:1px;height:17px;background:rgba(190,208,248,.5)"></div><div style="left:50px;top:0px;width:1px;height:17px;background:rgba(190,208,248,.5)"></div></div><svg style="left:129px;top:0px" width="93" height="17" opacity=".5"><rect x="6.500" y="10.500" width="12" height="3" fill="none" stroke="#c4d4f8" stroke-width="1"/><rect x="31.500" y="4.500" width="12" height="9" fill="none" stroke="#c4d4f8" stroke-width="1"/><rect x="34.500" y="7.500" width="6" height="3" fill="none" stroke="#c4d4f8" stroke-width="1"/><path d="M66 4.500h4l2.500 3 2.500-3h4l-4.500 4.700 4.700 4.800h-4.200l-2.500-3-2.500 3h-4.200l4.700-4.800z" fill="none" stroke="#c4d4f8" stroke-width="1" stroke-linejoin="round"/></svg><svg style="left:5px;top:4px" width="17" height="17" viewBox="0 0 17 17"><path d="M5 1h7.500l3.500 3.500V16.500H5z" fill="#fdfdfd" stroke="#9a9ea8" stroke-width=".7"/><path d="M12.500 1v3.500H16z" fill="#c8ccd6" stroke="#9a9ea8" stroke-width=".5"/><path d="M16 5v11.500H6" fill="none" stroke="#555" stroke-width="1"/><path d="M6.500 15.500c.5-4 3-8.500 7.500-10.500 1.200 3-1.500 8-5 10.500z" fill="#62a83a"/><path d="M8.500 11.500c1-2 3-4.200 5-5.200.3 2-1.500 4.500-3 6z" fill="#d0d648"/><path d="M6.200 16l1-3.500 2.300 1.700z" fill="#f07c1c"/><path d="M8.500 15.300l1.500-1.500 1.800.7-1.600 1.400z" fill="#2a86d0"/><rect x="0.500" y="2.500" width="11" height="3.800" rx=".8" fill="#86a032"/><rect x="0.800" y="2.600" width="10.400" height="1.600" rx=".6" fill="#a8c058"/></svg><span class="ttl" style="left:26px;top:8px;">pole_shift01...</span><div style="left:3px;top:25px;width:227px;height:86px;background:#3f6fd8"></div><div style="left:3px;top:25px;width:226px;height:85px;overflow:hidden;background:#c0c0c0"><svg style="left:0px;top:0px" width="15" height="15" shape-rendering="crispEdges"><rect width="15" height="15" fill="#fff"/><rect x="14" width="1" height="15" fill="#000"/><rect y="14" width="15" height="1" fill="#000"/><path d="M1.5 10.5H9M10.5 1V9" stroke="#000" stroke-width="1" stroke-dasharray="1 1" fill="none"/><path d="M9.5 10.5h2M10.5 9.5v2" stroke="#000" stroke-width="1" fill="none"/></svg><svg style="left:15px;top:0px" width="210" height="15" shape-rendering="crispEdges"><rect width="210" height="15" fill="#fff"/><path d="M-7.5 11V14M-0.5 0V14M6.5 11V14M13.5 11V14M20.5 11V14M28.5 11V14M35.5 0V14M42.5 11V14M49.5 11V14M56.5 11V14M63.5 11V14M70.5 0V14M77.5 11V14M84.5 11V14M91.5 11V14M98.5 11V14M105.5 0V14M112.5 11V14M119.5 11V14M126.5 11V14M133.5 11V14M140.5 0V14M148.5 11V14M155.5 11V14M162.5 11V14M169.5 11V14M176.5 0V14M183.5 11V14M190.5 11V14M197.5 11V14M204.5 11V14" stroke="#000" stroke-width="1" fill="none"/><rect x="0" y="14" width="210" height="1" fill="#000"/><g font-family="Liberation Sans,sans-serif" font-size="10.4" fill="#000" shape-rendering="auto"><text x="0.7" y="8.2">5</text><text x="36.7" y="8.2">0</text><text x="71.7" y="8.2">5</text><text x="106.7" y="8.2">10</text><text x="141.7" y="8.2">15</text><text x="177.7" y="8.2">20</text></g></svg><svg style="left:0px;top:15px" width="15" height="70" shape-rendering="crispEdges"><rect width="15" height="70" fill="#fff"/><path d="M11 -11.5H14M11 -4.5H14M0 2.5H14M11 10.5H14M11 17.5H14M11 24.5H14M11 31.5H14M0 38.5H14M11 45.5H14M11 52.5H14M11 59.5H14M11 66.5H14" stroke="#000" stroke-width="1" fill="none"/><rect x="14" y="0" width="1" height="70" fill="#000"/><g font-family="Liberation Sans,sans-serif" font-size="10.4" fill="#000" shape-rendering="auto"><text x="1.2" y="11.8">0</text><text x="1.2" y="47.8">5</text></g></svg><div style="left:48px;top:17px;width:145px;height:67px;"><svg style="left:0;top:0" width="145" height="67" viewBox="476.5 138 145 67" ><rect x="477" y="138.500" width="144" height="65.5" fill="#fff" stroke="#000" stroke-width="1.200"/><g fill="none" stroke-width=".7"><path d="M485.200 139.500V197.300H542.700M560.300 139.500V197.300H617.700" stroke="#888"/><path d="M483.700 140.5h1.500M558.800 140.5h1.500M483.700 149.9h1.500M558.800 149.9h1.500M483.700 159.3h1.500M558.800 159.3h1.500M483.700 168.7h1.500M558.800 168.7h1.500M483.700 178.1h1.500M558.800 178.1h1.500M483.700 187.5h1.500M558.800 187.5h1.500M483.700 196.9h1.500M558.800 196.9h1.500M485.2 197.300v1.500M560.3 197.300v1.500M499.5 197.300v1.500M574.6 197.300v1.500M513.8 197.300v1.500M588.9 197.300v1.500M528.1 197.300v1.500M603.2 197.300v1.500M542.4 197.300v1.500M617.5 197.300v1.500" stroke="#777"/><path d="M495 187.100L502 179.300 509 169.200 515.300 162.100 523.100 155.900 530.200 152.800 534.800 149.600" stroke="#444" stroke-width=".8"/><path d="M495 187.100L516.900 163.700 530.200 157.400 541.900 147.300" stroke="#6a6af0" stroke-dasharray="1 1"/><path d="M527 152.800L530.200 157.400" stroke="#e02020" stroke-width="1.400"/><path d="M560.600 141.800L574.700 185.600 603.600 162.900" stroke="#6a6af0" stroke-dasharray="1 1"/><path d="M575.500 140V197.300" stroke="#f06060" stroke-dasharray="1 1"/><path d="M567.7 182.4 L571.6 186.3 L574.7 186.3 L577.8 187.9 L581.7 181.7 L585.6 180.9 L589.1 177.8 L592.7 178.5 L596.3 177.8 L599.7 174.6 L603.6 173.1 L607.5 167.6 L611.4 157.4 L614.5 148.8" stroke="#555" stroke-width=".8"/><path d="M567.7 179.4v6M571.6 183.3v6M574.7 183.3v6M577.8 184.9v6M581.7 178.7v6M585.6 177.9v6M589.1 174.8v6M592.7 175.5v6M596.3 174.8v6M599.7 171.6v6M603.6 170.1v6M607.5 164.6v6M611.4 154.4v6M614.5 145.8v6" stroke="#777" stroke-width=".6"/><rect x="495.300" y="142.600" width="18" height="6.700" stroke="#555" stroke-width=".5"/><rect x="583.300" y="144.200" width="18.700" height="7" stroke="#555" stroke-width=".5"/></g><g font-family="Liberation Sans,sans-serif" font-size="2.200" fill="#333"><text x="490" y="185.5">1997.15</text><text x="496" y="177.3">1997.56</text><text x="502" y="169">1998.00</text><text x="509" y="160.5">1998.52</text><text x="516" y="155">1999.08</text><text x="523" y="152">1999.50</text><text x="529" y="148.5">1999.95</text><text x="482.5" y="201.300">0.10</text><text x="496.8" y="201.300">0.14</text><text x="511.1" y="201.300">0.18</text><text x="525.4" y="201.300">0.22</text><text x="539.7" y="201.300">0.26</text><text x="557.5" y="201.300">1996</text><text x="571.8" y="201.300">1998</text><text x="586.1" y="201.300">2000</text><text x="600.4" y="201.300">2002</text><text x="614.7" y="201.300">2004</text><text x="479.500" y="150.0">0.35</text><text x="479.500" y="159.4">0.31</text><text x="479.500" y="168.8">0.27</text><text x="479.500" y="178.2">0.23</text><text x="479.500" y="187.6">0.19</text><text x="479.500" y="197.0">0.15</text><text x="553" y="151.0">-0.04</text><text x="553" y="162.4">-0.05</text><text x="553" y="173.8">-0.06</text><text x="553" y="185.2">-0.07</text><text x="553" y="196.6">-0.08</text><text x="497.500" y="145.500">- - x (as)</text><text x="497.500" y="148.300">— y (as)</text><text x="585.500" y="147.200">- - dX/dt</text><text x="585.500" y="150.200">— LOD</text><text x="587" y="203">year</text><text x="495" y="203">x</text></g></svg></div></div></div><div class="win" style="left:432px;top:475px;width:182px;height:271px;overflow:hidden"><div class="tb"></div><div style="left:79px;top:0px;width:93px;height:17px;border-radius:0 0 7px 7px;border:1px solid rgba(190,208,248,.55);border-top:0;background:rgba(200,215,250,.13);overflow:hidden"><div style="left:24px;top:0px;width:1px;height:17px;background:rgba(190,208,248,.5)"></div><div style="left:50px;top:0px;width:1px;height:17px;background:rgba(190,208,248,.5)"></div></div><svg style="left:79px;top:0px" width="93" height="17" opacity=".5"><rect x="6.500" y="10.500" width="12" height="3" fill="none" stroke="#c4d4f8" stroke-width="1"/><rect x="31.500" y="4.500" width="12" height="9" fill="none" stroke="#c4d4f8" stroke-width="1"/><rect x="34.500" y="7.500" width="6" height="3" fill="none" stroke="#c4d4f8" stroke-width="1"/><path d="M66 4.500h4l2.500 3 2.500-3h4l-4.500 4.700 4.700 4.800h-4.200l-2.500-3-2.500 3h-4.200l4.700-4.800z" fill="none" stroke="#c4d4f8" stroke-width="1" stroke-linejoin="round"/></svg><svg style="left:5px;top:4px" width="17" height="17" viewBox="0 0 17 17"><path d="M5 1h7.500l3.500 3.500V16.500H5z" fill="#fdfdfd" stroke="#9a9ea8" stroke-width=".7"/><path d="M12.500 1v3.500H16z" fill="#c8ccd6" stroke="#9a9ea8" stroke-width=".5"/><path d="M16 5v11.500H6" fill="none" stroke="#555" stroke-width="1"/><path d="M6.500 15.500c.5-4 3-8.500 7.500-10.500 1.200 3-1.500 8-5 10.500z" fill="#62a83a"/><path d="M8.500 11.500c1-2 3-4.200 5-5.200.3 2-1.500 4.500-3 6z" fill="#d0d648"/><path d="M6.200 16l1-3.500 2.300 1.700z" fill="#f07c1c"/><path d="M8.500 15.300l1.500-1.500 1.800.7-1.600 1.400z" fill="#2a86d0"/><rect x="0.500" y="2.500" width="11" height="3.800" rx=".8" fill="#86a032"/><rect x="0.800" y="2.600" width="10.400" height="1.600" rx=".6" fill="#a8c058"/></svg><span class="ttl" style="left:26px;top:8px;">imag...</span><div style="left:3px;top:25px;width:177px;height:243px;background:#3f6fd8"></div><div style="left:3px;top:25px;width:176px;height:242px;overflow:hidden;background:#c0c0c0"><svg style="left:0px;top:0px" width="15" height="15" shape-rendering="crispEdges"><rect width="15" height="15" fill="#fff"/><rect x="14" width="1" height="15" fill="#000"/><rect y="14" width="15" height="1" fill="#000"/><path d="M1.5 10.5H9M10.5 1V9" stroke="#000" stroke-width="1" stroke-dasharray="1 1" fill="none"/><path d="M9.5 10.5h2M10.5 9.5v2" stroke="#000" stroke-width="1" fill="none"/></svg><svg style="left:15px;top:0px" width="160" height="15" shape-rendering="crispEdges"><rect width="160" height="15" fill="#fff"/><path d="M-15.5 11V14M-6.5 11V14M3.5 11V14M12.5 11V14M22.5 0V14M31.5 11V14M41.5 11V14M50.5 11V14M60.5 11V14M69.5 0V14M79.5 11V14M88.5 11V14M98.5 11V14M107.5 11V14M117.5 0V14M126.5 11V14M136.5 11V14M145.5 11V14M155.5 11V14" stroke="#000" stroke-width="1" fill="none"/><rect x="0" y="14" width="160" height="1" fill="#000"/><g font-family="Liberation Sans,sans-serif" font-size="10.4" fill="#000" shape-rendering="auto"><text x="23.7" y="8.2">5</text><text x="70.7" y="8.2">10</text><text x="118.7" y="8.2">15</text></g></svg><svg style="left:0px;top:15px" width="15" height="227" shape-rendering="crispEdges"><rect width="15" height="227" fill="#fff"/><path d="M11 -13.5H14M11 -3.5H14M11 5.5H14M11 15.5H14M0 24.5H14M11 34.5H14M11 43.5H14M11 53.5H14M11 62.5H14M0 72.5H14M11 81.5H14M11 91.5H14M11 100.5H14M11 110.5H14M0 119.5H14M11 129.5H14M11 138.5H14M11 148.5H14M11 157.5H14M0 167.5H14M11 176.5H14M11 186.5H14M11 195.5H14M11 205.5H14M0 214.5H14M11 224.5H14" stroke="#000" stroke-width="1" fill="none"/><rect x="14" y="0" width="1" height="227" fill="#000"/><g font-family="Liberation Sans,sans-serif" font-size="10.4" fill="#000" shape-rendering="auto"><text x="1.2" y="33.8">0</text><text x="1.2" y="81.8">5</text><text x="1.2" y="128.8">1</text><text x="1.2" y="136.8">0</text><text x="1.2" y="176.8">1</text><text x="1.2" y="184.8">5</text><text x="1.2" y="223.8">2</text><text x="1.2" y="231.8">0</text></g></svg><div style="left:15px;top:39px;width:170px;height:163px;"><svg style="left:0;top:0" width="170" height="163" viewBox="450 539 170 163" ><rect x="450" y="539" width="170" height="163" fill="#fff"/><rect x="450" y="539" width="170" height="1.200" fill="#000"/><rect x="450" y="700.400" width="170" height="1.300" fill="#000"/><path d="M450 540.500H487.1V571.0" fill="none" stroke="#000" stroke-width="1"/><g fill="none" stroke="#222" stroke-width=".8" stroke-dasharray=".8 2.200"><path d="M498.8 573.4L509.8 589.3M509.8 589.3L522.2 599.6M576.6 584.4L558.6 599.2M576.6 584.4L591.4 573.4M499.5 621.4L518.7 616.7M499.5 621.4L482.4 622.6M573.4 621.0L561.6 617.2M573.4 621.0L596.1 624.9M515.7 659.6L529.3 631.3M515.7 659.6L535.1 658.5M561.2 656.1L550.4 632.0M561.2 656.1L575.0 662.4M522.2 599.6L561.6 617.2M558.6 599.2L518.7 616.7M518.7 616.7L550.4 632.0M561.6 617.2L529.3 631.3M522.2 599.6L539.8 580.4M539.8 580.4L558.6 582.0M509.8 589.3L502.3 610.9M529.3 631.3L539.8 612.0M550.4 632.0L539.8 612.0M518.7 616.7L561.6 617.2M573.4 621.0L570.3 633.1M511.7 649.5L507.0 637.8"/></g><g fill="none" stroke="#f02020" stroke-width=".9" stroke-dasharray="1 1.500"><path d="M529.3 596.8L539.8 591.4M539.8 591.4L546.9 595.6M519.9 610.9L518.3 614.4M524.6 626.1L522.2 622.6M556.2 623.8L558.6 620.2M560.5 610.9L561.4 613.9"/></g><circle cx="522.2" cy="599.6" r="4.200" fill="none" stroke="#aaa" stroke-width=".7" stroke-dasharray="1.500 1"/><rect x="521.2" y="598.6" width="1.800" height="1.800" fill="#111"/><circle cx="558.6" cy="599.2" r="4.200" fill="none" stroke="#aaa" stroke-width=".7" stroke-dasharray="1.500 1"/><rect x="557.6" y="598.2" width="1.800" height="1.800" fill="#111"/><circle cx="518.7" cy="616.7" r="4.200" fill="none" stroke="#aaa" stroke-width=".7" stroke-dasharray="1.500 1"/><rect x="517.7" y="615.7" width="1.800" height="1.800" fill="#111"/><circle cx="561.6" cy="617.2" r="4.200" fill="none" stroke="#aaa" stroke-width=".7" stroke-dasharray="1.500 1"/><rect x="560.6" y="616.2" width="1.800" height="1.800" fill="#111"/><circle cx="529.3" cy="631.3" r="4.200" fill="none" stroke="#aaa" stroke-width=".7" stroke-dasharray="1.500 1"/><rect x="528.3" y="630.3" width="1.800" height="1.800" fill="#111"/><circle cx="550.4" cy="632.0" r="4.200" fill="none" stroke="#aaa" stroke-width=".7" stroke-dasharray="1.500 1"/><rect x="549.4" y="631.0" width="1.800" height="1.800" fill="#111"/><ellipse cx="509.8" cy="589.3" rx="2.800" ry="2.300" fill="#1010f0"/><ellipse cx="576.6" cy="584.4" rx="2.800" ry="2.300" fill="#1010f0"/><ellipse cx="499.5" cy="621.4" rx="2.800" ry="2.300" fill="#1010f0"/><ellipse cx="573.4" cy="621.0" rx="2.800" ry="2.300" fill="#2080f0"/><ellipse cx="515.7" cy="659.6" rx="2.800" ry="2.300" fill="#1010f0"/><ellipse cx="561.2" cy="656.1" rx="2.800" ry="2.300" fill="#1010f0"/><g font-family="Liberation Sans,sans-serif" font-size="2.900" font-weight="bold" fill="#000"><text x="496.5" y="548.0" >Схема взаимодействия объектов сети и потоков данных между узлами,</text><text x="519.9" y="553.0" >включая резервные каналы связи и</text><text x="451.9" y="548.0" >— основной</text><text x="451.9" y="558.6" >- - резерв</text><text x="451.9" y="568.9" >··· контроль</text><text x="450.8" y="582.0" >Центральный сервер сбора</text><text x="450.8" y="587.4" >и обработки данных сети</text><text x="450.8" y="592.4" >(основной узел)</text><text x="450.8" y="614.4" >Региональные</text><text x="450.8" y="619.1" >узлы связи и</text><text x="450.8" y="623.8" >обмена данными</text><text x="450.8" y="628.0" >между</text><text x="450.8" y="633.1" >объектами</text><text x="450.8" y="666.9" fill="#1010f0">Узел</text><text x="450.8" y="671.8" fill="#1010f0">активен</text><text x="450.8" y="676.5" fill="#1010f0">Канал</text><text x="450.8" y="681.4" fill="#1010f0">включён</text><text x="450.8" y="686.1" fill="#1010f0">Связь</text><text x="498.8" y="672.1" >При отказе основного канала</text><text x="504.7" y="677.0" >происходит переход</text><text x="491.8" y="681.4" >на резервный маршрут передачи,</text><text x="500.0" y="686.1" >выбираемый автоматически</text><text x="562.1" y="671.1" >Периферийные объекты и их</text><text x="558.6" y="676.3" >локальные подсети подключаются</text><text x="579.7" y="680.5" >к узлам</text><text x="594.9" y="556.3" >Внешний</text><text x="593.3" y="561.6" >источник</text><text x="603.1" y="567.0" >данных</text><text x="598.9" y="573.1" >(шлюз)</text><text x="606.6" y="577.8" >и др.</text><text x="606.6" y="624.2" >Узел</text><text x="601.9" y="630.3" >приёма</text><text x="600.3" y="636.0" >данных</text><text x="605.5" y="640.2" >№ 4</text><text x="496.5" y="574.1" >У1</text><text x="587.9" y="574.5" >У2</text><text x="481.2" y="621.0" >У3</text><text x="592.6" y="626.6" >У4</text><text x="517.6" y="667.1" >У5</text><text x="569.1" y="664.1" >У6</text></g></svg></div><div class="sbh" style="left:0px;top:226px;width:175px;height:16px;"></div><div class="sbb" style="left:0px;top:226.5px;width:15px;height:15px"><svg style="left:-1px;top:-1px" width="15" height="15"><path d="M9.500 3.500L5.500 7.500l4 4" stroke="#4a6392" stroke-width="2.200" fill="none"/></svg></div><div class="sbb" style="left:160px;top:226.5px;width:15px;height:15px"><svg style="left:-1px;top:-1px" width="15" height="15"><path d="M5.500 3.500L9.500 7.500l-4 4" stroke="#4a6392" stroke-width="2.200" fill="none"/></svg></div><div class="thh" style="left:33px;top:227px;width:108px;height:14px;"></div></div></div><div class="win" style="left:172px;top:625px;width:187px;height:114px;overflow:hidden"><div class="tb"></div><div style="left:84px;top:0px;width:93px;height:17px;border-radius:0 0 7px 7px;border:1px solid rgba(190,208,248,.55);border-top:0;background:rgba(200,215,250,.13);overflow:hidden"><div style="left:24px;top:0px;width:1px;height:17px;background:rgba(190,208,248,.5)"></div><div style="left:50px;top:0px;width:1px;height:17px;background:rgba(190,208,248,.5)"></div></div><svg style="left:84px;top:0px" width="93" height="17" opacity=".5"><rect x="6.500" y="10.500" width="12" height="3" fill="none" stroke="#c4d4f8" stroke-width="1"/><rect x="31.500" y="4.500" width="12" height="9" fill="none" stroke="#c4d4f8" stroke-width="1"/><rect x="34.500" y="7.500" width="6" height="3" fill="none" stroke="#c4d4f8" stroke-width="1"/><path d="M66 4.500h4l2.500 3 2.500-3h4l-4.500 4.700 4.700 4.800h-4.200l-2.500-3-2.500 3h-4.200l4.700-4.800z" fill="none" stroke="#c4d4f8" stroke-width="1" stroke-linejoin="round"/></svg><svg style="left:5px;top:4px" width="17" height="17" viewBox="0 0 17 17"><path d="M5 1h7.500l3.500 3.500V16.500H5z" fill="#fdfdfd" stroke="#9a9ea8" stroke-width=".7"/><path d="M12.500 1v3.500H16z" fill="#c8ccd6" stroke="#9a9ea8" stroke-width=".5"/><path d="M16 5v11.500H6" fill="none" stroke="#555" stroke-width="1"/><path d="M6.500 15.500c.5-4 3-8.500 7.500-10.500 1.200 3-1.500 8-5 10.500z" fill="#62a83a"/><path d="M8.500 11.500c1-2 3-4.200 5-5.200.3 2-1.500 4.500-3 6z" fill="#d0d648"/><path d="M6.200 16l1-3.500 2.300 1.700z" fill="#f07c1c"/><path d="M8.500 15.300l1.500-1.500 1.800.7-1.600 1.400z" fill="#2a86d0"/><rect x="0.500" y="2.500" width="11" height="3.800" rx=".8" fill="#86a032"/><rect x="0.800" y="2.600" width="10.400" height="1.600" rx=".6" fill="#a8c058"/></svg><span class="ttl" style="left:26px;top:8px;">chart...</span><div style="left:3px;top:25px;width:182px;height:86px;background:#3f6fd8"></div><div style="left:3px;top:25px;width:181px;height:85px;overflow:hidden;background:#c0c0c0"><svg style="left:0px;top:0px" width="15" height="15" shape-rendering="crispEdges"><rect width="15" height="15" fill="#fff"/><rect x="14" width="1" height="15" fill="#000"/><rect y="14" width="15" height="1" fill="#000"/><path d="M1.5 10.5H9M10.5 1V9" stroke="#000" stroke-width="1" stroke-dasharray="1 1" fill="none"/><path d="M9.5 10.5h2M10.5 9.5v2" stroke="#000" stroke-width="1" fill="none"/></svg><svg style="left:15px;top:0px" width="165" height="15" shape-rendering="crispEdges"><rect width="165" height="15" fill="#fff"/><path d="M-5.5 11V14M0.5 11V14M6.5 9V14M11.5 11V14M17.5 11V14M22.5 11V14M28.5 11V14M34.5 0V14M39.5 11V14M45.5 11V14M51.5 11V14M56.5 11V14M62.5 9V14M68.5 11V14M73.5 11V14M79.5 11V14M85.5 11V14M90.5 0V14M96.5 11V14M102.5 11V14M107.5 11V14M113.5 11V14M119.5 9V14M124.5 11V14M130.5 11V14M136.5 11V14M141.5 11V14M147.5 0V14M153.5 11V14M158.5 11V14M164.5 11V14" stroke="#000" stroke-width="1" fill="none"/><rect x="0" y="14" width="165" height="1" fill="#000"/><g font-family="Liberation Sans,sans-serif" font-size="10.4" fill="#000" shape-rendering="auto"><text x="35.7" y="8.2">0</text><text x="91.7" y="8.2">2</text><text x="148.7" y="8.2">4</text></g></svg><svg style="left:0px;top:15px" width="15" height="70" shape-rendering="crispEdges"><rect width="15" height="70" fill="#fff"/><path d="M9 -9.5H14M11 -3.5H14M11 2.5H14M11 7.5H14M11 13.5H14M0 19.5H14M11 24.5H14M11 30.5H14M11 36.5H14M11 41.5H14M9 47.5H14M11 53.5H14M11 58.5H14M11 64.5H14M11 70.5H14" stroke="#000" stroke-width="1" fill="none"/><rect x="14" y="0" width="1" height="70" fill="#000"/><g font-family="Liberation Sans,sans-serif" font-size="10.4" fill="#000" shape-rendering="auto"><text x="1.2" y="28.8">0</text></g></svg><div style="left:47px;top:32px;width:102px;height:35px;"><svg style="left:0;top:0" width="102" height="35" viewBox="222 682 102 35" ><rect x="222.500" y="682.500" width="101" height="34" fill="#fff" stroke="#000" stroke-width="1"/><g fill="none" stroke-width=".7" stroke-linejoin="round"><path d="M224.4 685.6V711.9H313.4V685.6" stroke="#bbb" stroke-width=".5"/><path d="M224.4 694.3H313.4M224.4 703.1H313.4" stroke="#ddd" stroke-width=".4"/><path d="M225.3 696.9 L227.2 699.0 L229.1 700.5 L230.9 700.0 L232.8 698.8 L234.7 703.2 L236.6 703.3 L238.4 701.2 L240.3 698.5 L241.8 695.1 L243.1 693.6 L245.0 695.2 L246.9 697.5 L248.4 698.9 L249.7 700.7 L251.9 698.7 L254.4 695.4 L256.3 696.9 L258.1 696.7 L260.9 699.2 L263.8 698.1 L264.9 690.2 L265.6 690.3 L267.5 691.5 L269.4 693.3 L270.9 691.5 L272.2 692.7 L273.7 692.7 L275.0 690.2 L277.3 692.4 L279.7 693.7 L282.1 696.9 L284.4 698.0 L287.2 700.1 L290.0 699.5 L291.9 701.3 L293.8 700.7 L296.6 701.5 L299.4 700.6 L301.8 705.7 L304.1 708.9 L305.0 703.7 L305.9 701.7 L307.4 702.8 L308.8 702.4 L311.0 706.0 L313.4 709.5" stroke="#30e040"/><path d="M225.7 697.5 L227.6 698.1 L229.5 700.9 L231.3 699.4 L233.2 698.6 L235.1 703.6 L237.0 705.0 L238.8 701.6 L240.7 698.2 L242.2 695.9 L243.5 692.4 L245.4 697.8 L247.3 697.2 L248.8 700.7 L250.1 702.0 L252.3 698.1 L254.8 697.8 L256.7 698.0 L258.5 698.1 L261.3 697.9 L264.2 697.3 L265.3 691.0 L266.0 691.4 L267.9 692.3 L269.8 694.3 L271.3 693.9 L272.6 695.5 L274.1 692.3 L275.4 691.2 L277.7 693.8 L280.1 694.0 L282.5 695.9 L284.8 699.7 L287.6 700.4 L290.4 700.9 L292.3 700.6 L294.2 703.0 L297.0 700.4 L299.8 700.5 L302.2 705.6 L304.5 709.7 L305.4 704.5 L306.3 703.7 L307.8 704.4 L309.2 703.5 L311.4 707.2 L313.8 709.9" stroke="#f03060"/><path d="M225.3 697.2 L227.2 699.2 L229.1 701.7 L230.9 701.6 L232.8 699.1 L234.7 702.7 L236.6 706.9 L238.4 702.9 L240.3 698.8 L241.8 695.7 L243.1 694.4 L245.0 698.3 L246.9 699.0 L248.4 700.8 L249.7 701.1 L251.9 700.9 L254.4 696.9 L256.3 699.0 L258.1 699.4 L260.9 699.0 L263.8 699.6 L264.9 693.5 L265.6 691.5 L267.5 694.4 L269.4 693.7 L270.9 693.7 L272.2 694.5 L273.7 694.2 L275.0 691.9 L277.3 694.5 L279.7 695.3 L282.1 698.3 L284.4 701.0 L287.2 700.5 L290.0 700.9 L291.9 702.9 L293.8 702.8 L296.6 701.6 L299.4 701.5 L301.8 705.4 L304.1 709.3 L305.0 706.7 L305.9 704.6 L307.4 705.3 L308.8 704.7 L311.0 708.1 L313.4 710.5" stroke="#3038e0"/><path d="M225.0 698.1 L226.9 701.1 L228.8 702.6 L230.6 700.7 L232.5 700.9 L234.4 704.8 L236.3 706.7 L238.1 703.7 L240.0 700.1 L241.5 696.4 L242.8 695.1 L244.7 697.6 L246.6 699.5 L248.1 702.0 L249.4 703.0 L251.6 700.0 L254.1 699.4 L256.0 699.9 L257.8 699.4 L260.6 699.2 L263.5 699.7 L264.6 692.4 L265.3 692.1 L267.2 694.2 L269.1 695.8 L270.6 694.6 L271.9 696.5 L273.4 693.6 L274.7 693.1 L277.0 695.6 L279.4 695.4 L281.8 697.7 L284.1 701.2 L286.9 701.9 L289.7 701.8 L291.6 704.0 L293.5 704.3 L296.3 702.6 L299.1 702.2 L301.5 705.9 L303.8 710.8 L304.7 707.1 L305.6 704.0 L307.1 706.0 L308.5 705.7 L310.7 709.4 L313.1 711.2" stroke="#c040d0" stroke-width=".5"/><path d="M225.3 711.9v1.200M229.1 711.9v1.200M232.8 711.9v1.200M236.6 711.9v1.200M240.3 711.9v1.200M244.1 711.9v1.200M247.8 711.9v1.200M251.6 711.9v1.200M255.3 711.9v1.200M259.1 711.9v1.200M262.8 711.9v1.200M266.6 711.9v1.200M270.3 711.9v1.200M274.1 711.9v1.200M277.8 711.9v1.200M281.6 711.9v1.200M285.3 711.9v1.200M289.1 711.9v1.200M292.8 711.9v1.200M296.6 711.9v1.200M300.3 711.9v1.200M304.1 711.9v1.200M307.8 711.9v1.200M311.6 711.9v1.200" stroke="#444" stroke-width=".6"/></g><g font-family="Liberation Sans,sans-serif" font-size="1.900" fill="#555"><text x="272.2" y="685.4" text-anchor="middle">EUR / USD 2004-2006</text><text x="314.8" y="687.1">1.3600</text><text x="314.8" y="695.4">1.3000</text><text x="314.8" y="703.6">1.2400</text><text x="314.8" y="711.9">1.1800</text><text x="295.3" y="688.3">— max</text><text x="295.3" y="690.3">— avg</text><text x="295.3" y="692.4">— min</text><text x="224.6" y="714.9">01</text><text x="232.1" y="714.9">02</text><text x="239.6" y="714.9">03</text><text x="247.1" y="714.9">04</text><text x="254.6" y="714.9">05</text><text x="262.1" y="714.9">06</text><text x="269.6" y="714.9">07</text><text x="277.1" y="714.9">08</text><text x="284.6" y="714.9">09</text><text x="292.1" y="714.9">10</text><text x="299.6" y="714.9">11</text><text x="307.1" y="714.9">12</text></g></svg></div></div></div><div class="win" style="left:44px;top:75px;width:238px;height:333px;overflow:hidden"><div class="tb"></div><div style="left:135px;top:0px;width:25px;height:17px;border-radius:0 0 0 6px;border:1px solid #e4ecfc;border-top:0;background:linear-gradient(#a4bcf2 0,#86a6ec 35%,#5c86e3 50%,#3f70dc 56%,#5a8ae6 80%,#74a4f0 100%)"></div><div style="left:160px;top:0px;width:26px;height:17px;border:1px solid #e4ecfc;border-top:0;border-left-color:#7a9ce8;background:linear-gradient(#a4bcf2 0,#86a6ec 35%,#5c86e3 50%,#3f70dc 56%,#5a8ae6 80%,#74a4f0 100%)"></div><div style="left:186px;top:0px;width:42px;height:17px;border-radius:0 0 6px 0;border:1px solid #f0d0c8;border-top:0;background:linear-gradient(#eeb4a6 0,#e08c7a 35%,#d66a54 50%,#c8442c 56%,#d86a4c 80%,#e89474 100%)"></div><svg style="left:135px;top:0px" width="93" height="17"><rect x="6.500" y="9.500" width="12" height="4" fill="#fff" stroke="#2c4aa0" stroke-width="1"/><rect x="31.500" y="4.500" width="12" height="9" fill="#fff" stroke="#2c4aa0" stroke-width="1"/><rect x="34.500" y="7.500" width="6" height="3" fill="#5a84e0" stroke="#2c4aa0" stroke-width="1"/><path d="M66 4.500h4l2.500 3 2.500-3h4l-4.500 4.700 4.700 4.800h-4.200l-2.500-3-2.500 3h-4.200l4.700-4.800z" fill="#fff" stroke="#5a3028" stroke-width="1" stroke-linejoin="round"/></svg><svg style="left:5px;top:4px" width="17" height="17" viewBox="0 0 17 17"><path d="M5 1h7.500l3.500 3.500V16.500H5z" fill="#fdfdfd" stroke="#9a9ea8" stroke-width=".7"/><path d="M12.500 1v3.500H16z" fill="#c8ccd6" stroke="#9a9ea8" stroke-width=".5"/><path d="M16 5v11.500H6" fill="none" stroke="#555" stroke-width="1"/><path d="M6.500 15.500c.5-4 3-8.500 7.500-10.500 1.200 3-1.500 8-5 10.500z" fill="#62a83a"/><path d="M8.500 11.500c1-2 3-4.200 5-5.200.3 2-1.500 4.500-3 6z" fill="#d0d648"/><path d="M6.200 16l1-3.500 2.300 1.700z" fill="#f07c1c"/><path d="M8.500 15.300l1.500-1.500 1.800.7-1.600 1.400z" fill="#2a86d0"/><rect x="0.500" y="2.500" width="11" height="3.800" rx=".8" fill="#86a032"/><rect x="0.800" y="2.600" width="10.400" height="1.600" rx=".6" fill="#a8c058"/></svg><span class="ttl" style="left:26px;top:8px;">Pk.psd @ 50...</span><div style="left:3px;top:25px;width:233px;height:305px;background:#3f6fd8"></div><div style="left:3px;top:25px;width:232px;height:304px;overflow:hidden;background:#c0c0c0"><svg style="left:0px;top:0px" width="15" height="15" shape-rendering="crispEdges"><rect width="15" height="15" fill="#fff"/><rect x="14" width="1" height="15" fill="#000"/><rect y="14" width="15" height="1" fill="#000"/><path d="M1.5 10.5H9M10.5 1V9" stroke="#000" stroke-width="1" stroke-dasharray="1 1" fill="none"/><path d="M9.5 10.5h2M10.5 9.5v2" stroke="#000" stroke-width="1" fill="none"/></svg><svg style="left:15px;top:0px" width="200" height="15" shape-rendering="crispEdges"><rect width="200" height="15" fill="#fff"/><path d="M-17.5 9V14M-7.5 11V14M1.5 0V14M11.5 11V14M21.5 9V14M30.5 11V14M40.5 0V14M49.5 11V14M59.5 9V14M69.5 11V14M78.5 0V14M88.5 11V14M97.5 9V14M107.5 11V14M117.5 0V14M126.5 11V14M136.5 9V14M145.5 11V14M155.5 0V14M165.5 11V14M174.5 9V14M184.5 11V14M193.5 0V14" stroke="#000" stroke-width="1" fill="none"/><rect x="0" y="14" width="200" height="1" fill="#000"/><g font-family="Liberation Sans,sans-serif" font-size="10.4" fill="#000" shape-rendering="auto"><text x="2.7" y="8.2">0</text><text x="41.7" y="8.2">2</text><text x="79.7" y="8.2">4</text><text x="118.7" y="8.2">6</text><text x="156.7" y="8.2">8</text><text x="194.7" y="8.2">10</text></g></svg><svg style="left:0px;top:15px" width="15" height="273" shape-rendering="crispEdges"><rect width="15" height="273" fill="#fff"/><path d="M11 -18.5H14M9 -8.5H14M11 0.5H14M0 10.5H14M11 20.5H14M9 29.5H14M11 39.5H14M0 48.5H14M11 58.5H14M9 68.5H14M11 77.5H14M0 87.5H14M11 96.5H14M9 106.5H14M11 116.5H14M0 125.5H14M11 135.5H14M9 144.5H14M11 154.5H14M0 164.5H14M11 173.5H14M9 183.5H14M11 192.5H14M0 202.5H14M11 212.5H14M9 221.5H14M11 231.5H14M0 240.5H14M11 250.5H14M9 260.5H14M11 269.5H14" stroke="#000" stroke-width="1" fill="none"/><rect x="14" y="0" width="1" height="273" fill="#000"/><g font-family="Liberation Sans,sans-serif" font-size="10.4" fill="#000" shape-rendering="auto"><text x="1.2" y="19.8">0</text><text x="1.2" y="57.8">2</text><text x="1.2" y="96.8">4</text><text x="1.2" y="134.8">6</text><text x="1.2" y="173.8">8</text><text x="1.2" y="211.8">1</text><text x="1.2" y="219.8">0</text><text x="1.2" y="249.8">1</text><text x="1.2" y="257.8">2</text></g></svg><div style="left:15px;top:15px;width:200px;height:273px;overflow:hidden"><svg style="left:0;top:0" width="200" height="273" viewBox="62 115 200 273" ><defs><filter id="pkb1" x="-20%" y="-20%" width="140%" height="140%"><feGaussianBlur stdDeviation="6"/></filter><filter id="pkb2" x="-20%" y="-20%" width="140%" height="140%"><feGaussianBlur stdDeviation="2.500"/></filter><filter id="pkb3" x="-30%" y="-30%" width="160%" height="160%"><feGaussianBlur stdDeviation="1"/></filter><filter id="pkt" x="0" y="0" width="100%" height="100%" color-interpolation-filters="sRGB"><feTurbulence type="fractalNoise" baseFrequency="0.06" numOctaves="4" seed="7" result="n"/><feColorMatrix in="n" type="matrix" values="0 0 0 0 0  0 0 0 0 0  0 0 0 0 0  5 0 0 0 -2.2" result="m"/><feComposite in="SourceGraphic" in2="m" operator="in"/></filter><filter id="pkt2" x="0" y="0" width="100%" height="100%" color-interpolation-filters="sRGB"><feTurbulence type="fractalNoise" baseFrequency="0.1" numOctaves="4" seed="3" result="n"/><feColorMatrix in="n" type="matrix" values="0 0 0 0 0  0 0 0 0 0  0 0 0 0 0  0 5 0 0 -2.35" result="m"/><feComposite in="SourceGraphic" in2="m" operator="in"/></filter><filter id="pkt3" x="0" y="0" width="100%" height="100%" color-interpolation-filters="sRGB"><feTurbulence type="fractalNoise" baseFrequency="0.13" numOctaves="4" seed="21" result="n"/><feColorMatrix in="n" type="matrix" values="0 0 0 0 0  0 0 0 0 0  0 0 0 0 0  0 0 6 0 -2.9" result="m"/><feComposite in="SourceGraphic" in2="m" operator="in"/></filter><radialGradient id="pkg1"><stop offset="0" stop-color="#b0a468"/><stop offset=".35" stop-color="#8a7838"/><stop offset=".7" stop-color="#5a4c20" stop-opacity=".8"/><stop offset="1" stop-color="#3a3010" stop-opacity="0"/></radialGradient><radialGradient id="pkg0"><stop offset="0" stop-color="#4a4020" stop-opacity=".7"/><stop offset=".6" stop-color="#2a2410" stop-opacity=".4"/><stop offset="1" stop-color="#000" stop-opacity="0"/></radialGradient><radialGradient id="pkg2"><stop offset="0" stop-color="#58a890"/><stop offset=".6" stop-color="#2c7a66" stop-opacity=".8"/><stop offset="1" stop-color="#1a5a4a" stop-opacity="0"/></radialGradient><radialGradient id="pkg3"><stop offset="0" stop-color="#fff"/><stop offset=".5" stop-color="#e8ece0" stop-opacity=".8"/><stop offset="1" stop-color="#c0c8b0" stop-opacity="0"/></radialGradient><linearGradient id="pkleg" x1="0" x2="1"><stop offset="0" stop-color="#222"/><stop offset=".5" stop-color="#777"/><stop offset="1" stop-color="#222"/></linearGradient><linearGradient id="pkholo" x1="0" y1="0" x2="0" y2="1"><stop offset="0" stop-color="#12382c"/><stop offset=".8" stop-color="#0f3a2c"/><stop offset="1" stop-color="#1f6a50"/></linearGradient><pattern id="pkkeys" width="6" height="5" patternUnits="userSpaceOnUse" patternTransform="rotate(-7) skewX(38)"><rect width="6" height="5" fill="#222"/><rect x=".6" y=".6" width="4.800" height="3.800" fill="#3c3c3a"/></pattern><pattern id="pkgrid" width="6.500" height="5" patternUnits="userSpaceOnUse" patternTransform="rotate(-7) skewX(38)"><rect width="6.500" height="5" fill="#04100c"/><path d="M0 0H6.500M0 0V5" stroke="#1c8a68" stroke-width=".7"/></pattern><pattern id="pkgrid2" width="6" height="9" patternUnits="userSpaceOnUse" patternTransform="skewY(44)"><path d="M0 0H6M0 0V9" stroke="#167a5a" stroke-width=".6" fill="none"/></pattern></defs><rect x="62" y="114" width="200" height="275" fill="#000"/><g transform="rotate(-33 134 346)"><ellipse cx="134" cy="346" rx="108" ry="31" fill="url(#pkg0)"/><g filter="url(#pkt)"><ellipse cx="134" cy="346" rx="108" ry="31" fill="url(#pkg1)"/></g><g filter="url(#pkt2)" opacity=".7"><ellipse cx="123.2" cy="350.65" rx="59.400000000000006" ry="19.22" fill="url(#pkg2)"/></g><g filter="url(#pkt3)" opacity=".8"><ellipse cx="134" cy="346" rx="43.2" ry="18.599999999999998" fill="url(#pkg3)"/></g><ellipse cx="134" cy="344.45" rx="17.28" ry="6.2" fill="url(#pkg3)" opacity=".9"/><ellipse cx="131.84" cy="339.8" rx="3.7800000000000002" ry="1.8599999999999999" fill="#fff" filter="url(#pkb3)"/><ellipse cx="124.28" cy="355.3" rx="5.4" ry="2.3249999999999997" fill="#b84868" filter="url(#pkb3)" opacity=".8"/><ellipse cx="175.04" cy="335.77" rx="2.7" ry="1.8599999999999999" fill="#f05828" filter="url(#pkb3)"/></g><rect x="186.6" y="362.7" width="1" height="1" fill="#505058"/><rect x="250.5" y="362.5" width="1" height="1" fill="#705040"/><rect x="67.8" y="335.6" width="1" height="1" fill="#40404a"/><rect x="191.8" y="378.3" width="1" height="1" fill="#5a3a30"/><rect x="136.4" y="375.1" width="1" height="1" fill="#3a3a3a"/><rect x="170.8" y="346.2" width="1" height="1" fill="#5a3a30"/><rect x="208.2" y="330.0" width="1" height="1" fill="#40404a"/><rect x="245.3" y="365.0" width="1" height="1" fill="#40404a"/><rect x="214.4" y="297.0" width="1" height="1" fill="#705040"/><rect x="185.5" y="302.4" width="1" height="1" fill="#5a3a30"/><rect x="256.5" y="290.5" width="1" height="1" fill="#40404a"/><rect x="254.0" y="306.3" width="1" height="1" fill="#40404a"/><rect x="119.9" y="384.2" width="1" height="1" fill="#705040"/><rect x="237.2" y="351.3" width="1" height="1" fill="#40404a"/><rect x="250.2" y="357.7" width="1" height="1" fill="#3a3a3a"/><rect x="121.8" y="325.4" width="1" height="1" fill="#40404a"/><rect x="249.2" y="315.9" width="1" height="1" fill="#6a4a3a"/><rect x="122.3" y="349.1" width="1" height="1" fill="#5a3a30"/><rect x="181.2" y="359.4" width="1" height="1" fill="#5a3a30"/><rect x="124.0" y="370.2" width="1" height="1" fill="#3a3a3a"/><rect x="201.3" y="308.1" width="1" height="1" fill="#3a3a3a"/><rect x="202.9" y="295.6" width="1" height="1" fill="#5a3a30"/><rect x="251.8" y="325.0" width="1" height="1" fill="#3a3a3a"/><rect x="65.6" y="367.2" width="1" height="1" fill="#6a4a3a"/><rect x="137.3" y="372.4" width="1" height="1" fill="#3a3a3a"/><rect x="71.3" y="307.7" width="1" height="1" fill="#40404a"/><rect x="85.8" y="314.1" width="1" height="1" fill="#3a3a3a"/><rect x="130.9" y="324.8" width="1" height="1" fill="#705040"/><rect x="112.2" y="335.4" width="1" height="1" fill="#705040"/><rect x="211.7" y="368.1" width="1" height="1" fill="#6a4a3a"/><rect x="69.3" y="382.7" width="1" height="1" fill="#5a3a30"/><rect x="103.7" y="340.3" width="1" height="1" fill="#6a4a3a"/><rect x="245.6" y="323.3" width="1" height="1" fill="#505058"/><rect x="171.0" y="320.6" width="1" height="1" fill="#6a4a3a"/><rect x="123.2" y="368.3" width="1" height="1" fill="#505058"/><rect x="91.8" y="357.5" width="1" height="1" fill="#3a3a3a"/><rect x="94.3" y="294.8" width="1" height="1" fill="#705040"/><rect x="168.7" y="329.8" width="1" height="1" fill="#40404a"/><rect x="210.1" y="323.7" width="1" height="1" fill="#6a4a3a"/><rect x="153.1" y="331.3" width="1" height="1" fill="#5a3a30"/><rect x="257.8" y="352.6" width="1" height="1" fill="#3a3a3a"/><rect x="128.8" y="310.3" width="1" height="1" fill="#505058"/><rect x="174.8" y="303.0" width="1" height="1" fill="#3a3a3a"/><rect x="83.3" y="332.6" width="1" height="1" fill="#40404a"/><rect x="73.8" y="331.2" width="1" height="1" fill="#40404a"/><rect x="152.6" y="387.9" width="1" height="1" fill="#40404a"/><rect x="257.2" y="334.4" width="1" height="1" fill="#3a3a3a"/><rect x="199.8" y="321.1" width="1" height="1" fill="#6a4a3a"/><rect x="120.2" y="329.6" width="1" height="1" fill="#40404a"/><rect x="84.5" y="370.6" width="1" height="1" fill="#705040"/><rect x="254.0" y="351.4" width="1" height="1" fill="#3a3a3a"/><rect x="235.6" y="307.7" width="1" height="1" fill="#3a3a3a"/><rect x="116.5" y="366.6" width="1" height="1" fill="#705040"/><rect x="134.3" y="367.0" width="1" height="1" fill="#6a4a3a"/><rect x="200.9" y="355.1" width="1" height="1" fill="#6a4a3a"/><rect x="134.7" y="359.0" width="1" height="1" fill="#6a4a3a"/><rect x="229.0" y="316.0" width="1" height="1" fill="#505058"/><rect x="205.2" y="383.8" width="1" height="1" fill="#6a4a3a"/><rect x="191.9" y="346.9" width="1" height="1" fill="#5a3a30"/><rect x="156.9" y="365.8" width="1" height="1" fill="#6a4a3a"/><rect x="196.3" y="335.4" width="1" height="1" fill="#705040"/><rect x="191.5" y="368.2" width="1" height="1" fill="#6a4a3a"/><rect x="116.8" y="323.9" width="1" height="1" fill="#3a3a3a"/><rect x="132.0" y="372.6" width="1" height="1" fill="#505058"/><rect x="152.0" y="325.7" width="1" height="1" fill="#6a4a3a"/><rect x="165.6" y="341.9" width="1" height="1" fill="#40404a"/><rect x="101.7" y="325.5" width="1" height="1" fill="#3a3a3a"/><rect x="118.6" y="297.7" width="1" height="1" fill="#505058"/><rect x="208.1" y="306.8" width="1" height="1" fill="#705040"/><rect x="165.3" y="381.8" width="1" height="1" fill="#6a4a3a"/><rect x="186.7" y="365.9" width="1" height="1" fill="#505058"/><rect x="116.1" y="387.6" width="1" height="1" fill="#40404a"/><rect x="94.0" y="333.2" width="1" height="1" fill="#505058"/><rect x="98.1" y="364.4" width="1" height="1" fill="#40404a"/><rect x="188.2" y="294.1" width="1" height="1" fill="#3a3a3a"/><rect x="258.0" y="306.2" width="1" height="1" fill="#40404a"/><rect x="84.2" y="384.9" width="1" height="1" fill="#3a3a3a"/><rect x="100.7" y="293.5" width="1" height="1" fill="#3a3a3a"/><rect x="132.2" y="354.9" width="1" height="1" fill="#5a3a30"/><rect x="180.0" y="313.3" width="1" height="1" fill="#6a4a3a"/><rect x="62.1" y="329.7" width="1" height="1" fill="#6a4a3a"/><rect x="233.2" y="374.9" width="1" height="1" fill="#505058"/><rect x="228.3" y="326.6" width="1" height="1" fill="#5a3a30"/><rect x="172.0" y="319.5" width="1" height="1" fill="#6a4a3a"/><rect x="171.0" y="323.3" width="1" height="1" fill="#705040"/><rect x="120.6" y="324.5" width="1" height="1" fill="#40404a"/><rect x="145.8" y="369.7" width="1" height="1" fill="#505058"/><rect x="169.7" y="335.8" width="1" height="1" fill="#40404a"/><rect x="181.2" y="345.3" width="1" height="1" fill="#40404a"/><rect x="255.6" y="349.6" width="1" height="1" fill="#6a4a3a"/><rect x="226.2" y="354.8" width="1" height="1" fill="#3a3a3a"/><rect x="83.6" y="345.4" width="1" height="1" fill="#705040"/><rect x="169.9" y="321.9" width="1" height="1" fill="#705040"/><rect x="137.2" y="332.3" width="1" height="1" fill="#40404a"/><rect x="160.7" y="337.0" width="1" height="1" fill="#505058"/><rect x="138.0" y="384.2" width="1" height="1" fill="#40404a"/><rect x="181.2" y="315.5" width="1" height="1" fill="#6a4a3a"/><rect x="161.3" y="330.7" width="1" height="1" fill="#6a4a3a"/><rect x="251.0" y="320.1" width="1" height="1" fill="#6a4a3a"/><rect x="90.7" y="292.3" width="1" height="1" fill="#505058"/><rect x="186.3" y="333.5" width="1" height="1" fill="#6a4a3a"/><rect x="70.0" y="303.4" width="1" height="1" fill="#3a3a3a"/><rect x="64.6" y="342.2" width="1" height="1" fill="#6a4a3a"/><rect x="110.7" y="336.5" width="1" height="1" fill="#5a3a30"/><rect x="111.1" y="316.2" width="1" height="1" fill="#40404a"/><rect x="206.3" y="318.0" width="1" height="1" fill="#3a3a3a"/><rect x="183.6" y="336.5" width="1" height="1" fill="#505058"/><rect x="234.7" y="376.3" width="1" height="1" fill="#5a3a30"/><rect x="65.2" y="302.4" width="1" height="1" fill="#6a4a3a"/><rect x="168.7" y="322.9" width="1" height="1" fill="#6a4a3a"/><rect x="208.3" y="292.6" width="1" height="1" fill="#6a4a3a"/><rect x="134.2" y="363.0" width="1" height="1" fill="#705040"/><rect x="88.5" y="290.3" width="1" height="1" fill="#705040"/><rect x="153.1" y="379.8" width="1" height="1" fill="#505058"/><rect x="171.1" y="291.4" width="1" height="1" fill="#3a3a3a"/><rect x="181.0" y="357.5" width="1" height="1" fill="#505058"/><rect x="191.8" y="374.2" width="1" height="1" fill="#3a3a3a"/><rect x="157.1" y="356.9" width="1" height="1" fill="#505058"/><rect x="101.3" y="319.1" width="1" height="1" fill="#5a3a30"/><rect x="122.7" y="290.3" width="1" height="1" fill="#3a3a3a"/><rect x="178.4" y="353.5" width="1" height="1" fill="#3a3a3a"/><rect x="244.1" y="304.0" width="1" height="1" fill="#3a3a3a"/><rect x="201.0" y="377.1" width="1" height="1" fill="#6a4a3a"/><rect x="169.6" y="331.7" width="1" height="1" fill="#705040"/><rect x="224.4" y="296.7" width="1" height="1" fill="#40404a"/><rect x="115.4" y="298.3" width="1" height="1" fill="#5a3a30"/><rect x="194.7" y="292.5" width="1" height="1" fill="#505058"/><rect x="147.9" y="296.7" width="1" height="1" fill="#3a3a3a"/><rect x="202.2" y="294.8" width="1" height="1" fill="#5a3a30"/><rect x="105.8" y="353.3" width="1" height="1" fill="#5a3a30"/><rect x="204.5" y="303.2" width="1" height="1" fill="#6a4a3a"/><rect x="203.2" y="332.9" width="1" height="1" fill="#40404a"/><rect x="184.1" y="330.6" width="1" height="1" fill="#40404a"/><rect x="75.4" y="310.9" width="1" height="1" fill="#705040"/><rect x="83.6" y="327.2" width="1" height="1" fill="#5a3a30"/><rect x="118.0" y="346.0" width="1" height="1" fill="#5a3a30"/><rect x="210.5" y="376.1" width="1" height="1" fill="#40404a"/><rect x="64.0" y="299.0" width="1" height="1" fill="#505058"/><rect x="182.0" y="338.0" width="1" height="1" fill="#505058"/><rect x="136.8" y="295.5" width="1" height="1" fill="#505058"/><path d="M70.500 158L101 249l1.300 58L72 277z" fill="#06100c"/><path d="M70.500 158L101 249l1.300 58L72 277z" fill="url(#pkgrid2)" opacity=".9"/><path d="M66 162l30-4 140-20 22-2 1 72-24 6-134 22-28 2z" fill="#1c1a1a"/><polygon points="96.9,151.8 231.3,139.9 235.3,213.6 101.8,233.5" fill="#050505"/><polygon points="96.9,151.8 231.3,139.9 231.5,143.5 97.2,156.0" fill="#f4f4f0"/><polygon points="231.3,140.0 235.0,139.7 238.5,213.0 235.3,213.6" fill="#b8b070"/><polygon points="97.0,156.0 100.5,155.7 105.0,233.0 101.8,233.5" fill="#a89860" opacity=".8"/><polygon points="235.5,140.0 255.0,138.5 255.5,156.0 236.2,158.0" fill="#1a1a1a" stroke="#ccc" stroke-width=".8"/><path d="M238 152l5-8 4 6 3-7 4 8" stroke="#c8d060" stroke-width=".8" fill="none"/><path d="M238 150l6-2 5 3 5-4" stroke="#50c0a0" stroke-width=".6" fill="none"/><polygon points="236.5,160.0 255.5,158.0 256.0,198.0 237.5,201.0" fill="#d8d8dc" stroke="#999" stroke-width=".6"/><path d="M238 164h16M238 168h16M238 172h16M238 176h16M238 181h16M238 186h16M238 192h16" stroke="#888" stroke-width="1.200" opacity=".7"/><rect x="241" y="183" width="14" height="6" fill="#334"/><polygon points="237.5,203.0 256.0,200.0 256.0,211.0 238.0,214.0" fill="#777"/><rect x="239" y="204" width="8" height="7" fill="#c8a030" opacity=".9"/><rect x="247" y="203" width="7" height="7" fill="#a04878" opacity=".8"/><rect x="243" y="206" width="6" height="4" fill="#3858b8" opacity=".8"/><polygon points="69.5,161.0 96.0,158.0 97.0,189.5 71.5,191.0" fill="#c8c8d4" stroke="#888" stroke-width=".6"/><path d="M72 164l22-2M72 168l22-2M72 172l22-2M73 180l22-2M73 185l22-2" stroke="#f4f4f8" stroke-width="1.600"/><path d="M74 176l21-2" stroke="#223" stroke-width="1.800"/><polygon points="72.0,196.0 97.0,194.0 99.0,232.0 74.0,236.0" fill="#2a2a2a" opacity=".9"/><path d="M121 158.500l5.500 77.500 108-16" stroke="#bbb" stroke-width=".7" fill="none"/><polygon points="123.7,155.8 233.3,143.9 237.3,231.5 128.7,245.5" fill="url(#pkholo)" opacity=".86"/><polygon points="123.7,155.8 233.3,143.9 237.3,231.5 128.7,245.5" fill="none" stroke="#1f7a5c" stroke-width="1.500" opacity=".7" filter="url(#pkb3)"/><path d="M64 209l64-4.500M233 190l29-3" stroke="#2fae88" stroke-width="5" filter="url(#pkb2)" opacity=".9"/><path d="M64 209l64-4.500M233 190l29-3" stroke="#5fe0b8" stroke-width="1.200" filter="url(#pkb3)" opacity=".8"/><path d="M143.700 161.800L169 218" stroke="#1838c8" stroke-width="1" fill="none"/><path d="M169 218L213.400 181.700" stroke="#2848c0" stroke-width=".9" fill="none"/><path d="M168 150V238" stroke="#c02828" stroke-width=".8" stroke-dasharray="1.200 1.200" fill="none"/><path d="M125.700 183.700l8 8 75.700-9c4-.5 5 0 7 3.500l11 11.500" stroke="#a8a8e0" stroke-width="1.300" fill="none"/><path d="M166.600 211.600C175 195 179 172 186 168c5-2.500 11-.5 17-1.500 7-1 12-9 18-9.800 7-1 8 13 11.300 25" stroke="#e8e050" stroke-width="1.700" fill="none"/><path d="M185.500 205.600c8-5 13-9 18-15 4-5 6-10.500 8.500-10.500 3 0 5 6 8 9.500 3 3.500 6 5.500 9.300 7.100" stroke="#58e0b0" stroke-width="1.400" fill="none"/><path d="M185.500 156.800c2 5 4 14.500 7 15s3-10 4-16" stroke="#c8c8c8" stroke-width=".8" fill="none"/><g font-family="Liberation Sans,sans-serif" fill="#eee"><text x="155" y="160" font-size="2.700" transform="rotate(-5 155 160)">Чувствительность</text><text x="150" y="163.500" font-size="2.700" transform="rotate(-5 150 163.500)">космологических</text><text x="162" y="165.800" font-size="2.700" transform="rotate(-5 162 165.800)">LIGO и VIRGO</text><text x="129" y="200.500" font-size="2.700" transform="rotate(-5 129 200.500)">Чувствительность</text><text x="129" y="204" font-size="2.700" transform="rotate(-5 129 204)">спутника «Планк»</text><text x="203" y="173" font-size="2.700" fill="#e8e050" transform="rotate(-6 203 173)">Планковская</text><text x="205" y="176.500" font-size="2.700" fill="#e8e050" transform="rotate(-6 205 176.500)">модель</text><text x="178" y="194.500" font-size="2.700" fill="#58e0b0" transform="rotate(-6 178 194.500)">Экпиротическая</text><text x="190" y="197" font-size="2.700" fill="#58e0b0" transform="rotate(-6 190 197)">модель</text><text x="138" y="190.800" font-size="2.700" fill="#a8a8e0" transform="rotate(-6 138 190.800)">Инфляционная модель</text><text x="112" y="171.500" font-size="3.200" transform="rotate(-6 112 171.500)">10⁻⁵</text><text x="112" y="185" font-size="3.200" transform="rotate(-6 112 185)">10⁻¹⁰</text><text x="113" y="198" font-size="3.200" transform="rotate(-6 113 198)">10⁻¹⁵</text><text x="114" y="210" font-size="3.200" transform="rotate(-6 114 210)">10⁻²⁰</text><text x="134" y="224" font-size="3.200" transform="rotate(-7 134 224)">10⁻¹⁵</text><text x="152" y="221.500" font-size="3.200" transform="rotate(-7 152 221.500)">10⁻¹⁰</text><text x="189" y="215.500" font-size="3.200" transform="rotate(-7 189 215.500)">1</text><text x="203" y="213" font-size="3.200" transform="rotate(-7 203 213)">10⁵</text><text x="219" y="210.500" font-size="3.200" transform="rotate(-7 219 210.500)">10¹⁰</text><text x="156" y="228" font-size="2.600" transform="rotate(-7 156 228)">Частота гравитационных волн (Гц)</text><text x="108" y="222" font-size="2.600" transform="rotate(-87 108 222)">Плотность энергии гравитационных волн</text></g><polygon points="100.0,247.0 154.0,241.0 201.0,235.0 247.0,227.0 262.0,241.0 262.0,266.0 226.5,270.0 176.0,277.0 176.0,282.0 103.0,292.0" fill="#1e1e1e"/><polygon points="102.3,248.7 153.8,242.0 171.7,268.1 115.7,274.9" fill="url(#pkkeys)" stroke="#e8e8e8" stroke-width="1"/><polygon points="153.8,242.0 200.8,235.7 223.2,263.7 174.0,270.4" fill="url(#pkgrid)"/><polygon points="200.8,235.7 246.7,227.8 262.0,242.4 262.0,252.5 222.1,259.2" fill="url(#pkkeys)" stroke="#e8e8e8" stroke-width="1"/><polygon points="174.0,271.0 224.3,264.3 226.6,268.1 176.2,276.0" fill="#8a8494"/><polygon points="102.0,287.0 175.0,279.5 175.0,284.0 102.5,293.5" fill="#b4b4ac"/><polygon points="228.0,270.0 262.0,265.0 262.0,268.0 228.0,273.5" fill="#b4b4ac"/><polygon points="151.0,277.0 175.0,274.5 175.0,279.5 152.0,282.0" fill="#333"/><polygon points="128.7,238.0 237.0,224.0 237.3,231.5 128.7,245.5" fill="#2a8a68" opacity=".55" filter="url(#pkb3)"/><path d="M185 243v8" stroke="#2a9a74" stroke-width="1.600" opacity=".9"/><rect x="103.400" y="292" width="4.600" height="96" fill="url(#pkleg)"/><rect x="167.200" y="285" width="4.500" height="47" fill="url(#pkleg)" opacity=".55"/></svg></div><div class="sbv" style="left:215px;top:0px;width:16px;height:288px;"></div><div class="sbb" style="left:215.5px;top:0px;width:15px;height:15px"><svg style="left:-1px;top:-1px" width="15" height="15"><path d="M3.500 9.500L7.500 5.500l4 4" stroke="#4a6392" stroke-width="2.200" fill="none"/></svg></div><div class="sbb" style="left:215.5px;top:273px;width:15px;height:15px"><svg style="left:-1px;top:-1px" width="15" height="15"><path d="M3.500 5.500L7.500 9.500l4-4" stroke="#4a6392" stroke-width="2.200" fill="none"/></svg></div><div class="thv" style="left:216px;top:15px;width:14px;height:237px;"></div><div class="sbh" style="left:0px;top:288px;width:215px;height:16px;"></div><div class="sbb" style="left:0px;top:288.5px;width:15px;height:15px"><svg style="left:-1px;top:-1px" width="15" height="15"><path d="M9.500 3.500L5.500 7.500l4 4" stroke="#4a6392" stroke-width="2.200" fill="none"/></svg></div><div class="sbb" style="left:200px;top:288.5px;width:15px;height:15px"><svg style="left:-1px;top:-1px" width="15" height="15"><path d="M5.500 3.500L9.500 7.500l-4 4" stroke="#4a6392" stroke-width="2.200" fill="none"/></svg></div><div class="thh" style="left:15px;top:289px;width:123px;height:14px;"></div><div style="left:215px;top:288px;width:16px;height:16px;background:#ececec"></div><svg style="left:215px;top:288px" width="16" height="16"><path d="M12 14h2v-2h-2zM8 14h2v-2h-2zM12 10h2v-2h-2zM4 14h2v-2h-2zM12 6h2v-2h-2zM8 10h2v-2h-2z" fill="#cfd6e6"/></svg></div></div><div style="left:3px;top:82px;width:63px;height:441px;background:#ececec;border:3px solid #699bf0;border-top:0;outline:1px solid #3a6ad6;outline-offset:-1px;overflow:hidden"><div style="left:-3px;top:0px;width:63px;height:16px;background:linear-gradient(#a9bff2 0,#9db6f0 2px,#6f93e6 6px,#4c78dd 9px,#5b8ae4 12px,#7fb0f3 16px);border:1px solid #4f7cdc;border-bottom:0"></div><div style="left:0px;top:16px;width:57px;height:24px;background:#fff;border-bottom:1px solid #9a9a9a"></div><svg style="left:7px;top:15px" width="52" height="26" viewBox="0 0 52 26"><defs><linearGradient id="fg" x1="0" y1="1" x2="1" y2="0"><stop offset="0" stop-color="#b4b4b4"/><stop offset=".5" stop-color="#8c8c8c"/><stop offset="1" stop-color="#6e6e6e"/></linearGradient><filter id="fgb"><feGaussianBlur stdDeviation=".5"/></filter></defs><g filter="url(#fgb)"><path d="M17 21c0-7 8-16 20-19 4-1 9-1.500 13-1-1 2-2 3-4 4 1 0 2 .5 3 .5-2 3-5 5-8 7l2 .5c-3 3-7 5-11 6.500l1 1c-4 1.500-8 2.500-11 2.500-2 0-4-.5-5-2z" fill="url(#fg)"/><path d="M2 20.500c4-1.500 9-1.500 13-.3l3 1.300c-5 .5-10-.5-16-.3z" fill="#a0a0a0"/><path d="M16 22c7-8 17-15 32-20M24 15l-1-6M29 12l0-6M35 9l1-5M22 19l6 2M28 15l7 2M34 11l7 1" stroke="#5e5e5e" stroke-width=".7" fill="none" opacity=".75"/><path d="M19 23c-1 1-3 2-5 1.500M22 23.500c-.5 1.200-2 2-3.500 2" stroke="#999" stroke-width="1" fill="none"/></g></svg><svg style="left:-3px;top:0" width="63" height="441"><defs><linearGradient id="gm" x1="0" x2="1"><stop offset="0" stop-color="#fff"/><stop offset="1" stop-color="#000"/></linearGradient><radialGradient id="gd" cx=".4" cy=".35" r=".7"><stop offset="0" stop-color="#fff"/><stop offset="1" stop-color="#888"/></radialGradient><radialGradient id="gk" cx=".35" cy=".3" r=".7"><stop offset="0" stop-color="#999"/><stop offset=".5" stop-color="#222"/><stop offset="1" stop-color="#000"/></radialGradient><linearGradient id="gl" x1="0" y1="0" x2="1" y2="1"><stop offset="0" stop-color="#fff"/><stop offset="1" stop-color="#aaa"/></linearGradient></defs><g transform="translate(-3,-82)" fill="none" stroke-linecap="round" stroke-linejoin="round"><rect x="13.500" y="129.500" width="14" height="13" stroke="#222" stroke-width="1.200" stroke-dasharray="3 2"/><path d="M32 145v-3.500l-3.500 3.500z" fill="#000"/><path d="M38.500 127.500v11l7.500-4z" fill="#111" stroke="#111" stroke-width=".8"/><path d="M45.500 139.500h10M50.500 134.500v10M45.500 139.500l2-1.500v3zM55.500 139.500l-2-1.500v3zM50.500 134.500l-1.500 2h3zM50.500 144.500l-1.500-2h3z" stroke="#111" stroke-width="1" fill="#111"/><path d="M15 160c-3-3 0-8 7-8.500 6-.5 9 3 6 6.500-3 3-9 4-13 2zM17 160.500c-2 1.500-.5 4 1 3.500 1.500-1-.5-3.500-2-2M17.500 164l-2 3.500" stroke="#222" stroke-width="1.200"/><path d="M32 168v-3.500l-3.500 3.500z" fill="#000"/><path d="M45 155.500l9 9" stroke="#222" stroke-width="1.800"/><path d="M42.500 148.500v10M37.500 153.500h10M39 150l7 7M46 150l-7 7" stroke="#222" stroke-width=".9"/><path d="M18.500 172v17.500h11M13.500 177.500h13.500v11M17 190l11-13" stroke="#111" stroke-width="1.500" stroke-linecap="butt"/><path d="M42 188.500l10-9 5.500-5.500-3 7.500-8 5zM50 178l4 4" stroke="#222" stroke-width="1.100" fill="#999"/><path d="M60 191v-3.500l-3.500 3.500z" fill="#000"/><g transform="rotate(-42 20.800 207)"><rect x="10.500" y="203.500" width="20.500" height="7" rx="3.400" fill="#bbb" stroke="#888" stroke-width="1"/><rect x="17" y="203.500" width="7.500" height="7" fill="#a8a8a8" stroke="#888" stroke-width=".6"/><path d="M19 205.500h.1M21 205.500h.1M23 205.500h.1M19 208.500h.1M21 208.500h.1M23 208.500h.1" stroke="#eee" stroke-width="1"/></g><path d="M32 215v-3.500l-3.500 3.500z" fill="#000"/><path d="M40 214l2.200-5.200 9.500-9.800c1-1 3 .8 2.200 2l-9.200 10.200zM42.200 208.800l2.500 2.400M49.800 201l2.400 2.400" stroke="#222" stroke-width="1.100" fill="#f2f2f2"/><path d="M40 214l1-2.200 1.200 1.200z" fill="#111" stroke="#111" stroke-width=".6"/><path d="M58.5 215v-3.500l-3.500 3.500z" fill="#000"/><circle cx="20.500" cy="224" r="3" fill="url(#gk)" stroke="#222" stroke-width=".8"/><path d="M19.300 227v4.500h2.400v-4.500" stroke="#222" stroke-width="1" fill="#777"/><path d="M13.500 231.500h14.500v4.500h-14.500zM14 236v-1.500h13.500M17.500 232.500h6l-3 3z" stroke="#222" stroke-width="1.100" fill="#eee"/><path d="M17.800 232.500h5.400l-2.700 2.800z" fill="#111"/><path d="M32 237v-3.500l-3.500 3.500z" fill="#000"/><path d="M40.500 234.500c3 .5 5.500-1 7-3.500l8-10-9.500 8.500c-2 1.800-3 3.800-5.500 5z" stroke="#222" stroke-width="1" fill="#999"/><path d="M42.500 226c2-3.500 6-4.500 9-2.500M42.500 226l.3-2.800M42.500 226l2.700-.3" stroke="#222" stroke-width="1.100"/><path d="M54.500 226c1.500 3 1 6.500-2.500 9" stroke="#222" stroke-width="1" stroke-dasharray="1 1.500"/><path d="M58.5 237v-3.500l-3.500 3.500z" fill="#000"/><path d="M13 253l8.500-7h8l-8.500 7zM13 253v3h8v-3M21 256l8.500-7v-3" stroke="#222" stroke-width="1.100" fill="#f4f4f4"/><path d="M32 259v-3.500l-3.500 3.500z" fill="#000"/><rect x="35.500" y="241.500" width="24.500" height="20" rx="3" fill="#8eb5f0" stroke="#5a78d8" stroke-width="1.200"/><rect x="40.500" y="246.500" width="15.500" height="10.500" fill="url(#gm)" stroke="#333" stroke-width="1"/><path d="M41 258h15.500v-11" stroke="#ddd" stroke-width="1"/><path d="M59.5 260.5v-3.500l-3.500 3.500z" fill="#000"/><path d="M20.300 265c2.500 4.500 5.200 7.500 5.200 10.800 0 3-2.300 5-5.200 5s-5.200-2-5.200-5c0-3.300 2.700-6.300 5.200-10.800z" fill="url(#gd)" stroke="#777" stroke-width="1"/><path d="M32 281.5v-3.500l-3.500 3.500z" fill="#000"/><circle cx="44.500" cy="270.500" r="4.600" fill="url(#gk)"/><path d="M48 274l5.500 5.500" stroke="#222" stroke-width="1.600"/><path d="M58.5 281.5v-3.500l-3.500 3.500z" fill="#000"/><path d="M16.500 293v12.500l3-2.800 2.300 5 2.200-1-2.300-4.800 4.300-.2z" fill="#111" stroke="#111" stroke-width=".6"/><path d="M32 308v-3.500l-3.500 3.500z" fill="#000"/><text x="41" y="306.500" font-family="Liberation Serif,serif" font-size="19" fill="#111" stroke="none">T</text><path d="M58.5 308v-3.500l-3.500 3.500z" fill="#000"/><path d="M20.500 314l-4.500 9 2.500 4.500h4l2.500-4.500zM20.500 314v8M18 328.500h5M18.500 327.500v3M22.500 327.500v3" stroke="#222" stroke-width="1.100" fill="#f4f4f4"/><circle cx="20.500" cy="322.500" r=".9" fill="#222"/><path d="M32 330v-3.500l-3.500 3.500z" fill="#000"/><path d="M39 327c1-3 3.500-4.500 5-7 1-2.500 2.500-5 5-4.500 2 .5 2 2.500 3.500 3 1.500.3 3.500-1 4 .5.600 2-2.500 3-3.500 4.500-1 1.800.5 4-1.500 5-2 .8-3-1.800-5-1.800-2.500.1-4 2.500-6 2-1.200-.3-1.800-1-1.500-1.700z" fill="url(#gl)" stroke="#888" stroke-width="1"/><path d="M58.5 330v-3.500l-3.500 3.500z" fill="#000"/><path d="M14.500 341.500h13v10l-3.500 4h-9.500z" fill="url(#gl)" stroke="#555" stroke-width="1"/><path d="M27.500 351.500h-3.500v4M17 344.500h8M17 346.500h8M17 348.500h8" stroke="#444" stroke-width=".9"/><path d="M32 357v-3.500l-3.500 3.500z" fill="#000"/><path d="M40.500 356l1.500-3.500 8-8.500 2 2-8 8.500z" fill="#f8f8f8" stroke="#222" stroke-width="1"/><path d="M49 343l4.500 4.500M50.500 344.500l3-3.500c1-1 3 .8 2 2l-3 3.500" stroke="#222" stroke-width="1.800" fill="#333"/><path d="M58.5 357v-3.500l-3.500 3.500z" fill="#000"/><path d="M15.500 374c-1.500-2.500-3-4.500-2.800-5.500.500-1.200 2-.5 3.300 1.500l1 1.500-1-7c-.2-1.500 1.800-1.800 2.200-.3l1.200 5.300-.2-6.500c0-1.500 2.200-1.500 2.400 0l.6 6.500.8-5.500c.3-1.500 2.200-1.200 2.200.3l-.3 6 1.200-3.500c.5-1.300 2.200-.8 2 .6-.5 3.500-1.500 7-3.500 10.500h-6.500c-1-1-1.800-2.300-2.600-3.900z" fill="url(#gl)" stroke="#444" stroke-width="1"/><circle cx="44.500" cy="367.500" r="4.600" fill="url(#gl)" stroke="#444" stroke-width="1.400"/><path d="M48 371l5.500 5.500" stroke="#222" stroke-width="2.200"/></g></svg><div style="left:5px;top:111px;width:48px;height:1px;background:#a0a0a0"></div><div style="left:5px;top:112px;width:48px;height:1px;background:#fff"></div><div style="left:5px;top:204px;width:48px;height:1px;background:#a0a0a0"></div><div style="left:5px;top:205px;width:48px;height:1px;background:#fff"></div><div style="left:5px;top:252px;width:48px;height:1px;background:#a0a0a0"></div><div style="left:5px;top:253px;width:48px;height:1px;background:#fff"></div><div style="left:5px;top:303px;width:48px;height:1px;background:#a0a0a0"></div><div style="left:5px;top:304px;width:48px;height:1px;background:#fff"></div><div style="left:5px;top:357px;width:48px;height:1px;background:#a0a0a0"></div><div style="left:5px;top:358px;width:48px;height:1px;background:#fff"></div><div style="left:5px;top:387px;width:48px;height:1px;background:#a0a0a0"></div><div style="left:5px;top:388px;width:48px;height:1px;background:#fff"></div><div style="left:5px;top:411px;width:48px;height:1px;background:#a0a0a0"></div><div style="left:5px;top:412px;width:48px;height:1px;background:#fff"></div><div style="left:18px;top:322px;width:29px;height:29px;background:#fff;border:1px solid #000"></div><div style="left:6px;top:310px;width:28px;height:28px;background:#fff;border:1px solid #000"></div><svg style="left:37px;top:308px" width="12" height="12"><path d="M2 3.500c4-2 7 0 7 5M2 3.500l3-2.500M2 3.500l3.500 1.800M9 8.500l-2.500-2M9 8.500l2-2.500" stroke="#222" stroke-width="1.100" fill="none"/></svg><div style="left:9px;top:345px;width:7px;height:7px;background:#fff;border:1px solid #444"></div><div style="left:5px;top:341px;width:7px;height:7px;background:#000;border:1px solid #000"></div><div style="left:4px;top:363px;width:24px;height:20px;border:1px solid #6f8fe0;border-radius:3px;background:#c9d6f4"></div><div style="left:7px;top:366px;width:18px;height:14px;background:#fff;border:1px solid #333"></div><div style="left:11px;top:368px;width:10px;height:10px;border:1px solid #333;border-radius:50%;background:#fff"></div><div style="left:31px;top:366px;width:19px;height:14px;background:#b0b0b0;border:1px solid #333"></div><div style="left:35px;top:367px;width:10px;height:10px;border:1px solid #333;border-radius:50%;background:#fff"></div><div style="left:3px;top:391px;width:18px;height:17px;border:1px solid #6f8fe0;border-radius:3px;background:#c9d6f4"></div><div style="left:6px;top:394px;width:12px;height:11px;background:#ddd;border:1px solid #333;border-top-width:3px"></div><div style="left:9px;top:399px;width:7px;height:4px;border:1px solid #333"></div><div style="left:23px;top:393px;width:12px;height:12px;background:linear-gradient(#eee,#999);border:1px solid #333;border-top-width:2px"></div><div style="left:39px;top:393px;width:12px;height:12px;background:linear-gradient(#ddd,#888);border:1px solid #333"></div><svg style="left:7px;top:415px" width="46" height="20" viewBox="0 0 46 20"><path d="M3 3h10v3h-10z" fill="#555"/><path d="M5 6h10v11h-10z" fill="#f4f4f4" stroke="#333" stroke-width="1"/><path d="M9 9h8V5l8 6.500-8 6.500v-4h-8z" fill="#f8f8f8" stroke="#222" stroke-width="1.300"/><rect x="28.500" y="2.500" width="14" height="15" fill="#cfcfcf" stroke="#aaa"/><path d="M31 9l3 4 7-10" stroke="#777" stroke-width="2.200" fill="none"/></svg></div><div style="left:810px;top:83px;width:211px;height:634px;background:#ececec;border:3px solid #699bf0;border-top:0;outline:1px solid #3a6ad6;outline-offset:-1px;overflow:hidden"><div style="left:-3px;top:0px;width:211px;height:9px;background:linear-gradient(#9db6f0,#6f93e6 40%,#4c78dd 60%,#6d9cec);border:1px solid #4f7cdc"></div><div style="left:-3px;top:9px;width:211px;height:16px;background:linear-gradient(#a9bff2 0,#9db6f0 2px,#6f93e6 6px,#4c78dd 9px,#5b8ae4 12px,#7fb0f3 16px);border:1px solid #4f7cdc;border-bottom:0"></div><div style="left:191px;top:0px;width:14px;height:9px;background:linear-gradient(#a9bff2,#7a9ce8);border:1px solid #dfe8fb;border-top:0;border-radius:0 0 3px 3px"></div><svg style="left:191px;top:0" width="14" height="9"><path d="M3.500 2.500l3.500 3.500 3.500-3.500" stroke="#fff" stroke-width="1.800" fill="none"/></svg><div style="left:191px;top:13px;width:15px;height:12px;background:linear-gradient(#a9bff2,#6a8fe6);border:1px solid #dfe8fb;border-radius:2px"></div><svg style="left:191px;top:13px" width="15" height="12"><path d="M4 2.500l7 7M11 2.500l-7 7" stroke="#fff" stroke-width="2.200" fill="none"/></svg><div style="left:0px;top:25px;width:205px;height:16px;background:#c8c8c8"></div><svg style="left:0;top:25px" width="205" height="17"><path d="M104 2.500h46.400l12.600 13h-47z" fill="#ececec" stroke="#000" stroke-width="1"/><path d="M49 2.500h59l12 13h-59z" fill="#ececec" stroke="#000" stroke-width="1"/><path d="M0 15.500H205" stroke="#000" stroke-width="1"/><path d="M4 17V3h43.300l13 14z" fill="#ececec"/><path d="M0 15.500h3.500V2.500h43.800l12.900 13" fill="none" stroke="#000" stroke-width="1"/><path d="M196 6l4.500 3.500-4.500 3.500z" fill="#000"/></svg><span class="t" style="left:10px;top:29px;font-weight:bold;font-size:10px;font-family:'DejaVu Sans','Liberation Sans',sans-serif;letter-spacing:-.2px">Layers</span><span class="t" style="left:62px;top:29px;font-size:10px">Channels</span><span class="t" style="left:121px;top:29px;font-size:10px">Paths</span><div style="left:5px;top:47px;width:82px;height:14px;background:#fff"><span class="t" style="left:3px;top:2.5px;font-size:10px">Normal</span></div><div class="sbb" style="left:87px;top:47px;width:15px;height:14px;"></div><svg style="left:87px;top:47px" width="15" height="14"><path d="M4 5l3.500 3.500L11 5" stroke="#3f5c98" stroke-width="2.200" fill="none"/></svg><span class="t" style="left:110px;top:49px;font-size:10px">Opacity:</span><div style="left:152px;top:47px;width:35px;height:14px;background:#fff"><span class="t" style="left:6px;top:2.5px;font-size:10px;letter-spacing:-.6px">100%</span></div><div class="sbb" style="left:187px;top:47px;width:14px;height:14px;"></div><svg style="left:187px;top:47px" width="14" height="14"><path d="M5 3l4 4-4 4z" fill="#3f5c98"/></svg><div style="left:0px;top:65px;width:205px;height:1px;background:#a8a8a8"></div><div style="left:0px;top:66px;width:205px;height:1px;background:#fff"></div><span class="t" style="left:3px;top:72px;font-size:10px">Lock:</span><div style="left:38px;top:71px;width:12px;height:12px;background-color:#fff;background-image:linear-gradient(45deg,#ccc 25%,transparent 25%,transparent 75%,#ccc 75%),linear-gradient(45deg,#ccc 25%,transparent 25%,transparent 75%,#ccc 75%);background-size:6px 6px;background-position:0 0,3px 3px;border:1px solid #555"></div><svg style="left:55px;top:69px" width="16" height="16"><path d="M2 14.500c3 0 5-2 6.500-4.500L14 2.500 7 8.500c-2 1.500-2.500 4-5 6z" fill="#aaa" stroke="#444" stroke-width=".9"/></svg><svg style="left:74px;top:70px" width="15" height="15"><path d="M7.500 1v13M1 7.500h13M7.500 1l-2 2.500h4zM7.500 14l-2-2.500h4zM1 7.500l2.500-2v4zM14 7.500l-2.500-2v4z" stroke="#111" stroke-width="1" fill="#111"/></svg><svg style="left:94px;top:70px" width="13" height="14"><path d="M3.500 7V5c0-4 6-4 6 0v2" stroke="#222" stroke-width="1.500" fill="none"/><rect x="1.500" y="6.500" width="10" height="7" rx="1" fill="#333"/><rect x="3" y="8" width="7" height="2" fill="#888"/></svg><span class="t" style="left:132px;top:72px;font-size:10px">Fill:</span><div style="left:152px;top:70px;width:35px;height:14px;background:#fff"><span class="t" style="left:6px;top:2.5px;font-size:10px;letter-spacing:-.6px">100%</span></div><div class="sbb" style="left:187px;top:70px;width:14px;height:14px;"></div><svg style="left:187px;top:70px" width="14" height="14"><path d="M5 3l4 4-4 4z" fill="#3f5c98"/></svg><div style="left:0px;top:89px;width:205px;height:1px;background:#000"></div><div style="left:0px;top:90px;width:192px;height:527px;overflow:hidden;background:#ececec"><div style="left:0px;top:20px;width:192px;height:1px;background:#fff"></div><div style="left:4px;top:-6px;width:16px;height:16px;border:1px solid #d4d4d4;border-top-color:#9a9a9a;border-left-color:#9a9a9a"></div><svg style="left:5px;top:-4px" width="15" height="12" viewBox="0 0 15 12"><path d="M.8 6.500C3 3 6 2 7.500 2s4.500 1 6.700 4.500c-2 2.400-4.500 3.500-6.700 3.500S2.800 8.900 .8 6.500z" fill="#fdfdfd" stroke="#333" stroke-width=".8"/><path d="M.8 5.800C3.200 2.300 5.800 1.400 7.500 1.400s4.300.9 6.700 4.400" stroke="#000" stroke-width="2" fill="none"/><circle cx="7.500" cy="6.200" r="2.900" fill="#222"/><circle cx="7.500" cy="6.200" r="1.300" fill="#000"/><circle cx="6.500" cy="5.200" r=".7" fill="#ccc"/></svg><div style="left:26px;top:-6px;width:16px;height:16px;border:1px solid #d4d4d4;border-top-color:#9a9a9a;border-left-color:#9a9a9a"></div><svg style="left:30px;top:-5px" width="9" height="15" viewBox="0 0 9 15"><rect x="1.500" y=".8" width="6" height="8" rx="3" fill="#e4e4e4" stroke="#333" stroke-width="1"/><rect x="1.500" y="6.200" width="6" height="8" rx="3" fill="#e4e4e4" stroke="#333" stroke-width="1"/><path d="M3.500 3v3.500M5.500 3v3.500M3.500 8.500v3.500M5.500 8.500v3.500" stroke="#777" stroke-width=".8"/></svg><div style="left:0px;top:20px;width:44px;height:1px;background:#b4b4b4"></div><div style="left:47px;top:-13px;width:33px;height:33px;background-color:#fff;background-image:linear-gradient(45deg,#ccc 25%,transparent 25%,transparent 75%,#ccc 75%),linear-gradient(45deg,#ccc 25%,transparent 25%,transparent 75%,#ccc 75%);background-size:8px 8px;background-position:0 0,4px 4px;border:1px solid #000"></div><span class="t" style="left:83px;top:-3px;font-size:10px">Layer 10</span><div style="left:0px;top:57px;width:192px;height:1px;background:#fff"></div><div style="left:4px;top:31px;width:16px;height:16px;border:1px solid #d4d4d4;border-top-color:#9a9a9a;border-left-color:#9a9a9a"></div><svg style="left:5px;top:33px" width="15" height="12" viewBox="0 0 15 12"><path d="M.8 6.500C3 3 6 2 7.500 2s4.500 1 6.700 4.500c-2 2.400-4.500 3.500-6.700 3.500S2.800 8.900 .8 6.500z" fill="#fdfdfd" stroke="#333" stroke-width=".8"/><path d="M.8 5.800C3.200 2.300 5.800 1.400 7.500 1.400s4.300.9 6.700 4.400" stroke="#000" stroke-width="2" fill="none"/><circle cx="7.500" cy="6.200" r="2.900" fill="#222"/><circle cx="7.500" cy="6.200" r="1.300" fill="#000"/><circle cx="6.500" cy="5.200" r=".7" fill="#ccc"/></svg><div style="left:26px;top:31px;width:16px;height:16px;border:1px solid #d4d4d4;border-top-color:#9a9a9a;border-left-color:#9a9a9a"></div><svg style="left:30px;top:32px" width="9" height="15" viewBox="0 0 9 15"><rect x="1.500" y=".8" width="6" height="8" rx="3" fill="#e4e4e4" stroke="#333" stroke-width="1"/><rect x="1.500" y="6.200" width="6" height="8" rx="3" fill="#e4e4e4" stroke="#333" stroke-width="1"/><path d="M3.500 3v3.500M5.500 3v3.500M3.500 8.500v3.500M5.500 8.500v3.500" stroke="#777" stroke-width=".8"/></svg><div style="left:0px;top:57px;width:44px;height:1px;background:#b4b4b4"></div><div style="left:47px;top:24px;width:33px;height:33px;background-color:#fff;background-image:linear-gradient(45deg,#ccc 25%,transparent 25%,transparent 75%,#ccc 75%),linear-gradient(45deg,#ccc 25%,transparent 25%,transparent 75%,#ccc 75%);background-size:8px 8px;background-position:0 0,4px 4px;border:1px solid #000"></div><span class="t" style="left:83px;top:34px;font-size:10px">Layer 11</span><div style="left:0px;top:94px;width:192px;height:1px;background:#fff"></div><div style="left:4px;top:68px;width:16px;height:16px;border:1px solid #d4d4d4;border-top-color:#9a9a9a;border-left-color:#9a9a9a"></div><svg style="left:5px;top:70px" width="15" height="12" viewBox="0 0 15 12"><path d="M.8 6.500C3 3 6 2 7.500 2s4.500 1 6.700 4.500c-2 2.400-4.500 3.500-6.700 3.500S2.800 8.900 .8 6.500z" fill="#fdfdfd" stroke="#333" stroke-width=".8"/><path d="M.8 5.800C3.200 2.300 5.800 1.400 7.500 1.400s4.300.9 6.700 4.400" stroke="#000" stroke-width="2" fill="none"/><circle cx="7.500" cy="6.200" r="2.900" fill="#222"/><circle cx="7.500" cy="6.200" r="1.300" fill="#000"/><circle cx="6.500" cy="5.200" r=".7" fill="#ccc"/></svg><div style="left:26px;top:68px;width:16px;height:16px;border:1px solid #d4d4d4;border-top-color:#9a9a9a;border-left-color:#9a9a9a"></div><div style="left:0px;top:94px;width:44px;height:1px;background:#b4b4b4"></div><div style="left:47px;top:61px;width:33px;height:33px;background-color:#fff;background-image:linear-gradient(45deg,#ccc 25%,transparent 25%,transparent 75%,#ccc 75%),linear-gradient(45deg,#ccc 25%,transparent 25%,transparent 75%,#ccc 75%);background-size:8px 8px;background-position:0 0,4px 4px;border:1px solid #000"></div><span class="t" style="left:83px;top:71px;font-size:10px">Layer 19</span><div style="left:0px;top:131px;width:192px;height:1px;background:#fff"></div><div style="left:4px;top:105px;width:16px;height:16px;border:1px solid #d4d4d4;border-top-color:#9a9a9a;border-left-color:#9a9a9a"></div><svg style="left:5px;top:107px" width="15" height="12" viewBox="0 0 15 12"><path d="M.8 6.500C3 3 6 2 7.500 2s4.500 1 6.700 4.500c-2 2.400-4.500 3.500-6.700 3.500S2.800 8.900 .8 6.500z" fill="#fdfdfd" stroke="#333" stroke-width=".8"/><path d="M.8 5.800C3.200 2.300 5.800 1.400 7.500 1.400s4.300.9 6.700 4.400" stroke="#000" stroke-width="2" fill="none"/><circle cx="7.500" cy="6.200" r="2.900" fill="#222"/><circle cx="7.500" cy="6.200" r="1.300" fill="#000"/><circle cx="6.500" cy="5.200" r=".7" fill="#ccc"/></svg><div style="left:26px;top:105px;width:16px;height:16px;border:1px solid #d4d4d4;border-top-color:#9a9a9a;border-left-color:#9a9a9a"></div><div style="left:0px;top:131px;width:44px;height:1px;background:#b4b4b4"></div><div style="left:47px;top:98px;width:33px;height:33px;background-color:#fff;background-image:linear-gradient(45deg,#ccc 25%,transparent 25%,transparent 75%,#ccc 75%),linear-gradient(45deg,#ccc 25%,transparent 25%,transparent 75%,#ccc 75%);background-size:8px 8px;background-position:0 0,4px 4px;border:1px solid #000"><svg style="left:0;top:0" width="31" height="31"><path d="M22 5l4 2-1 5-3-3z" fill="#6a6a3a"/></svg></div><span class="t" style="left:83px;top:108px;font-size:10px">Layer 18</span><div style="left:0px;top:168px;width:192px;height:1px;background:#fff"></div><div style="left:4px;top:142px;width:16px;height:16px;border:1px solid #d4d4d4;border-top-color:#9a9a9a;border-left-color:#9a9a9a"></div><svg style="left:5px;top:144px" width="15" height="12" viewBox="0 0 15 12"><path d="M.8 6.500C3 3 6 2 7.500 2s4.500 1 6.700 4.500c-2 2.400-4.500 3.500-6.700 3.500S2.800 8.900 .8 6.500z" fill="#fdfdfd" stroke="#333" stroke-width=".8"/><path d="M.8 5.800C3.200 2.300 5.800 1.400 7.500 1.400s4.300.9 6.700 4.400" stroke="#000" stroke-width="2" fill="none"/><circle cx="7.500" cy="6.200" r="2.900" fill="#222"/><circle cx="7.500" cy="6.200" r="1.300" fill="#000"/><circle cx="6.500" cy="5.200" r=".7" fill="#ccc"/></svg><div style="left:26px;top:142px;width:16px;height:16px;border:1px solid #d4d4d4;border-top-color:#9a9a9a;border-left-color:#9a9a9a"></div><div style="left:0px;top:168px;width:44px;height:1px;background:#b4b4b4"></div><div style="left:47px;top:135px;width:33px;height:33px;background-color:#fff;background-image:linear-gradient(45deg,#ccc 25%,transparent 25%,transparent 75%,#ccc 75%),linear-gradient(45deg,#ccc 25%,transparent 25%,transparent 75%,#ccc 75%);background-size:8px 8px;background-position:0 0,4px 4px;border:1px solid #000"><svg style="left:0;top:0" width="31" height="31"><path d="M22 4l4 1.500 1 10-4-2z" fill="#20e8a8"/></svg></div><span class="t" style="left:83px;top:145px;font-size:10px">Layer 16</span><div style="left:0px;top:205px;width:192px;height:1px;background:#fff"></div><div style="left:4px;top:179px;width:16px;height:16px;border:1px solid #d4d4d4;border-top-color:#9a9a9a;border-left-color:#9a9a9a"></div><svg style="left:5px;top:181px" width="15" height="12" viewBox="0 0 15 12"><path d="M.8 6.500C3 3 6 2 7.500 2s4.500 1 6.700 4.500c-2 2.400-4.500 3.500-6.700 3.500S2.800 8.900 .8 6.500z" fill="#fdfdfd" stroke="#333" stroke-width=".8"/><path d="M.8 5.800C3.200 2.300 5.800 1.400 7.500 1.400s4.300.9 6.700 4.400" stroke="#000" stroke-width="2" fill="none"/><circle cx="7.500" cy="6.200" r="2.900" fill="#222"/><circle cx="7.500" cy="6.200" r="1.300" fill="#000"/><circle cx="6.500" cy="5.200" r=".7" fill="#ccc"/></svg><div style="left:26px;top:179px;width:16px;height:16px;border:1px solid #d4d4d4;border-top-color:#9a9a9a;border-left-color:#9a9a9a"></div><div style="left:0px;top:205px;width:44px;height:1px;background:#b4b4b4"></div><div style="left:47px;top:172px;width:33px;height:33px;background-color:#fff;background-image:linear-gradient(45deg,#ccc 25%,transparent 25%,transparent 75%,#ccc 75%),linear-gradient(45deg,#ccc 25%,transparent 25%,transparent 75%,#ccc 75%);background-size:8px 8px;background-position:0 0,4px 4px;border:1px solid #000"></div><span class="t" style="left:83px;top:182px;font-size:10px">Layer 10 copy</span><div style="left:0px;top:242px;width:192px;height:1px;background:#fff"></div><div style="left:4px;top:216px;width:16px;height:16px;border:1px solid #d4d4d4;border-top-color:#9a9a9a;border-left-color:#9a9a9a"></div><svg style="left:5px;top:218px" width="15" height="12" viewBox="0 0 15 12"><path d="M.8 6.500C3 3 6 2 7.500 2s4.500 1 6.700 4.500c-2 2.400-4.500 3.500-6.700 3.500S2.800 8.900 .8 6.500z" fill="#fdfdfd" stroke="#333" stroke-width=".8"/><path d="M.8 5.800C3.200 2.300 5.800 1.400 7.500 1.400s4.300.9 6.700 4.400" stroke="#000" stroke-width="2" fill="none"/><circle cx="7.500" cy="6.200" r="2.900" fill="#222"/><circle cx="7.500" cy="6.200" r="1.300" fill="#000"/><circle cx="6.500" cy="5.200" r=".7" fill="#ccc"/></svg><div style="left:26px;top:216px;width:16px;height:16px;border:1px solid #d4d4d4;border-top-color:#9a9a9a;border-left-color:#9a9a9a"></div><div style="left:0px;top:242px;width:44px;height:1px;background:#b4b4b4"></div><div style="left:47px;top:209px;width:33px;height:33px;background-color:#fff;background-image:linear-gradient(45deg,#ccc 25%,transparent 25%,transparent 75%,#ccc 75%),linear-gradient(45deg,#ccc 25%,transparent 25%,transparent 75%,#ccc 75%);background-size:8px 8px;background-position:0 0,4px 4px;border:1px solid #000"></div><span class="t" style="left:83px;top:219px;font-size:10px">Layer 17</span><div style="left:0px;top:279px;width:192px;height:1px;background:#fff"></div><div style="left:4px;top:253px;width:16px;height:16px;border:1px solid #d4d4d4;border-top-color:#9a9a9a;border-left-color:#9a9a9a"></div><svg style="left:5px;top:255px" width="15" height="12" viewBox="0 0 15 12"><path d="M.8 6.500C3 3 6 2 7.500 2s4.500 1 6.700 4.500c-2 2.400-4.500 3.500-6.700 3.500S2.800 8.900 .8 6.500z" fill="#fdfdfd" stroke="#333" stroke-width=".8"/><path d="M.8 5.800C3.200 2.300 5.800 1.400 7.500 1.400s4.300.9 6.700 4.400" stroke="#000" stroke-width="2" fill="none"/><circle cx="7.500" cy="6.200" r="2.900" fill="#222"/><circle cx="7.500" cy="6.200" r="1.300" fill="#000"/><circle cx="6.500" cy="5.200" r=".7" fill="#ccc"/></svg><div style="left:26px;top:253px;width:16px;height:16px;border:1px solid #d4d4d4;border-top-color:#9a9a9a;border-left-color:#9a9a9a"></div><svg style="left:30px;top:254px" width="9" height="15" viewBox="0 0 9 15"><rect x="1.500" y=".8" width="6" height="8" rx="3" fill="#e4e4e4" stroke="#333" stroke-width="1"/><rect x="1.500" y="6.200" width="6" height="8" rx="3" fill="#e4e4e4" stroke="#333" stroke-width="1"/><path d="M3.500 3v3.500M5.500 3v3.500M3.500 8.500v3.500M5.500 8.500v3.500" stroke="#777" stroke-width=".8"/></svg><div style="left:0px;top:279px;width:44px;height:1px;background:#b4b4b4"></div><div style="left:47px;top:246px;width:33px;height:33px;background-color:#fff;background-image:linear-gradient(45deg,#ccc 25%,transparent 25%,transparent 75%,#ccc 75%),linear-gradient(45deg,#ccc 25%,transparent 25%,transparent 75%,#ccc 75%);background-size:8px 8px;background-position:0 0,4px 4px;border:1px solid #000"><svg style="left:0;top:0" width="31" height="31"><path d="M7 4l10-1.500 1 9-10 2z" fill="#20f0b0"/></svg></div><span class="t" style="left:83px;top:256px;font-size:10px">Layer 9</span><div style="left:0px;top:316px;width:192px;height:1px;background:#fff"></div><div style="left:4px;top:290px;width:16px;height:16px;border:1px solid #d4d4d4;border-top-color:#9a9a9a;border-left-color:#9a9a9a"></div><svg style="left:5px;top:292px" width="15" height="12" viewBox="0 0 15 12"><path d="M.8 6.500C3 3 6 2 7.500 2s4.500 1 6.700 4.500c-2 2.400-4.500 3.500-6.700 3.500S2.800 8.900 .8 6.500z" fill="#fdfdfd" stroke="#333" stroke-width=".8"/><path d="M.8 5.800C3.200 2.300 5.800 1.400 7.500 1.400s4.300.9 6.700 4.400" stroke="#000" stroke-width="2" fill="none"/><circle cx="7.500" cy="6.200" r="2.900" fill="#222"/><circle cx="7.500" cy="6.200" r="1.300" fill="#000"/><circle cx="6.500" cy="5.200" r=".7" fill="#ccc"/></svg><div style="left:26px;top:290px;width:16px;height:16px;border:1px solid #d4d4d4;border-top-color:#9a9a9a;border-left-color:#9a9a9a"></div><div style="left:0px;top:316px;width:44px;height:1px;background:#b4b4b4"></div><div style="left:47px;top:283px;width:33px;height:33px;background-color:#fff;background-image:linear-gradient(45deg,#ccc 25%,transparent 25%,transparent 75%,#ccc 75%),linear-gradient(45deg,#ccc 25%,transparent 25%,transparent 75%,#ccc 75%);background-size:8px 8px;background-position:0 0,4px 4px;border:1px solid #000"><svg style="left:0;top:0" width="31" height="31"><path d="M3 12l8-1 6 1 5 3-5 3-6-1-7 2zM4 5v6M18 4v6M6 18v6M10 19v8M20 16v6" fill="#555" stroke="#667" stroke-width="1"/><path d="M12 11l5 1 2 4-5 1z" fill="#eee"/></svg></div><span class="t" style="left:83px;top:293px;font-size:10px">Layer 2</span><div style="left:0px;top:353px;width:192px;height:1px;background:#fff"></div><div style="left:4px;top:327px;width:16px;height:16px;border:1px solid #d4d4d4;border-top-color:#9a9a9a;border-left-color:#9a9a9a"></div><svg style="left:5px;top:329px" width="15" height="12" viewBox="0 0 15 12"><path d="M.8 6.500C3 3 6 2 7.500 2s4.500 1 6.700 4.500c-2 2.400-4.500 3.500-6.700 3.500S2.800 8.900 .8 6.500z" fill="#fdfdfd" stroke="#333" stroke-width=".8"/><path d="M.8 5.800C3.200 2.300 5.800 1.400 7.500 1.400s4.300.9 6.700 4.400" stroke="#000" stroke-width="2" fill="none"/><circle cx="7.500" cy="6.200" r="2.900" fill="#222"/><circle cx="7.500" cy="6.200" r="1.300" fill="#000"/><circle cx="6.500" cy="5.200" r=".7" fill="#ccc"/></svg><div style="left:26px;top:327px;width:16px;height:16px;border:1px solid #d4d4d4;border-top-color:#9a9a9a;border-left-color:#9a9a9a"></div><div style="left:0px;top:353px;width:44px;height:1px;background:#b4b4b4"></div><div style="left:47px;top:320px;width:33px;height:33px;background-color:#fff;background-image:linear-gradient(45deg,#ccc 25%,transparent 25%,transparent 75%,#ccc 75%),linear-gradient(45deg,#ccc 25%,transparent 25%,transparent 75%,#ccc 75%);background-size:8px 8px;background-position:0 0,4px 4px;border:1px solid #000"><svg style="left:0;top:0" width="31" height="31"><rect x="18" y="3" width="1.500" height="1.500" fill="#333"/></svg></div><span class="t" style="left:83px;top:330px;font-size:10px">Layer 15</span><div style="left:0px;top:390px;width:192px;height:1px;background:#fff"></div><div style="left:4px;top:364px;width:16px;height:16px;border:1px solid #d4d4d4;border-top-color:#9a9a9a;border-left-color:#9a9a9a"></div><svg style="left:5px;top:366px" width="15" height="12" viewBox="0 0 15 12"><path d="M.8 6.500C3 3 6 2 7.500 2s4.500 1 6.700 4.500c-2 2.400-4.500 3.500-6.700 3.500S2.800 8.900 .8 6.500z" fill="#fdfdfd" stroke="#333" stroke-width=".8"/><path d="M.8 5.800C3.200 2.300 5.800 1.400 7.500 1.400s4.300.9 6.700 4.400" stroke="#000" stroke-width="2" fill="none"/><circle cx="7.500" cy="6.200" r="2.900" fill="#222"/><circle cx="7.500" cy="6.200" r="1.300" fill="#000"/><circle cx="6.500" cy="5.200" r=".7" fill="#ccc"/></svg><div style="left:26px;top:364px;width:16px;height:16px;border:1px solid #d4d4d4;border-top-color:#9a9a9a;border-left-color:#9a9a9a"></div><div style="left:0px;top:390px;width:44px;height:1px;background:#b4b4b4"></div><div style="left:47px;top:357px;width:33px;height:33px;background-color:#fff;background-image:linear-gradient(45deg,#ccc 25%,transparent 25%,transparent 75%,#ccc 75%),linear-gradient(45deg,#ccc 25%,transparent 25%,transparent 75%,#ccc 75%);background-size:8px 8px;background-position:0 0,4px 4px;border:1px solid #000"><svg style="left:0;top:0" width="31" height="31"><path d="M10 13l5-1.500 2 2.500-4 1.500z" fill="#111"/></svg></div><span class="t" style="left:83px;top:367px;font-size:10px">Layer 7</span><div style="left:0px;top:427px;width:192px;height:1px;background:#fff"></div><div style="left:4px;top:401px;width:16px;height:16px;border:1px solid #d4d4d4;border-top-color:#9a9a9a;border-left-color:#9a9a9a"></div><svg style="left:5px;top:403px" width="15" height="12" viewBox="0 0 15 12"><path d="M.8 6.500C3 3 6 2 7.500 2s4.500 1 6.700 4.500c-2 2.400-4.500 3.500-6.700 3.500S2.800 8.900 .8 6.500z" fill="#fdfdfd" stroke="#333" stroke-width=".8"/><path d="M.8 5.800C3.200 2.300 5.800 1.400 7.500 1.400s4.300.9 6.700 4.400" stroke="#000" stroke-width="2" fill="none"/><circle cx="7.500" cy="6.200" r="2.900" fill="#222"/><circle cx="7.500" cy="6.200" r="1.300" fill="#000"/><circle cx="6.500" cy="5.200" r=".7" fill="#ccc"/></svg><div style="left:26px;top:401px;width:16px;height:16px;border:1px solid #d4d4d4;border-top-color:#9a9a9a;border-left-color:#9a9a9a"></div><div style="left:0px;top:427px;width:44px;height:1px;background:#b4b4b4"></div><div style="left:47px;top:394px;width:33px;height:33px;background-color:#fff;background-image:linear-gradient(45deg,#ccc 25%,transparent 25%,transparent 75%,#ccc 75%),linear-gradient(45deg,#ccc 25%,transparent 25%,transparent 75%,#ccc 75%);background-size:8px 8px;background-position:0 0,4px 4px;border:1px solid #000"><svg style="left:0;top:0" width="31" height="31"><path d="M4 5l13-2 .5 6-13 3z" fill="#0a0f0a"/><path d="M6 8l3-1M10 6.500l3 .5M13 8l2-1.500" stroke="#8a8a4a" stroke-width=".7"/></svg></div><span class="t" style="left:83px;top:404px;font-size:10px">Layer 13</span><div style="left:0px;top:464px;width:192px;height:1px;background:#fff"></div><div style="left:4px;top:438px;width:16px;height:16px;border:1px solid #d4d4d4;border-top-color:#9a9a9a;border-left-color:#9a9a9a"></div><svg style="left:5px;top:440px" width="15" height="12" viewBox="0 0 15 12"><path d="M.8 6.500C3 3 6 2 7.500 2s4.500 1 6.700 4.500c-2 2.400-4.500 3.500-6.700 3.500S2.800 8.900 .8 6.500z" fill="#fdfdfd" stroke="#333" stroke-width=".8"/><path d="M.8 5.800C3.200 2.300 5.800 1.400 7.500 1.400s4.300.9 6.700 4.400" stroke="#000" stroke-width="2" fill="none"/><circle cx="7.500" cy="6.200" r="2.900" fill="#222"/><circle cx="7.500" cy="6.200" r="1.300" fill="#000"/><circle cx="6.500" cy="5.200" r=".7" fill="#ccc"/></svg><div style="left:26px;top:438px;width:16px;height:16px;border:1px solid #d4d4d4;border-top-color:#9a9a9a;border-left-color:#9a9a9a"></div><div style="left:0px;top:464px;width:44px;height:1px;background:#b4b4b4"></div><div style="left:47px;top:431px;width:33px;height:33px;background-color:#fff;background-image:linear-gradient(45deg,#ccc 25%,transparent 25%,transparent 75%,#ccc 75%),linear-gradient(45deg,#ccc 25%,transparent 25%,transparent 75%,#ccc 75%);background-size:8px 8px;background-position:0 0,4px 4px;border:1px solid #000"><svg style="left:0;top:0" width="31" height="31"><path d="M27 27l3-1v4h-4z" fill="#b8a040"/></svg></div><span class="t" style="left:83px;top:441px;font-size:10px">Layer 24</span><div style="left:0px;top:501px;width:192px;height:1px;background:#fff"></div><div style="left:4px;top:475px;width:16px;height:16px;border:1px solid #d4d4d4;border-top-color:#9a9a9a;border-left-color:#9a9a9a"></div><svg style="left:5px;top:477px" width="15" height="12" viewBox="0 0 15 12"><path d="M.8 6.500C3 3 6 2 7.500 2s4.500 1 6.700 4.500c-2 2.400-4.500 3.500-6.700 3.500S2.800 8.900 .8 6.500z" fill="#fdfdfd" stroke="#333" stroke-width=".8"/><path d="M.8 5.800C3.200 2.300 5.800 1.400 7.500 1.400s4.300.9 6.700 4.400" stroke="#000" stroke-width="2" fill="none"/><circle cx="7.500" cy="6.200" r="2.900" fill="#222"/><circle cx="7.500" cy="6.200" r="1.300" fill="#000"/><circle cx="6.500" cy="5.200" r=".7" fill="#ccc"/></svg><div style="left:26px;top:475px;width:16px;height:16px;border:1px solid #d4d4d4;border-top-color:#9a9a9a;border-left-color:#9a9a9a"></div><div style="left:0px;top:501px;width:44px;height:1px;background:#b4b4b4"></div><div style="left:47px;top:468px;width:33px;height:33px;background-color:#fff;background-image:linear-gradient(45deg,#ccc 25%,transparent 25%,transparent 75%,#ccc 75%),linear-gradient(45deg,#ccc 25%,transparent 25%,transparent 75%,#ccc 75%);background-size:8px 8px;background-position:0 0,4px 4px;border:1px solid #000"><svg style="left:0;top:0" width="31" height="31"><defs><linearGradient id="l25" x1="0" y1="1" x2="1" y2="0"><stop offset="0" stop-color="#4a4a28"/><stop offset=".5" stop-color="#0c100c"/><stop offset="1" stop-color="#000"/></linearGradient></defs><path d="M0 31V25l9-5 8-3 5 2 6 9 3 3z" fill="url(#l25)"/></svg></div><svg style="left:83px;top:477px" width="9" height="15" viewBox="0 0 9 15"><rect x="1.500" y=".8" width="6" height="8" rx="3" fill="#e4e4e4" stroke="#333" stroke-width="1"/><rect x="1.500" y="6.200" width="6" height="8" rx="3" fill="#e4e4e4" stroke="#333" stroke-width="1"/><path d="M3.500 3v3.500M5.500 3v3.500M3.500 8.500v3.500M5.500 8.500v3.500" stroke="#777" stroke-width=".8"/></svg><div style="left:94px;top:468px;width:33px;height:33px;border:1px solid #000;background:radial-gradient(circle at 35% 75%,#fff 0,#ddd 15%,#000 60%)"></div><span class="t" style="left:130px;top:478px;font-size:10px">Layer 25</span><div style="left:0px;top:538px;width:192px;height:1px;background:#fff"></div><div style="left:4px;top:512px;width:16px;height:16px;border:1px solid #d4d4d4;border-top-color:#9a9a9a;border-left-color:#9a9a9a"></div><svg style="left:5px;top:514px" width="15" height="12" viewBox="0 0 15 12"><path d="M.8 6.500C3 3 6 2 7.500 2s4.500 1 6.700 4.500c-2 2.400-4.500 3.500-6.700 3.500S2.800 8.900 .8 6.500z" fill="#fdfdfd" stroke="#333" stroke-width=".8"/><path d="M.8 5.800C3.200 2.300 5.800 1.400 7.500 1.400s4.300.9 6.700 4.400" stroke="#000" stroke-width="2" fill="none"/><circle cx="7.500" cy="6.200" r="2.900" fill="#222"/><circle cx="7.500" cy="6.200" r="1.300" fill="#000"/><circle cx="6.500" cy="5.200" r=".7" fill="#ccc"/></svg><div style="left:26px;top:512px;width:16px;height:16px;border:1px solid #d4d4d4;border-top-color:#9a9a9a;border-left-color:#9a9a9a"></div><div style="left:0px;top:538px;width:44px;height:1px;background:#b4b4b4"></div><div style="left:47px;top:505px;width:33px;height:33px;background:#000;border:1px solid #000"></div><span class="t" style="left:83px;top:515px;font-size:10px;font-style:italic">Background</span><svg style="left:176px;top:513px" width="12" height="13"><path d="M3.500 6V4.500c0-3.500 5-3.500 5 0V6" stroke="#444" stroke-width="1.200" fill="none"/><rect x="1.500" y="5.500" width="9" height="6.500" fill="#f4f4f4" stroke="#444"/></svg><div style="left:22px;top:0px;width:1px;height:530px;background:#b8b8b8"></div><div style="left:23px;top:0px;width:1px;height:530px;background:#fff"></div><div style="left:44px;top:0px;width:1px;height:530px;background:#555"></div></div><div class="sbv" style="left:192px;top:90px;width:15px;height:527px;"></div><div class="sbb" style="left:192px;top:92px;width:15px;height:15px"><svg style="left:-1px;top:-1px" width="15" height="15"><path d="M3.500 9.500L7.500 5.500l4 4" stroke="#4a6392" stroke-width="2.200" fill="none"/></svg></div><div class="sbb" style="left:192px;top:601px;width:15px;height:15px"><svg style="left:-1px;top:-1px" width="15" height="15"><path d="M3.500 5.500L7.500 9.500l4-4" stroke="#4a6392" stroke-width="2.200" fill="none"/></svg></div><div class="thv" style="left:193px;top:259px;width:13px;height:333px;"></div><div style="left:0px;top:617px;width:205px;height:1px;background:#000"></div><svg style="left:0;top:617.5px" width="205" height="13" viewBox="0 1.500 205 13"><rect width="205" height="16" fill="#ececec"/><circle cx="36.500" cy="8" r="6" fill="#333"/><text x="33.500" y="12" font-family="Liberation Serif,serif" font-style="italic" font-weight="bold" font-size="11" fill="#fff">f</text><path d="M44 13h4l-2 2z" fill="#000"/><rect x="57.500" y="2.500" width="13" height="11" fill="#bbb" stroke="#333"/><circle cx="64" cy="8" r="3.400" fill="#fff" stroke="#333" stroke-width=".8"/><path d="M86.500 4.500h4l1 1.500h6.500v7.500h-11.500z" fill="#f0f0f0" stroke="#777"/><circle cx="119" cy="8" r="5.500" fill="#fff" stroke="#333"/><path d="M115.100 11.900A5.500 5.500 0 0 1 122.900 4.100z" fill="#222"/><path d="M127 13h4l-2 2z" fill="#000"/><path d="M146.500 4.500h8v8h-8z" fill="#fff" stroke="#555"/><path d="M150 8.500h4.500v4h-4.500z" fill="#444"/><path d="M173.500 6.500h7l-.8 7h-5.400zM172.500 4.500h9M175.500 4.500v-1.500h3v1.500M175.800 8v4M178.200 8v4" fill="#eee" stroke="#222" stroke-width="1"/><rect x="191" y="0" width="1" height="16" fill="#999"/><path d="M201 14h2v-2h-2zM197 14h2v-2h-2zM201 10h2v-2h-2zM193 14h2v-2h-2zM201 6h2v-2h-2zM197 10h2v-2h-2z" fill="#cfd6e6"/></svg></div><div style="left:0px;top:0px;width:1024px;height:22px;background:linear-gradient(#3f66c8 0,#3f66c8 1px,#a8c0f3 1px,#b2c7f4 3px,#88a6ec 6px,#5a82e0 10px,#4d79de 13px,#6a98ea 17px,#94bdf6 20px,#9cc4f8 21px,#3a5fc0 21px)"></div><svg style="left:2px;top:1px" width="18" height="18" viewBox="0 0 16 16"><rect x=".5" y="1.500" width="13" height="13" rx="2" fill="#f4f4f4" stroke="#b8bcc8" stroke-width=".6"/><path d="M3 13c1-4 4.500-9.500 9.500-12 1.500 3.500-3 9.500-7.500 12z" fill="#5aa030"/><path d="M5.500 9.500c1.500-2.500 4-5.500 6.500-7 .5 2.500-2.500 6-4.500 8z" fill="#d0d040"/><path d="M2.800 13.500l1.400-4 2.300 2z" fill="#f07818"/><path d="M5 13l2-1.800 1.600.8-1.800 1.500z" fill="#2888d0"/></svg><span class="t" style="left:23px;top:4px;color:#fff;font-weight:bold;font-size:13px;text-shadow:1px 1px 0 #1c2f9c,1px 0 0 #3048b0">Adobe Photoshop</span><div style="left:926px;top:0px;width:25px;height:14px;border-radius:0 0 0 6px;border:1px solid #e4ecfc;border-top:0;background:linear-gradient(#a4bcf2 0,#86a6ec 30%,#5c86e3 48%,#3f70dc 55%,#5a8ae6 80%,#74a4f0 100%)"></div><div style="left:951px;top:0px;width:26px;height:14px;border:1px solid #e4ecfc;border-top:0;border-left-color:#7a9ce8;background:linear-gradient(#a4bcf2 0,#86a6ec 30%,#5c86e3 48%,#3f70dc 55%,#5a8ae6 80%,#74a4f0 100%)"></div><div style="left:977px;top:0px;width:41px;height:14px;border-radius:0 0 6px 0;border:1px solid #f0d0c8;border-top:0;background:linear-gradient(#eeb4a6 0,#e08c7a 30%,#d66a54 48%,#c8442c 55%,#d86a4c 80%,#e89474 100%)"></div><svg style="left:926px;top:0" width="93" height="14"><rect x="6.500" y="7.500" width="12" height="3.500" fill="#fff" stroke="#2c4aa0" stroke-width="1"/><path d="M33.500 2.500h8v7h-2M31.500 4.500h8v7h-8z" fill="none" stroke="#2c4aa0" stroke-width="3"/><path d="M33.500 2.500h8v7h-2M31.500 4.500h8v7h-8z" fill="none" stroke="#fff" stroke-width="1.400"/><path d="M65.500 2h4l2.500 3 2.500-3h4l-4.500 4.500 4.700 4.500h-4.200l-2.500-2.800-2.500 2.800h-4.200l4.700-4.500z" fill="#fff" stroke="#5a3028" stroke-width="1" stroke-linejoin="round"/></svg><div style="left:0px;top:22px;width:1024px;height:21px;background:linear-gradient(#fbfbfb,#f6f6f6);border-bottom:1px solid #a4a4a4"></div><span class="t" style="left:6px;top:26px;font-size:11px;letter-spacing:.25px">File</span><span class="t" style="left:34px;top:26px;font-size:11px;letter-spacing:.25px">Edit</span><span class="t" style="left:65px;top:26px;font-size:11px;letter-spacing:.25px">Image</span><span class="t" style="left:107px;top:26px;font-size:11px;letter-spacing:.25px">Layer</span><span class="t" style="left:145px;top:26px;font-size:11px;letter-spacing:.25px">Select</span><span class="t" style="left:186px;top:26px;font-size:11px;letter-spacing:.25px">Filter</span><span class="t" style="left:223px;top:26px;font-size:11px;letter-spacing:.25px">View</span><span class="t" style="left:259px;top:26px;font-size:11px;letter-spacing:.25px">Window</span><span class="t" style="left:310px;top:26px;font-size:11px;letter-spacing:.25px">Help</span><div style="left:0px;top:43px;width:1024px;height:34px;background:#ececec;border-top:1px solid #fff;border-bottom:2px solid #fcfcfc"></div><div style="left:6px;top:47px;width:2px;height:24px;background:repeating-linear-gradient(#b0b0b0 0,#b0b0b0 1px,transparent 1px,transparent 3px)"></div><div style="left:22px;top:53px;width:16px;height:12px;background:linear-gradient(90deg,#fff,#000);border:1px solid #888;box-shadow:1px 1px 0 #aaa"></div><svg style="left:46px;top:58px" width="7" height="4"><path d="M0 0h7L3.500 3.500z" fill="#000"/></svg><div style="left:62px;top:45px;width:1px;height:28px;background:#a8a8a8"></div><div style="left:63px;top:45px;width:1px;height:28px;background:#fff"></div><div style="left:69px;top:49px;width:85px;height:20px;background:#fff;border:1px solid #000"><div style="left:1px;top:1px;width:72px;height:16px;background:linear-gradient(90deg,#000,#fff)"></div><div style="left:74px;top:-1px;width:1px;height:20px;background:#000"></div><svg style="left:76px;top:7px" width="7" height="4"><path d="M0 0h7L3.500 3.500z" fill="#000"/></svg></div><div style="left:163px;top:45px;width:1px;height:28px;background:#a8a8a8"></div><div style="left:164px;top:45px;width:1px;height:28px;background:#fff"></div><div style="left:173px;top:49px;width:20px;height:19px;border:1px solid #6f8fe0;border-radius:3px;background:#c9d6f4"></div><div style="left:177px;top:52px;width:14px;height:13px;background:linear-gradient(90deg,#fff,#222);border:1px solid #555"></div><div style="left:194px;top:52px;width:16px;height:13px;background:radial-gradient(circle,#eee 0,#222 75%);border:1px solid #444"></div><div style="left:213px;top:52px;width:16px;height:13px;background:conic-gradient(from 315deg,#111,#eee);border:1px solid #444"></div><div style="left:232px;top:52px;width:16px;height:13px;background:linear-gradient(#222,#f4f4f4 50%,#222);border:1px solid #444"></div><div style="left:251px;top:52px;width:16px;height:13px;background:radial-gradient(circle,#fff 0,#333 45%,#000 80%);border:1px solid #222"></div><div style="left:277px;top:45px;width:1px;height:28px;background:#a8a8a8"></div><div style="left:278px;top:45px;width:1px;height:28px;background:#fff"></div><span class="t" style="left:286px;top:55px;font-size:10px;letter-spacing:.1px">Mode:</span><div style="left:320px;top:51px;width:71px;height:15px;background:#fff"><span class="t" style="left:3px;top:3px;font-size:10px;letter-spacing:.1px">Normal</span></div><div class="sbb" style="left:391px;top:51px;width:15px;height:15px;"></div><svg style="left:391px;top:51px" width="15" height="15"><path d="M4 5.500l3.500 3.500L11 5.500" stroke="#3f5c98" stroke-width="2.200" fill="none"/></svg><span class="t" style="left:411px;top:55px;font-size:10px">Opacity:</span><div style="left:453px;top:51px;width:34px;height:15px;background:#fff"><span class="t" style="left:6px;top:3px;font-size:10px;letter-spacing:-.6px">100%</span></div><div class="sbb" style="left:488px;top:51px;width:14px;height:15px;"></div><svg style="left:488px;top:51px" width="14" height="15"><path d="M5 3.500l4 4-4 4z" fill="#3f5c98"/></svg><div style="left:521px;top:53px;width:11px;height:11px;background:#fff;border:1px solid #3a5ea8"></div><svg style="left:521px;top:53px" width="11" height="11"><path d="M2.500 5l2 2.500L8.500 3" stroke="#2a4a98" stroke-width="1.600" fill="none"/></svg><span class="t" style="left:534.5px;top:55px;font-size:10px;letter-spacing:-0.3px">Reverse</span><div style="left:580px;top:53px;width:11px;height:11px;background:#fff;border:1px solid #3a5ea8"></div><svg style="left:580px;top:53px" width="11" height="11"><path d="M2.500 5l2 2.500L8.500 3" stroke="#2a4a98" stroke-width="1.600" fill="none"/></svg><span class="t" style="left:593.5px;top:55px;font-size:10px;letter-spacing:-0.1px">Dither</span><div style="left:631px;top:53px;width:11px;height:11px;background:#fff;border:1px solid #3a5ea8"></div><svg style="left:631px;top:53px" width="11" height="11"><path d="M2.500 5l2 2.500L8.500 3" stroke="#2a4a98" stroke-width="1.600" fill="none"/></svg><span class="t" style="left:644.5px;top:55px;font-size:10px;letter-spacing:0px">Transparency</span><div style="left:800px;top:45px;width:1px;height:28px;background:#000"></div><svg style="left:808px;top:49px" width="22" height="22" viewBox="0 0 22 22"><path d="M1.500 8.500h5l1.500 2h9v10h-15.500z" fill="#d8d8d8" stroke="#777" stroke-width="1"/><path d="M1.500 20.500l3-7h15l-2.500 7z" fill="#eee" stroke="#777" stroke-width="1"/><circle cx="13" cy="6" r="3.600" fill="#f4f4f4" stroke="#666" stroke-width="1.400"/><path d="M15.500 8.500l4 4" stroke="#444" stroke-width="1.800"/></svg><div style="left:839px;top:48px;width:179px;height:23px;background:#c8c8c8;border:1px solid #000;border-left-width:2px;border-bottom-width:2px;overflow:hidden"><div style="left:0px;top:7px;width:176px;height:14px;background:#f2f2f2;border-top:1px solid #000"></div><svg style="left:0;top:7px" width="176" height="14"><path d="M50 0l13 14M106 0l13 14M161 0l15 14" stroke="#000" stroke-width="1" fill="none"/><path d="M161 0l15 14V0z" fill="#c8c8c8" stroke="#000" stroke-width="1"/></svg><span class="t" style="left:8px;top:9.5px;font-size:10px">Brushes</span><span class="t" style="left:56px;top:9.5px;font-size:10px">ol Presets</span><span class="t" style="left:115px;top:9.5px;font-size:10px">er Comps</span></div><div style="left:0px;top:743px;width:1024px;height:25px;background:linear-gradient(#fff 0,#fcfcfc 2px,#9a9a9a 8px,#202020 14px,#000 18px);border-top:1px solid #10108c"></div><div style="left:0px;top:743px;width:383px;height:25px;background:linear-gradient(#8eb0f2 0,#7fa2ee 3px,#5b82e0 9px,#4f78dc 13px,#6690e6 19px,#8ab2f4 25px);border-top:1px solid #10108c"></div><svg style="left:15px;top:746px" width="20" height="20" viewBox="0 0 20 20" opacity=".55"><path d="M3 3.500c2-1 4-1 6 0l-1 6c-2-1-4-1-6 0z" fill="#c8d4f4"/><path d="M10 4c2 1 4 1 6 0l-1 6c-2 1-4 1-6 0z" fill="#c8d4f4"/><path d="M2 10.500c2-1 4-1 6 0l-1 6c-2-1-4-1-6 0z" fill="#c8d4f4"/><path d="M9 11c2 1 4 1 6 0l-1 6c-2 1-4 1-6 0z" fill="#c8d4f4"/></svg><svg style="left:68px;top:748px" width="16" height="16"><circle cx="8" cy="8" r="7.300" fill="#1f58c0" stroke="#dfe8fb" stroke-width="1"/><path d="M4.500 11V5.500h7V11M8 8v3" stroke="#fff" stroke-width="1.700" fill="none"/></svg><span class="t" style="left:87px;top:751px;color:#fff;font-size:11px">Live-co.com / Арена....</span><div style="left:220px;top:746px;width:156px;height:19px;border:1px solid #dfe6f6;border-radius:3px;background:linear-gradient(#a9b4d4,#98a4c8 50%,#a6b2d2);box-shadow:inset 0 0 0 1px #8090b8"></div><svg style="left:229px;top:748px" width="16" height="16" viewBox="0 0 16 16"><rect x=".5" y="1.500" width="13" height="13" rx="2" fill="#f4f4f4" stroke="#b8bcc8" stroke-width=".6"/><path d="M3 13c1-4 4.500-9.500 9.500-12 1.500 3.500-3 9.500-7.500 12z" fill="#5aa030"/><path d="M5.500 9.500c1.500-2.500 4-5.500 6.500-7 .5 2.500-2.500 6-4.500 8z" fill="#d0d040"/><path d="M2.800 13.500l1.400-4 2.300 2z" fill="#f07818"/><path d="M5 13l2-1.800 1.600.8-1.800 1.500z" fill="#2888d0"/></svg><span class="t" style="left:248px;top:751px;color:#fff;font-size:11px">Adobe Photoshop</span><div style="left:979px;top:745px;width:45px;height:23px;background:linear-gradient(#86aaf0,#5a82e0 40%,#4f78dc 60%,#7aa4f0)"></div><span class="t" style="left:983px;top:751px;color:#fff;font-size:11px">22:37</span></div></body></html>
